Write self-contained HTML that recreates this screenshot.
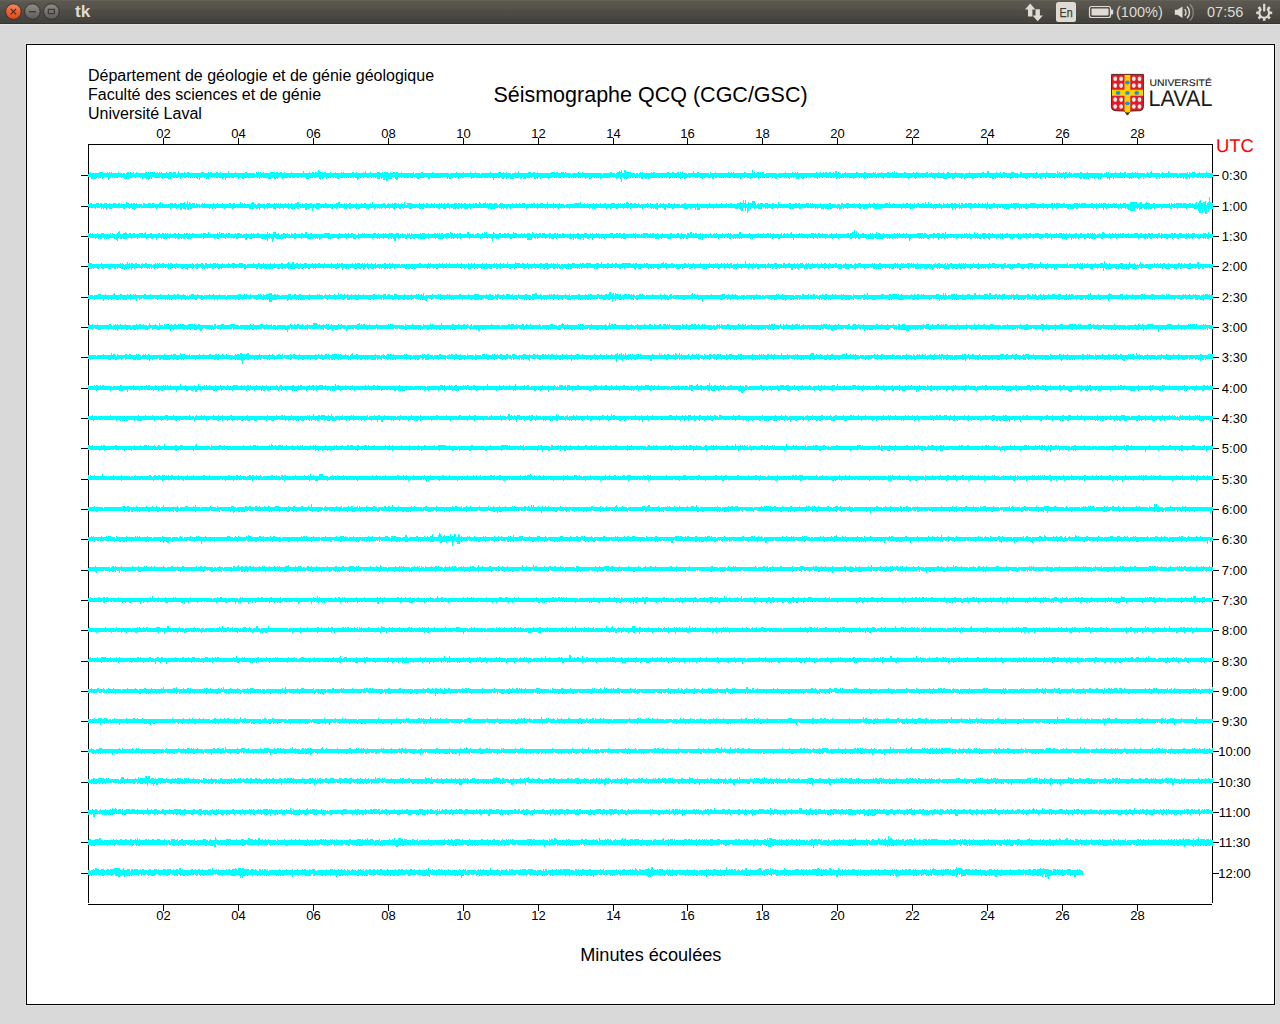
<!DOCTYPE html>
<html lang="fr">
<head>
<meta charset="utf-8">
<title>tk</title>
<style>
html,body{margin:0;padding:0;}
body{width:1280px;height:1024px;overflow:hidden;background:#d9d9d9;font-family:"Liberation Sans",sans-serif;position:relative;}
#panel{position:absolute;left:0;top:0;width:1280px;height:24px;background:linear-gradient(#67645b 0px,#5b5850 1.5px,#56534c 8px,#4e4d46 10px,#4b4a44 14px,#484742 16px,#464540 18px,#43423d 20px,#42413c 23px);box-sizing:border-box;border-bottom:1px solid #34332f;color:#dfdbd2;}
#hl{position:absolute;left:0;top:24px;width:1280px;height:1px;background:#e3e3e3;}
#panel .t{position:absolute;white-space:nowrap;}
#canvas{position:absolute;left:26px;top:44px;width:1247px;height:959px;border:1px solid #000;background:#fff;outline:1px solid #e2e2e2;}
svg.plot{position:absolute;left:0;top:0;font-family:"Liberation Sans",sans-serif;}
</style>
</head>
<body>
<div id="panel">
<svg width="1280" height="24" viewBox="0 0 1280 24" style="position:absolute;left:0;top:0;font-family:'Liberation Sans',sans-serif">
<defs>
<linearGradient id="gc" x1="0" y1="0" x2="0" y2="1"><stop offset="0" stop-color="#f58a63"/><stop offset="0.5" stop-color="#ee6231"/><stop offset="1" stop-color="#dc4a18"/></linearGradient>
<linearGradient id="gg" x1="0" y1="0" x2="0" y2="1"><stop offset="0" stop-color="#8f8e86"/><stop offset="1" stop-color="#5b5a55"/></linearGradient>
</defs>
<g stroke="#33312c" stroke-width="1">
<circle cx="13.4" cy="11.6" r="7.8" fill="url(#gc)"/>
<circle cx="32.4" cy="11.6" r="7.8" fill="url(#gg)"/>
<circle cx="51.4" cy="11.6" r="7.8" fill="url(#gg)"/>
</g>
<path d="M10.7 8.9l5.4 5.4M16.1 8.9l-5.4 5.4" stroke="#4a2a1c" stroke-width="1.2" fill="none"/>
<path d="M29 11.7h7" stroke="#3d3c38" stroke-width="1.4" fill="none"/>
<rect x="48.4" y="9.4" width="6" height="4.2" stroke="#3d3c38" stroke-width="1.3" fill="none"/>
<text x="75" y="17" font-size="16px" font-weight="bold" fill="#dfdbd2" textLength="15.3" lengthAdjust="spacingAndGlyphs">tk</text>
<!-- network -->
<path d="M1030.2 3.6l5.2 6h-3v6.8h-4.4v-6.8h-3z" fill="#dfdbd2"/>
<path d="M1037.7 21.2l-5.2 -5.6h3v-6.4h4.4v6.4h3z" fill="#dfdbd2"/>
<!-- keyboard indicator -->
<rect x="1056" y="2" width="20" height="20" rx="2.5" fill="#dfdbd2"/>
<text x="1059.6" y="17" font-size="13px" fill="#3c3b37" stroke="#3c3b37" stroke-width="0.25" textLength="13" lengthAdjust="spacingAndGlyphs">En</text>
<!-- battery -->
<rect x="1089.5" y="6.5" width="21" height="11" rx="2" fill="none" stroke="#dfdbd2" stroke-width="1.2"/>
<rect x="1091.5" y="8.5" width="17" height="7" rx="0.8" fill="#dfdbd2"/>
<path d="M1111 9.5h1.2q1 0 1 1v3q0 1 -1 1h-1.2z" fill="#dfdbd2"/>
<text x="1116" y="17.4" font-size="14.5px" fill="#dfdbd2">(100%)</text>
<!-- volume -->
<path d="M1174.8 9.8h2.6l5.1 -3.2v11.4l-5.1 -3.2h-2.6z" fill="#dfdbd2"/>
<path d="M1184.6 9.2a4.4 4.4 0 0 1 0 6.4" stroke="#dfdbd2" stroke-width="1.4" fill="none"/>
<path d="M1187 6.6a8 8 0 0 1 0 11.6" stroke="#dfdbd2" stroke-width="1.4" fill="none"/>
<path d="M1189.8 4.2a11.4 11.4 0 0 1 0 16.4" stroke="#8a8880" stroke-width="1.3" fill="none"/>
<text x="1207" y="17.4" font-size="14.5px" fill="#dfdbd2">07:56</text>
<!-- gear / power -->
<g transform="translate(1264.2 12.8)" fill="#dfdbd2">
<path d="M-2.9 -3.9A4.9 4.9 0 1 0 2.9 -3.9" stroke="#dfdbd2" stroke-width="2.1" fill="none"/>
<rect x="-1.1" y="-9" width="2.2" height="7.6"/>
<rect x="-1.3" y="5.4" width="2.6" height="2.6"/>
<rect x="-1.3" y="5.4" width="2.6" height="2.6" transform="rotate(45)"/>
<rect x="-1.3" y="5.4" width="2.6" height="2.6" transform="rotate(90)"/>
<rect x="-1.3" y="5.4" width="2.6" height="2.6" transform="rotate(135)"/>
<rect x="-1.3" y="5.4" width="2.6" height="2.6" transform="rotate(-45)"/>
<rect x="-1.3" y="5.4" width="2.6" height="2.6" transform="rotate(-90)"/>
<rect x="-1.3" y="5.4" width="2.6" height="2.6" transform="rotate(-135)"/>
</g>
</svg>

</div>
<div id="hl"></div>
<div id="canvas">
<svg class="plot" width="1247" height="959" viewBox="27 45 1247 959">
<g fill="#000" shape-rendering="crispEdges">
<rect x="88" y="144" width="1" height="759"/>
<rect x="88" y="144" width="1125" height="1"/>
<rect x="1212" y="144" width="1" height="759"/>
<rect x="88" y="904" width="1124" height="1"/>
<rect x="163" y="138" width="1" height="6"/>
<rect x="163" y="905" width="1" height="6"/>
<rect x="238" y="138" width="1" height="6"/>
<rect x="238" y="905" width="1" height="6"/>
<rect x="313" y="138" width="1" height="6"/>
<rect x="313" y="905" width="1" height="6"/>
<rect x="388" y="138" width="1" height="6"/>
<rect x="388" y="905" width="1" height="6"/>
<rect x="463" y="138" width="1" height="6"/>
<rect x="463" y="905" width="1" height="6"/>
<rect x="538" y="138" width="1" height="6"/>
<rect x="538" y="905" width="1" height="6"/>
<rect x="613" y="138" width="1" height="6"/>
<rect x="613" y="905" width="1" height="6"/>
<rect x="687" y="138" width="1" height="6"/>
<rect x="687" y="905" width="1" height="6"/>
<rect x="762" y="138" width="1" height="6"/>
<rect x="762" y="905" width="1" height="6"/>
<rect x="837" y="138" width="1" height="6"/>
<rect x="837" y="905" width="1" height="6"/>
<rect x="912" y="138" width="1" height="6"/>
<rect x="912" y="905" width="1" height="6"/>
<rect x="987" y="138" width="1" height="6"/>
<rect x="987" y="905" width="1" height="6"/>
<rect x="1062" y="138" width="1" height="6"/>
<rect x="1062" y="905" width="1" height="6"/>
<rect x="1137" y="138" width="1" height="6"/>
<rect x="1137" y="905" width="1" height="6"/>
<rect x="81" y="175" width="7" height="1"/>
<rect x="1213" y="175" width="6" height="1"/>
<rect x="81" y="206" width="7" height="1"/>
<rect x="1213" y="206" width="6" height="1"/>
<rect x="81" y="236" width="7" height="1"/>
<rect x="1213" y="236" width="6" height="1"/>
<rect x="81" y="266" width="7" height="1"/>
<rect x="1213" y="266" width="6" height="1"/>
<rect x="81" y="297" width="7" height="1"/>
<rect x="1213" y="297" width="6" height="1"/>
<rect x="81" y="327" width="7" height="1"/>
<rect x="1213" y="327" width="6" height="1"/>
<rect x="81" y="357" width="7" height="1"/>
<rect x="1213" y="357" width="6" height="1"/>
<rect x="81" y="388" width="7" height="1"/>
<rect x="1213" y="388" width="6" height="1"/>
<rect x="81" y="418" width="7" height="1"/>
<rect x="1213" y="418" width="6" height="1"/>
<rect x="81" y="448" width="7" height="1"/>
<rect x="1213" y="448" width="6" height="1"/>
<rect x="81" y="479" width="7" height="1"/>
<rect x="1213" y="479" width="6" height="1"/>
<rect x="81" y="509" width="7" height="1"/>
<rect x="1213" y="509" width="6" height="1"/>
<rect x="81" y="539" width="7" height="1"/>
<rect x="1213" y="539" width="6" height="1"/>
<rect x="81" y="570" width="7" height="1"/>
<rect x="1213" y="570" width="6" height="1"/>
<rect x="81" y="600" width="7" height="1"/>
<rect x="1213" y="600" width="6" height="1"/>
<rect x="81" y="630" width="7" height="1"/>
<rect x="1213" y="630" width="6" height="1"/>
<rect x="81" y="661" width="7" height="1"/>
<rect x="1213" y="661" width="6" height="1"/>
<rect x="81" y="691" width="7" height="1"/>
<rect x="1213" y="691" width="6" height="1"/>
<rect x="81" y="721" width="7" height="1"/>
<rect x="1213" y="721" width="6" height="1"/>
<rect x="81" y="751" width="7" height="1"/>
<rect x="1213" y="751" width="6" height="1"/>
<rect x="81" y="782" width="7" height="1"/>
<rect x="1213" y="782" width="6" height="1"/>
<rect x="81" y="812" width="7" height="1"/>
<rect x="1213" y="812" width="6" height="1"/>
<rect x="81" y="842" width="7" height="1"/>
<rect x="1213" y="842" width="6" height="1"/>
<rect x="81" y="873" width="7" height="1"/>
<rect x="1213" y="873" width="6" height="1"/>
</g>
<g fill="#00ffff" shape-rendering="crispEdges">
<path d="M88 174h1v-1h1v-1h1v1h8v-1h4v1h4v-1h1v1h1v-1h1v1h1v-1h1v1h6v-1h1v1h3v1h1v-1h2v1h1v-1h1v-1h2v1h1v-1h1v1h2v-1h1v2h1v-1h1v-1h1v1h8v-1h2v1h1v-1h1v1h1v-1h5v1h2v-1h1v1h1v-1h1v1h1v-1h1v1h4v-1h1v1h2v-1h3v1h1v-1h3v2h1v-1h1v-2h1v2h5v-1h1v1h2v-1h2v1h12v-1h3v1h4v-1h1v1h1v-1h2v1h4v-1h2v1h2v-1h1v1h7v-2h1v2h6v-1h1v1h9v-1h2v1h8v1h1v-2h1v1h1v-1h1v1h1v-1h1v1h2v-1h1v1h6v-1h5v1h1v-1h2v1h2v-1h2v1h2v-1h1v1h6v-1h1v1h11v-2h1v2h5v-1h1v1h2v-1h2v1h1v-1h2v1h1v-3h1v1h1v1h3v1h1v-1h2v1h4v-1h1v1h4v-1h1v1h5v-1h1v1h1v-1h1v1h8v-1h2v1h2v-1h1v1h6v-1h1v1h1v-2h1v2h4v-1h1v1h6v-1h3v1h2v-1h1v1h1v-1h4v1h2v-1h1v1h2v-1h2v1h1v-1h2v1h3v-1h1v1h11v-1h1v2h1v-1h6v-1h2v1h9v-1h1v1h16v1h1v-1h6v-1h1v1h6v-1h1v1h6v-1h1v1h4v-1h1v1h4v1h1v-1h9v-1h1v1h7v-1h3v1h2v-1h1v1h2v-1h1v1h4v1h1v-1h3v-1h1v1h2v-2h1v2h9v-1h3v1h2v-1h2v1h2v-1h1v1h13v-1h4v1h1v-1h2v1h3v-1h3v1h1v-1h1v1h5v1h1v-1h6v-1h1v1h3v-1h1v1h19v1h1v-1h7v-1h2v1h3v1h1v-1h1v-1h2v-1h1v1h1v-2h1v3h2v-3h2v2h5v1h4v1h1v-1h2v1h1v-1h1v-1h1v1h1v-1h1v1h8v-1h1v1h1v-1h2v1h12v-1h2v1h3v-1h2v1h3v-1h2v2h1v-2h1v1h1v-1h1v1h4v1h1v-1h5v-2h1v2h3v-1h2v1h10v1h1v-2h1v1h4v-1h1v1h12v-1h1v1h2v-1h1v1h1v-1h1v1h10v-1h2v1h6v-3h1v3h1v-1h1v1h2v-1h2v1h1v-1h1v1h1v-1h2v2h2v-1h11v1h1v-1h7v-1h1v1h6v-1h1v1h2v-1h1v1h1v-1h1v1h18v-1h1v1h3v-1h1v1h2v-1h1v1h1v-1h2v1h2v-1h2v1h2v-1h1v1h1v-2h2v2h1v-1h1v1h2v1h1v-1h3v-1h1v1h10v-1h2v1h6v-1h2v1h7v-1h1v1h1v-1h1v2h1v-1h4v-1h1v1h5v-1h2v1h3v-1h1v1h1v-2h1v2h1v-1h1v1h7v-1h2v1h7v-1h1v1h2v-1h1v1h9v-1h2v2h1v-1h2v-1h1v1h6v-1h1v1h4v-1h1v1h1v1h1v-1h1v-1h2v1h6v-1h1v1h8v1h1v-1h4v-1h1v1h12v-1h2v1h3v-2h2v2h7v-1h1v1h3v-1h1v2h1v-1h1v-1h2v1h6v-1h3v1h4v1h2v-2h2v1h14v-1h1v1h1v1h1v-1h7v-1h1v1h9v1h1v-3h1v2h1v-1h1v1h3v-1h1v1h1v-1h2v2h1v-1h1v-1h1v1h2v1h1v-1h7v-1h2v1h5v-1h1v1h15v1h1v-1h2v-1h1v1h1v-1h1v2h1v-1h5v-1h1v1h4v-1h1v1h3v-1h2v2h1v-1h5v-1h1v1h2v-1h1v1h1v-1h1v1h7v1h1v-1h1v-1h1v1h2v-1h1v-1h1v2h8v1h1v-1h1v-1h1v1h5v-2h1v1h1v1h8v1h1v-1h8v-1h1v2h1v-2h1v1h2v-1h3v1h1v1h1v-1h2v-1h1v1h6v-1h1v1h6V177h-1v1h-5v-1h-1v1h-1v-1h-1v1h-2v-1h-1v1h-1v-1h-1v1h-2v-1h-3v1h-2v-1h-2v2h-1v-2h-1v1h-1v1h-2v-2h-1v2h-1v-2h-1v1h-2v-1h-1v1h-2v-1h-3v1h-1v-1h-1v1h-1v-1h-2v1h-1v-1h-1v1h-1v-1h-1v1h-3v-1h-2v2h-1v-2h-2v2h-1v-2h-5v1h-3v-1h-2v1h-1v-1h-1v2h-1v-2h-2v1h-2v1h-1v-1h-1v-1h-1v1h-1v-1h-1v1h-2v1h-1v-1h-1v1h-1v-1h-2v-1h-2v1h-1v-1h-1v1h-8v-1h-1v2h-1v-2h-1v1h-2v2h-1v-2h-1v1h-1v-2h-5v1h-1v1h-1v-1h-1v1h-1v-1h-3v1h-1v-1h-4v-1h-1v2h-3v-1h-1v1h-2v-2h-1v2h-2v-1h-2v-1h-1v1h-2v-1h-3v1h-1v-1h-1v1h-1v-1h-1v1h-1v-1h-1v1h-1v1h-1v-2h-1v1h-2v-1h-1v1h-1v-1h-1v1h-1v-1h-2v1h-3v-1h-1v1h-3v-1h-2v2h-1v-2h-3v1h-1v1h-1v-2h-1v1h-3v1h-1v-1h-2v-1h-3v1h-1v-1h-1v1h-1v1h-2v-1h-3v-1h-1v1h-1v-1h-2v1h-3v-1h-1v1h-3v1h-1v-1h-3v-1h-2v1h-1v-1h-1v1h-2v-1h-1v1h-1v-1h-1v1h-2v1h-1v-1h-1v1h-2v-1h-3v-1h-2v1h-2v-1h-1v1h-1v-1h-1v1h-2v-1h-2v1h-4v1h-2v-1h-7v1h-1v-2h-1v1h-1v1h-1v-1h-2v-1h-1v1h-1v-1h-1v1h-2v1h-2v-2h-1v1h-4v1h-4v-1h-6v-1h-1v1h-1v1h-1v-1h-2v-1h-4v1h-1v-1h-3v1h-2v-1h-1v1h-3v-1h-1v1h-1v1h-1v-1h-1v-1h-2v1h-3v1h-1v-1h-5v-1h-1v1h-10v-1h-1v1h-4v-1h-3v2h-1v-1h-2v-1h-2v1h-1v-1h-1v1h-1v-1h-3v1h-4v-1h-1v1h-1v-1h-1v1h-1v1h-1v-1h-1v-1h-1v1h-1v-1h-1v1h-1v-1h-2v1h-3v1h-1v-1h-4v-1h-1v1h-1v-1h-1v1h-1v-1h-1v1h-4v1h-1v-1h-2v1h-1v-2h-2v1h-1v-1h-1v1h-2v-1h-1v1h-3v-1h-3v1h-1v-1h-2v1h-1v-1h-1v2h-1v-1h-3v-1h-3v1h-1v-1h-1v1h-1v-1h-1v1h-1v-1h-1v1h-1v1h-2v-1h-1v-1h-2v2h-3v-2h-2v1h-1v-1h-1v1h-1v-1h-1v2h-1v-1h-1v-1h-1v1h-1v-1h-1v1h-1v-1h-2v1h-3v-1h-2v2h-2v-1h-1v-1h-1v1h-1v-1h-3v1h-3v-1h-1v1h-3v-1h-1v1h-1v-1h-1v2h-1v-2h-2v1h-2v-1h-1v1h-2v1h-1v-1h-3v-1h-2v1h-1v-1h-2v1h-1v1h-1v-2h-1v1h-6v-1h-2v1h-4v-1h-1v1h-1v-1h-1v1h-5v-1h-2v1h-2v-1h-1v2h-2v-2h-1v1h-3v-1h-2v1h-3v1h-1v-1h-2v-1h-2v1h-3v-1h-4v1h-2v-1h-2v1h-1v1h-2v-2h-1v1h-2v1h-1v-1h-2v-1h-1v1h-3v-1h-1v1h-1v-1h-1v1h-1v1h-1v-2h-2v1h-1v-1h-1v1h-1v-1h-1v1h-2v-1h-1v1h-2v-1h-1v1h-7v1h-2v-2h-1v2h-2v-1h-1v-1h-1v2h-2v-2h-1v1h-1v-1h-1v1h-3v-1h-1v1h-2v-1h-1v1h-1v-1h-1v1h-1v1h-2v-1h-1v1h-1v-1h-1v-1h-1v5h-1v-3h-1v-2h-1v1h-2v1h-1v-1h-1v-1h-1v1h-1v-1h-3v1h-9v1h-1v-2h-1v1h-3v-1h-1v1h-1v-1h-2v1h-1v1h-2v-2h-1v1h-2v1h-1v-1h-1v-1h-1v1h-1v-1h-1v1h-3v-1h-2v1h-3v-1h-1v1h-1v-1h-1v1h-2v-1h-1v1h-1v-1h-1v1h-2v-1h-2v1h-3v-1h-1v1h-3v-1h-2v1h-3v1h-1v-1h-7v1h-1v-2h-2v2h-1v-1h-1v1h-2v-2h-2v1h-1v-1h-1v1h-3v-1h-1v2h-3v-2h-1v1h-1v1h-1v-2h-1v1h-4v-1h-1v2h-4v-1h-3v1h-1v-2h-1v1h-1v1h-2v-1h-1v-1h-1v1h-2v-1h-1v1h-3v2h-1v-2h-1v-1h-1v1h-1v-1h-2v1h-4v-1h-1v1h-7v-1h-1v1h-3v1h-1v-2h-7v1h-2v-1h-1v1h-1v-1h-1v2h-1v-2h-2v1h-1v-1h-1v1h-3v1h-2v-2h-1v2h-1v-2h-4v1h-1v-1h-1v1h-10v-1h-1v2h-2v-2h-4v1h-5v1h-2v-1h-1v-1h-3v1h-3v-1h-1v1h-5v-1h-2v1h-1v-1h-1v1h-1v-1h-1v3h-2v-1h-1v-2h-1v1h-1v-1h-1v2h-4v2h-2v-4h-1v3h-2v-2h-1v1h-1v-2h-1v2h-3v-2h-1v1h-1v-1h-1v1h-1v-1h-1v1h-1v-1h-2v1h-2v-1h-3v1h-1v-1h-1v1h-2v-1h-1v2h-1v1h-1v-2h-2v-1h-1v1h-1v-1h-1v1h-2v-1h-1v1h-1v-1h-1v1h-1v-1h-1v1h-5v-1h-1v2h-2v-1h-2v-1h-1v1h-1v-1h-2v1h-4v1h-1v-2h-2v1h-1v1h-1v-1h-1v2h-1v-1h-1v-2h-3v1h-2v-1h-1v1h-4v1h-3v-1h-1v-1h-3v1h-1v-1h-2v1h-2v-1h-2v1h-3v-1h-1v1h-2v-1h-1v1h-5v1h-1v-1h-1v-1h-2v1h-1v1h-1v-1h-1v1h-2v-2h-1v1h-1v-1h-1v2h-3v-1h-5v-1h-1v1h-1v-1h-1v2h-1v-2h-1v1h-1v-1h-2v1h-7v-1h-1v1h-3v1h-2v-1h-1v-1h-1v1h-1v1h-1v-2h-4v1h-3v-1h-1v1h-4v2h-1v-3h-1v1h-1v1h-1v-1h-3v-1h-1v1h-2v-1h-1v1h-1v-1h-1v1h-1v-1h-3v2h-1v-1h-1v1h-1v-2h-1v1h-1v-1h-2v1h-2v2h-1v-3h-1v2h-1v-1h-1v-1h-1v1h-1v-1h-1v1h-1v-1h-1v1h-1v-1h-1v1h-1v-1h-2v1h-2v-1h-1v1h-1v-1h-1v2h-1v-2h-2v1h-2v-1h-1v1h-2v-1h-1v1h-1v1h-1v-1h-1v1h-1v-1h-4v-1h-1v2h-1v-1h-1v-1h-1v1h-6v-1h-2v2h-1v-2h-1v2h-1v1h-1v-1h-2v-1h-3v1h-1v-2h-1v1h-1v-1h-4v1h-1v-1h-2v1h-4v1h-1v-2h-1v2h-3v-1h-1v-1h-1v1h-1v-1h-3v1h-4v-1h-1v1h-1v-1h-1v1h-1v1h-1v1h-1v-3h-4v1h-1v1h-1v-2h-1v1h-3v-1h-1v1h-1v1h-5v-2h-3z"/>
<path d="M88 204h2v-1h2v1h4v-1h3v1h1v-1h2v1h2v-1h3v1h2v-1h1v1h3v-1h3v1h2v-1h2v1h1v-1h1v1h4v-2h1v1h2v1h2v-1h1v1h1v-1h2v1h1v-1h1v1h5v1h1v-2h2v1h3v-1h3v1h1v-1h3v1h4v-1h1v-1h1v2h1v-1h1v1h7v-1h3v1h1v-1h2v1h1v1h1v-1h2v-1h4v-1h1v2h2v-3h1v3h1v-2h1v1h1v1h1v-1h3v2h1v-2h1v1h3v1h1v-1h1v-1h1v1h1v-1h1v1h8v-1h1v1h3v-1h1v1h4v-1h1v1h6v-1h2v1h2v-1h2v1h5v-2h1v2h1v-1h1v1h1v-1h1v1h6v-1h1v-1h2v2h2v1h1v-1h1v-1h2v1h5v1h1v-1h1v-1h3v1h4v-1h1v1h1v-1h1v1h1v-1h1v1h1v-1h1v1h4v-1h1v1h2v-1h1v1h2v-1h1v1h3v-1h2v-1h2v2h3v-1h1v1h2v-1h2v1h3v-1h2v1h4v-1h4v1h5v-1h2v1h6v1h1v-1h2v-1h2v-1h2v2h4v-1h1v1h1v-1h1v1h2v-1h2v1h5v-1h1v1h4v-1h1v1h2v-1h2v1h4v-1h1v1h1v-2h1v2h10v-1h2v1h1v1h1v-1h1v-1h1v1h3v-1h1v1h1v-1h3v1h1v-1h1v1h2v-1h1v1h2v-2h1v2h1v1h1v-2h5v1h7v-1h1v1h3v-1h1v1h1v1h1v-2h2v1h3v-1h1v1h2v-1h1v1h4v-1h1v1h1v-1h1v1h2v-1h1v1h2v-1h2v1h5v-1h3v1h1v-1h2v1h1v-1h1v1h2v-1h2v1h3v-1h1v1h3v-1h1v1h1v-1h2v1h2v-2h1v1h1v1h2v-1h2v-1h1v2h1v-1h1v1h1v-1h3v1h2v-1h3v1h1v1h1v-1h1v-1h3v1h9v-1h1v1h3v-1h1v1h2v-1h1v1h2v-1h3v1h6v-1h1v1h1v-1h2v1h2v-1h1v1h2v-1h3v1h4v-2h1v2h5v-1h1v1h5v-1h1v1h4v1h2v-1h8v-1h6v-1h1v2h3v-1h1v1h2v-1h1v1h5v-1h1v1h2v-1h1v1h3v-1h1v1h3v-1h2v1h5v-1h4v1h3v-1h1v1h1v-1h1v1h3v-1h1v1h1v-2h2v1h1v1h1v-1h2v1h2v-1h2v1h2v-1h1v1h1v1h1v-1h6v-1h1v1h1v1h1v-2h1v1h5v-1h2v2h1v-1h1v-1h1v1h2v-1h1v1h3v1h1v-2h2v1h4v-1h1v1h5v1h1v-1h3v-1h2v1h11v-1h1v1h11v-1h1v1h6v-1h1v1h4v-1h1v1h4v-1h1v1h3v-1h2v1h5v-1h3v-1h1v1h2v-3h1v3h1v-3h1v4h2v-2h1v1h3v-2h3v2h1v2h1v-1h1v-1h1v1h1v-1h3v1h2v-1h3v1h4v-1h2v1h3v1h1v-3h1v2h10v-1h2v1h4v-1h2v1h1v-1h2v1h6v-1h3v1h1v-1h1v1h1v-1h1v1h7v-1h1v1h8v-1h2v1h5v1h1v-1h3v1h1v-2h2v1h3v-1h3v1h5v-1h1v1h4v-1h1v1h1v1h1v-1h7v-1h1v1h3v-1h2v1h2v-1h1v1h7v-1h3v1h1v-2h1v2h1v1h1v-1h1v-1h1v1h9v-1h1v1h2v-1h2v1h2v-1h1v1h3v-1h1v1h2v-1h2v1h3v-1h2v1h1v-2h1v2h2v-2h1v2h2v-1h1v1h1v1h1v-1h5v-1h1v1h2v1h1v-2h1v1h3v-1h1v1h3v-1h2v1h1v-1h2v1h3v-1h1v2h1v-2h2v1h2v-1h2v1h1v-1h4v1h2v-1h2v1h2v-1h1v1h3v-1h1v1h2v-1h1v1h1v-2h1v2h5v-1h2v1h16v-1h1v1h1v-1h6v1h7v-1h1v1h3v-1h6v1h6v-1h2v1h7v-1h2v2h1v-2h1v1h1v-1h4v1h3v-1h2v1h6v1h1v-1h2v-1h4v1h1v-1h1v1h1v-1h5v1h5v-1h2v1h3v-1h1v1h2v-1h1v1h1v-1h1v1h1v-1h3v1h2v-1h1v1h4v-1h2v1h1v-1h1v1h3v-1h1v1h2v-1h3v1h4v-2h7v2h2v-1h1v-1h2v2h3v-1h1v-1h1v1h3v1h3v-1h2v1h14v-1h1v2h1v-2h1v1h2v-1h1v1h1v-1h6v1h1v-1h3v1h3v-1h2v1h1v-1h1v1h2v-1h1v-1h1v3h1v-2h1v-2h1v-1h1v3h2v-1h2v-1h1v4h1v-2h1v-1h1v-5h1v5h1v1h2V209h-1v-1h-1v1h-1v-1h-1v4h-1v-4h-1v6h-2v-3h-1v-2h-1v4h-1v-4h-1v4h-2v-2h-1v-2h-4v-1h-7v1h-1v-1h-8v1h-1v-1h-4v-1h-1v2h-2v-1h-8v1h-1v-2h-1v1h-5v1h-1v-1h-2v1h-2v-1h-1v1h-1v-1h-1v1h-3v-1h-2v1h-2v1h-1v-2h-1v1h-1v-1h-2v3h-5v-1h-2v-1h-1v-2h-1v2h-1v-1h-3v1h-1v-1h-2v1h-1v-1h-4v-1h-1v1h-6v1h-1v-1h-1v-1h-1v3h-1v-2h-6v1h-1v-1h-2v1h-1v-1h-13v-1h-1v1h-1v1h-2v-1h-2v1h-4v-2h-1v2h-2v-1h-3v-1h-1v1h-6v1h-1v-1h-3v1h-1v-1h-4v1h-1v-1h-3v1h-1v-1h-5v1h-1v-1h-9v1h-3v-1h-2v-1h-1v2h-1v-1h-1v2h-1v-2h-3v1h-2v-1h-5v1h-3v-1h-1v1h-1v-1h-2v-1h-1v1h-2v-1h-1v2h-1v-1h-6v1h-2v-2h-1v1h-1v1h-1v-1h-15v1h-1v-1h-2v-1h-1v1h-5v1h-1v-1h-1v1h-1v-2h-1v1h-2v2h-1v-2h-2v2h-1v-2h-1v-1h-1v1h-8v1h-1v-1h-5v1h-1v-1h-1v1h-1v-1h-14v-1h-2v1h-1v-1h-1v1h-2v1h-3v-1h-4v1h-1v-1h-3v1h-1v-1h-20v1h-7v-1h-1v-1h-2v1h-1v-1h-1v1h-2v1h-1v-1h-1v1h-2v-2h-1v1h-1v1h-2v-1h-2v-1h-1v1h-8v1h-1v-1h-3v1h-1v-2h-1v2h-2v1h-1v-2h-1v1h-1v-1h-5v1h-2v-1h-1v1h-4v-1h-1v1h-3v-1h-3v1h-1v-1h-1v1h-1v-2h-1v1h-7v-1h-1v1h-5v1h-2v-1h-5v1h-2v-1h-1v1h-2v-1h-11v1h-1v-1h-4v1h-2v-1h-3v1h-1v-1h-1v1h-1v-2h-1v1h-1v-1h-1v2h-4v-1h-3v1h-1v-1h-3v1h-1v-1h-1v3h-1v2h-1v-5h-1v3h-1v-3h-2v3h-2v-1h-1v-1h-1v-1h-1v1h-3v-1h-7v-1h-1v1h-13v1h-1v-1h-5v1h-1v-1h-6v-1h-1v3h-3v-3h-1v3h-1v-2h-4v1h-1v-1h-2v1h-4v-1h-10v1h-2v-1h-5v-1h-1v3h-2v-2h-2v-1h-1v1h-3v2h-1v-1h-2v-1h-1v1h-1v-1h-1v1h-1v-1h-1v-1h-2v1h-1v-1h-1v1h-2v-1h-1v2h-1v-1h-3v-1h-1v1h-7v1h-1v-1h-2v1h-1v-1h-3v1h-1v-1h-5v1h-2v-1h-5v1h-1v-1h-3v1h-1v-1h-11v1h-1v-1h-1v1h-1v-1h-2v1h-1v-1h-19v1h-1v-1h-3v-1h-1v1h-6v1h-1v-1h-1v-1h-1v1h-2v1h-1v-1h-5v1h-1v-1h-1v1h-1v-1h-7v1h-1v-1h-7v-1h-1v1h-2v1h-1v-2h-1v1h-14v1h-1v-1h-1v-1h-1v1h-1v1h-1v-1h-2v1h-1v-1h-1v1h-1v-1h-2v-1h-1v1h-3v1h-5v-1h-1v1h-1v-1h-17v1h-1v-1h-2v1h-4v-1h-2v1h-1v-1h-2v1h-2v-1h-1v1h-3v-1h-2v-1h-1v2h-1v-1h-3v1h-3v-1h-3v1h-2v-1h-2v-1h-1v1h-10v-1h-1v2h-2v-1h-1v1h-2v-1h-2v-1h-1v1h-4v1h-3v-1h-5v1h-1v-1h-1v-1h-1v2h-2v-1h-3v-1h-1v3h-1v-1h-1v-1h-3v1h-1v-1h-3v1h-1v-1h-1v-1h-1v1h-1v1h-1v-1h-1v1h-1v-1h-2v-1h-1v1h-1v1h-1v-1h-5v1h-1v-1h-1v1h-1v-1h-6v1h-2v-1h-1v1h-1v-1h-1v-1h-1v1h-3v1h-2v-1h-2v1h-1v-1h-1v1h-1v-1h-5v-1h-1v1h-1v1h-1v-1h-2v-1h-1v2h-2v-1h-8v-1h-1v1h-3v1h-3v-1h-1v-1h-1v1h-1v3h-1v-3h-3v1h-1v-1h-1v2h-2v-2h-5v-1h-1v2h-2v-1h-2v1h-1v-1h-1v2h-1v-1h-1v-1h-2v1h-1v-1h-4v1h-1v-1h-3v1h-1v-1h-3v2h-1v-1h-2v-2h-1v1h-4v1h-1v-1h-2v1h-1v-1h-4v2h-1v-2h-1v1h-2v-1h-2v1h-5v-1h-12v-1h-1v1h-2v1h-2v-1h-7v1h-1v-1h-8v1h-1v-1h-2v1h-1v-1h-2v1h-1v-1h-7v-1h-2v1h-1v-1h-1v1h-6v1h-2v-1h-1v2h-2v-3h-1v3h-1v-1h-2v-1h-1v2h-2v-2h-3v1h-1v-1h-5v1h-1v-1h-11v-1h-1v1h-1v1h-1v-1h-1v-1h-1v1h-13v-1h-1v1h-4v1h-1v1h-1v-1h-2v-1h-2v1h-1v-1h-1v-1h-1v1h-2v1h-2v-1h-11v1h-3v-1h-2v2h-1v-2h-2v1h-1v-1h-1v1h-1v-2h-1v1h-3v-1h-1v2h-1v-1h-6v-1h-1z"/>
<path d="M88 233h1v1h1v-1h1v1h1v-1h1v1h4v-1h1v1h3v-1h3v1h6v-1h1v1h1v-1h1v1h2v1h1v-1h1v-1h1v-1h1v-1h1v3h3v-1h2v-1h1v1h1v1h2v-1h2v1h2v-1h2v1h4v-1h4v1h1v-1h1v-1h1v2h4v-1h2v1h6v-1h2v1h2v-1h2v1h1v-1h1v1h1v-1h1v1h2v-1h1v1h3v-1h2v1h2v-1h1v1h5v-1h1v1h1v-1h2v1h1v-1h1v1h2v-1h2v1h7v-1h1v1h1v-1h3v1h2v-2h1v2h8v-1h1v1h1v-2h1v2h1v-1h3v1h2v-1h1v1h1v-1h2v1h5v-1h1v1h1v-1h3v1h2v1h1v-1h3v-1h1v1h4v-1h1v1h1v-1h1v1h3v-1h2v1h8v-2h1v2h1v-1h1v1h3v-2h3v2h2v-1h1v2h2v-1h2v-1h2v1h2v-1h1v1h2v1h1v-2h1v1h2v-1h2v1h5v-1h2v1h2v-2h2v2h3v-1h2v1h12v-1h6v1h9v-1h1v1h5v-1h1v1h2v-1h1v1h2v-1h2v1h3v1h2v-2h1v1h3v-1h1v1h1v-1h1v1h8v-1h3v1h2v-1h1v1h4v-1h1v1h1v-1h1v1h3v-1h4v1h3v-1h3v2h1v-1h2v-1h1v1h3v1h1v-2h1v1h1v-1h1v2h1v-2h1v1h8v-1h1v1h1v-1h3v1h3v-1h1v1h5v-1h2v1h1v-1h1v1h1v-1h1v1h1v-1h2v1h3v-1h3v1h1v-2h1v1h2v2h1v-2h1v1h2v-1h1v1h1v-1h2v1h6v-2h2v2h5v1h1v-1h2v-1h2v1h3v-1h1v1h1v-2h1v1h1v-1h1v3h1v-1h5v-2h1v1h1v1h4v-1h2v1h3v-1h2v1h1v-1h2v1h4v-2h1v1h3v1h4v-1h1v1h2v-1h1v1h2v-1h3v1h2v-2h1v1h1v1h2v-1h1v1h2v-1h2v1h1v-1h3v1h4v-1h2v1h3v-1h2v1h1v-1h1v1h3v1h1v-2h2v1h6v-1h1v1h6v-1h2v1h5v-1h3v1h3v-1h1v1h1v-1h1v1h3v-1h1v1h1v-1h1v1h11v-1h3v2h1v-1h2v-1h2v1h1v-1h2v1h2v-1h2v1h8v-1h1v1h1v-1h1v1h4v1h1v-1h2v-1h5v1h2v-1h1v1h1v-1h2v1h3v-1h1v1h1v1h1v-1h2v-1h1v1h7v-1h2v1h3v1h1v-1h1v-1h2v1h2v-1h1v1h4v1h1v-2h2v1h1v-2h2v2h1v-1h1v1h1v-1h2v1h3v-1h1v1h1v-1h1v1h7v-1h1v1h1v1h1v-1h1v-1h1v1h1v-1h1v1h5v-1h1v1h5v-1h1v1h1v-1h1v1h1v1h1v-1h6v-2h2v2h8v-1h1v1h8v-1h1v1h4v-1h1v1h3v-1h2v1h1v-1h1v1h2v-1h1v1h7v-1h1v2h1v-1h1v-1h1v1h2v-1h1v1h2v-1h1v-1h1v2h3v1h1v-1h3v-1h1v1h1v-1h1v1h9v-1h3v1h1v-1h1v1h2v-1h2v1h2v-1h1v1h5v1h1v-1h2v-1h1v1h4v-1h1v1h10v-1h2v2h1v-2h2v-1h2v-2h1v4h1v-3h1v4h1v-2h1v1h3v-1h2v1h3v1h1v-1h2v-1h1v1h1v-1h1v1h3v-2h1v2h1v-1h2v1h3v-1h1v1h10v-1h1v1h2v-1h1v1h1v-1h1v1h3v-1h1v1h2v-1h1v1h10v-1h6v1h1v-1h2v1h1v1h2v-1h4v-1h2v1h2v-1h3v1h2v-1h2v1h1v-2h1v2h17v1h1v-2h1v1h1v-1h1v1h2v-1h1v1h4v-2h1v2h2v-1h1v1h3v1h1v-2h4v1h2v-1h2v1h2v-1h1v1h7v-1h1v1h1v-1h1v2h1v-1h2v-1h2v1h10v-1h1v1h4v-1h1v1h1v-1h2v1h2v-1h2v1h4v-1h4v1h6v-1h3v1h2v-1h1v1h5v-1h1v1h2v-1h3v1h1v-1h1v1h2v-1h1v1h2v-1h1v1h5v-1h2v1h3v-1h2v1h5v-1h2v1h1v-1h1v1h1v-1h1v1h1v-1h1v1h1v1h1v-1h2v-1h1v1h2v-2h2v1h1v1h4v-1h1v1h2v-1h1v1h2v-1h1v1h2v-1h1v1h1v-1h1v1h1v-1h2v1h4v-1h1v1h5v-1h4v1h2v-1h2v1h3v-1h1v1h2v-1h2v1h1v-1h2v1h5v-1h2v2h1v-2h1v1h9v-1h2v1h1v-1h2v1h3v-1h3v1h4v-1h1v1h1v-1h1v1h3v-1h3v1h4v1h1v-1h3v-1h3v1h2v-2h1v2h4V238h-4v1h-2v-2h-1v2h-1v-1h-1v1h-1v-1h-3v1h-2v-1h-1v-1h-1v1h-1v-1h-1v1h-1v1h-1v-1h-2v1h-1v-1h-2v1h-2v-1h-6v1h-2v-1h-4v1h-1v-1h-4v1h-2v-1h-4v1h-1v-1h-3v1h-1v-1h-1v-1h-1v1h-3v1h-2v-1h-1v-1h-1v2h-1v-1h-1v1h-2v-1h-5v1h-1v-1h-13v-1h-1v1h-7v1h-1v-1h-5v1h-1v-1h-7v1h-2v-1h-5v1h-2v-1h-1v1h-2v-1h-1v1h-1v-1h-3v1h-2v-1h-5v1h-1v-1h-2v1h-1v-1h-1v1h-1v-1h-1v2h-1v-2h-4v2h-1v-2h-1v1h-1v-1h-1v1h-1v-1h-10v2h-1v-3h-1v1h-2v1h-1v-1h-2v-1h-1v1h-3v1h-2v-1h-5v1h-1v-1h-1v-1h-1v1h-4v1h-1v-1h-5v1h-1v-1h-1v1h-1v-1h-2v-1h-1v1h-2v1h-1v-1h-1v1h-1v-1h-1v-1h-1v1h-4v-1h-1v2h-1v-1h-1v1h-1v-1h-3v1h-1v-1h-6v2h-1v-1h-1v-1h-3v1h-2v-1h-2v1h-2v-1h-1v1h-1v-1h-1v1h-1v-1h-3v1h-2v-1h-2v1h-1v-1h-5v1h-1v-1h-1v-1h-1v1h-2v1h-1v-1h-3v-1h-1v1h-4v1h-1v-1h-1v-1h-1v2h-1v-1h-2v1h-1v-1h-2v2h-1v-2h-4v1h-1v-1h-4v1h-2v-1h-3v1h-1v-1h-1v1h-1v-1h-1v1h-1v-1h-8v1h-1v2h-1v-3h-3v1h-1v-1h-7v1h-1v-1h-1v1h-1v-1h-2v1h-1v-1h-2v1h-1v-1h-1v1h-1v-1h-4v1h-7v-1h-2v1h-6v-2h-1v2h-1v-1h-6v1h-2v-1h-2v1h-1v-1h-3v1h-2v-1h-11v1h-1v-1h-5v1h-1v-1h-6v1h-1v-1h-6v-1h-1v2h-1v-1h-2v-1h-1v2h-1v-1h-3v-1h-1v1h-1v1h-1v-1h-13v2h-1v-2h-13v1h-2v-1h-5v1h-1v-2h-1v1h-3v-1h-1v1h-14v1h-1v-1h-1v1h-1v-1h-8v1h-1v-1h-1v1h-1v-1h-1v1h-1v-1h-1v1h-1v-1h-1v1h-1v-1h-2v1h-2v-1h-2v-1h-2v1h-1v-1h-1v1h-4v1h-1v-2h-1v1h-9v-1h-1v1h-4v2h-1v-2h-1v1h-3v-1h-10v1h-2v-2h-1v1h-1v1h-1v-1h-1v1h-2v-1h-9v1h-4v-1h-5v1h-1v-1h-2v1h-4v-1h-8v-1h-1v1h-9v-1h-1v2h-1v-1h-9v1h-3v-1h-1v1h-1v-1h-7v1h-1v-1h-7v-1h-1v2h-1v-1h-2v1h-1v-1h-1v1h-1v-1h-6v2h-1v-2h-3v1h-2v-1h-2v-1h-1v3h-1v-2h-2v1h-4v-1h-1v1h-1v-1h-1v2h-1v-2h-1v1h-3v-1h-2v-1h-2v1h-7v-1h-1v2h-1v-1h-2v1h-3v-1h-1v1h-1v-2h-1v1h-2v1h-1v-1h-4v-1h-1v1h-2v1h-1v-2h-1v2h-1v-1h-1v-1h-1v1h-1v2h-5v-2h-2v-1h-1v1h-2v-1h-1v1h-3v-1h-1v1h-5v1h-2v-1h-11v1h-1v-1h-1v1h-1v-1h-3v3h-1v-2h-1v-1h-2v-1h-1v2h-1v-1h-6v1h-1v-1h-10v1h-1v-1h-8v1h-1v-1h-2v1h-1v-1h-3v1h-1v-1h-1v1h-1v-2h-1v1h-3v1h-1v-1h-1v-1h-1v1h-1v1h-5v-1h-2v1h-1v-1h-6v1h-1v-1h-3v1h-5v-1h-1v1h-1v-1h-3v1h-2v-1h-1v1h-2v-1h-3v1h-2v-1h-6v1h-1v-1h-2v3h-2v-2h-1v-2h-1v2h-1v-1h-2v1h-1v-1h-4v1h-1v-1h-3v1h-1v-1h-1v1h-1v-1h-4v1h-1v-1h-13v1h-1v-1h-2v1h-3v-2h-1v1h-5v1h-1v-1h-7v1h-2v-1h-6v1h-3v-1h-7v1h-1v1h-1v-2h-1v1h-1v-1h-1v1h-1v-1h-2v1h-1v-1h-1v1h-4v-1h-5v1h-1v-1h-5v1h-2v-1h-8v1h-1v-1h-2v1h-1v-2h-1v2h-5v-1h-1v-1h-1v3h-1v2h-1v-3h-1v-1h-1v1h-1v-1h-1v3h-1v-2h-1v1h-1v-1h-4v-1h-9v1h-3v-1h-2v2h-2v-2h-7v1h-2v-2h-1v1h-1v1h-1v-1h-6v-1h-1v2h-1v-1h-5v-1h-1v2h-2v-1h-2v1h-1v-1h-10v1h-1v-2h-1v1h-11v1h-4v-1h-1v-1h-1v2h-2v-1h-1v1h-1v-1h-1v1h-3v-1h-1v1h-1v-1h-5v1h-1v-1h-2v1h-1v-1h-1v1h-2v-1h-1v1h-1v-1h-4v2h-1v-2h-3v1h-2v-1h-4v1h-1v-1h-5v-1h-1v1h-2v1h-1v-2h-1v1h-4v1h-1v-1h-4v1h-4v-1h-1v1h-2v-2h-1v1h-1v3h-1v-1h-1v-1h-2v-1h-5v1h-1v-1h-1v1h-1v-1h-1v1h-1v-1h-2v1h-2v-1h-1v1h-1v-1h-2v1h-1v-1h-5v-1h-1v1h-1z"/>
<path d="M88 263h4v1h9v-1h1v1h18v-1h1v1h1v-1h1v1h1v1h1v-1h2v-2h1v2h1v-1h1v1h1v-1h2v1h2v-1h2v1h3v1h1v-1h1v-1h1v1h2v-1h2v1h5v1h1v-1h2v-1h1v1h1v-1h1v1h1v-1h1v1h2v-1h2v1h4v-1h1v1h1v-1h2v1h1v1h1v-1h2v-1h1v1h15v-1h1v1h1v1h1v-1h2v-1h1v1h3v-1h2v1h1v1h1v-2h2v1h3v-1h1v1h2v-1h3v1h1v-1h1v1h4v-1h1v1h2v1h1v-1h2v-1h1v1h3v-1h3v1h4v-1h4v1h3v1h1v-1h6v-1h1v1h4v-1h2v1h3v-1h1v1h6v-1h1v1h3v-1h1v1h6v-1h2v1h4v-1h1v-1h1v1h1v1h2v-2h2v2h2v-1h2v1h2v-1h1v1h3v-1h3v1h5v-1h1v1h2v-1h1v1h2v-1h2v1h4v-1h1v1h6v-1h1v1h5v-1h1v1h1v-1h1v1h1v-1h2v1h9v-1h1v1h2v-1h1v1h1v-1h3v1h2v-1h1v1h1v-1h1v1h2v-1h1v1h3v-1h1v1h3v-1h1v2h1v-1h4v1h1v-1h2v-1h2v1h3v-1h1v1h2v-1h1v1h7v1h1v-1h4v1h1v-1h13v-1h2v1h2v1h1v-1h4v-1h1v1h1v-1h1v1h8v-1h1v1h2v-1h1v1h3v-1h1v1h2v-1h1v1h7v-1h1v1h3v-1h1v1h3v1h1v-1h1v1h1v-2h1v1h2v-1h1v1h2v-1h1v1h7v-1h1v1h3v-1h1v1h7v-1h1v1h1v-1h1v1h3v-1h1v1h2v-1h1v1h3v-2h1v2h7v-2h1v1h4v1h2v-1h2v1h3v-1h1v1h6v-1h1v1h5v-1h2v1h3v-1h3v1h3v-1h1v1h1v-1h1v1h3v-1h1v1h2v1h1v-1h7v-1h1v1h3v-1h3v1h5v-1h1v1h1v-1h2v1h2v-1h5v1h5v-1h3v1h2v-2h1v2h5v-1h2v1h3v-1h1v1h2v-1h2v1h5v-1h9v1h2v-1h1v1h1v-1h2v1h7v-1h1v1h1v-1h2v1h13v-1h2v-1h1v2h1v-1h2v1h4v-1h2v1h2v1h1v-1h8v-1h2v1h2v-1h1v1h4v-1h1v1h6v-1h1v1h8v-1h1v1h5v-1h1v1h1v-1h1v1h3v-1h1v1h2v-1h1v1h2v-1h1v1h2v-1h2v2h1v-1h4v-1h1v1h7v-3h1v3h3v-1h1v1h3v-1h1v1h2v-1h1v1h9v1h1v-1h1v-1h1v1h5v-1h3v1h5v1h1v-2h2v1h3v-1h2v1h4v-1h1v1h2v-1h1v1h2v-1h3v1h1v1h1v-1h1v-1h1v1h1v-1h1v1h3v-1h1v1h4v-1h1v1h3v-1h1v1h2v-1h2v1h1v1h1v-1h1v-1h1v1h5v-1h2v2h1v-1h4v1h1v-1h2v-1h1v1h6v1h2v-1h1v-1h1v1h2v-1h3v1h11v-1h1v1h1v-1h1v1h4v-1h2v1h13v-1h2v1h1v-1h1v1h3v-1h1v1h1v-1h1v1h3v-1h3v1h1v-1h1v1h1v-1h1v1h3v-1h1v1h14v1h1v-1h2v-1h1v1h2v-1h2v1h3v1h1v-1h1v-1h1v2h1v-2h1v1h2v-1h2v1h7v-1h1v1h1v-1h1v1h1v-1h1v1h1v-1h1v1h7v-1h1v1h4v-1h1v1h10v-1h1v1h2v-1h3v1h9v-1h2v2h1v-1h4v1h1v-1h5v-1h3v1h8v-1h5v1h7v-2h1v2h6v-1h1v1h19v-1h1v2h1v-1h8v-1h1v1h2v-1h1v1h1v-1h1v2h1v-2h1v1h2v-1h1v1h7v-1h1v1h4v-1h3v1h1v-3h1v3h1v-1h1v1h2v-1h1v1h10v-1h3v1h4v1h1v-1h1v-2h1v2h4v-1h1v1h1v1h1v-1h1v1h1v-1h1v-2h1v2h3v1h1v-1h8v1h1v-2h1v1h2v-1h1v1h2v-1h1v1h2v-1h2v1h3v-1h1v1h4v1h1v-1h4v-1h2v1h1v-1h1v1h1v1h1v-2h1v1h4v-1h2v1h6v-2h2v2h12v1h1v-1h1V268h-1v1h-1v-1h-2v-1h-1v1h-3v-1h-1v2h-2v-1h-2v1h-2v-1h-2v1h-1v-1h-4v1h-4v-1h-5v1h-2v-2h-1v1h-2v1h-1v-1h-1v1h-1v-1h-4v1h-5v-1h-1v-1h-1v2h-1v-1h-4v-1h-1v1h-6v1h-3v-1h-6v1h-1v-1h-3v-1h-1v2h-1v-1h-1v1h-3v-1h-2v1h-1v1h-1v-2h-1v1h-1v-1h-1v1h-4v-1h-2v1h-1v-2h-1v2h-2v-1h-4v1h-3v-1h-1v2h-1v-1h-1v-1h-1v3h-1v-3h-3v-1h-1v1h-1v1h-1v-1h-4v1h-3v-1h-7v1h-4v-1h-3v1h-2v-1h-15v-1h-1v1h-1v1h-1v-1h-1v2h-1v-2h-2v1h-1v-1h-4v1h-2v-1h-1v1h-1v-1h-2v-1h-1v1h-2v1h-1v-1h-2v1h-1v-2h-1v1h-1v1h-1v-1h-1v-1h-1v2h-1v-1h-4v1h-3v-1h-8v1h-1v-1h-1v1h-2v-1h-5v1h-3v-2h-2v1h-3v1h-1v-1h-3v-1h-1v1h-2v1h-1v-1h-1v-1h-1v2h-1v-1h-1v1h-1v-1h-1v1h-1v-1h-2v1h-2v-1h-3v-1h-1v1h-2v1h-1v-1h-3v-1h-1v1h-1v1h-2v-1h-1v1h-2v-1h-2v1h-3v-1h-2v1h-1v-1h-1v-1h-1v1h-1v1h-5v-1h-4v1h-1v-1h-1v1h-1v-1h-3v1h-1v1h-1v-2h-1v1h-2v-1h-2v1h-3v-1h-3v1h-1v-1h-1v1h-4v-2h-1v1h-2v-1h-1v1h-1v-1h-1v2h-1v-1h-7v2h-2v-2h-1v1h-1v-2h-1v1h-1v-1h-1v2h-3v-1h-1v1h-1v-1h-3v1h-1v-1h-3v-1h-1v2h-3v-1h-1v1h-1v-1h-1v1h-2v-2h-1v1h-1v-1h-1v1h-5v1h-1v-1h-4v-1h-1v1h-3v1h-2v-1h-5v1h-4v-1h-3v1h-4v-1h-3v-1h-1v1h-5v1h-1v-1h-3v1h-1v-1h-5v1h-1v-1h-1v-1h-1v1h-4v1h-3v-1h-1v1h-2v-1h-1v1h-1v-1h-5v2h-1v-1h-1v-1h-1v1h-1v-1h-2v2h-2v-2h-5v1h-1v-1h-5v1h-1v-1h-2v1h-2v-2h-1v1h-1v1h-1v-2h-1v1h-5v1h-1v-1h-6v1h-2v-2h-1v1h-3v1h-1v-1h-3v1h-1v-1h-4v-1h-1v1h-1v1h-1v-1h-4v1h-1v-1h-1v1h-2v-1h-3v1h-1v-1h-4v1h-1v-1h-5v1h-1v-1h-4v1h-1v-1h-5v-1h-1v2h-1v-1h-1v1h-3v-1h-7v1h-1v-1h-3v1h-2v-2h-1v1h-5v1h-1v-2h-1v1h-1v1h-4v-1h-1v-1h-1v1h-7v1h-1v-1h-7v1h-2v-1h-3v1h-1v-1h-1v1h-1v-1h-2v1h-1v-1h-2v-1h-1v1h-4v1h-3v-1h-2v2h-1v-1h-1v-1h-9v1h-1v-1h-3v1h-2v-1h-2v-1h-1v1h-1v-1h-2v1h-5v1h-1v-1h-3v1h-1v-1h-5v1h-2v-1h-1v1h-1v-1h-6v1h-1v-1h-5v1h-1v-2h-1v2h-1v-1h-1v1h-1v-1h-5v1h-2v-1h-1v1h-1v-1h-1v1h-1v-1h-3v1h-1v-1h-1v1h-2v-2h-1v2h-1v-1h-2v1h-2v-1h-4v1h-1v1h-1v-2h-2v1h-2v-1h-2v1h-1v-1h-4v1h-1v-1h-3v1h-1v-1h-2v1h-1v-1h-3v1h-2v-1h-5v-1h-1v1h-2v1h-1v-1h-3v1h-2v-1h-8v1h-1v-1h-2v1h-2v-1h-3v-1h-1v2h-3v-1h-1v1h-2v-2h-1v2h-1v-1h-1v1h-2v-1h-3v1h-1v-1h-2v1h-1v-1h-3v1h-3v-1h-3v1h-1v-1h-2v1h-1v-1h-3v-1h-1v1h-9v-1h-1v1h-3v1h-1v-1h-5v1h-2v-1h-2v1h-1v-1h-1v-1h-1v1h-1v1h-1v-1h-1v1h-1v-1h-11v1h-2v-1h-1v1h-2v-1h-1v1h-2v-1h-1v1h-2v-1h-10v1h-1v-1h-3v1h-2v-1h-1v1h-1v-1h-1v1h-2v-1h-2v1h-1v-1h-1v1h-1v-1h-3v1h-1v-1h-1v1h-3v-1h-2v1h-1v-1h-1v-1h-1v1h-1v1h-1v1h-1v-2h-2v1h-2v-1h-2v1h-3v-1h-5v1h-1v-1h-1v1h-2v-1h-2v2h-1v-2h-1v-1h-1v1h-3v1h-2v-1h-3v1h-1v-1h-7v1h-1v-1h-7v1h-1v-1h-1v1h-1v-1h-3v1h-2v-1h-2v1h-1v-1h-2v1h-2v-1h-1v1h-2v-1h-3v1h-5v-1h-1v1h-1v-1h-2v1h-1v-1h-2v1h-2v-1h-1v1h-3v-1h-4v1h-1v-1h-1v1h-3v-2h-1v2h-1v-1h-1v1h-1v-1h-2v1h-2v-1h-1v-1h-1v2h-2v-1h-10v1h-2v-1h-5v-1h-2v1h-3v1h-1v-1h-1v-1h-1v1h-9v1h-1v-1h-1v1h-2v-1h-1v-1h-1v1h-2v1h-2v-1h-4v1h-1v-1h-2v1h-1v-1h-1v1h-1v-1h-1v-1h-1v1h-2v1h-2v-1h-1v-1h-1v1h-1v1h-1v-1h-4v2h-1v-1h-2v-1h-2v1h-2v-1h-1v-1h-1v1h-2v-1h-1v2h-1v-1h-4v1h-1v-1h-1v1h-1v-1h-1v-1h-1v1h-1v-1h-1v1h-6v1h-1v-1h-2v1h-1v-1h-2v1h-1v-2h-1v2h-1v-1h-1v1h-1v-1h-3v-1h-1v1h-1v1h-1v-1h-6v1h-1v-1h-2v2h-1v-2h-2v1h-1v-1h-1v1h-1v-1h-1v2h-1v-1h-3v-1h-3v1h-1v-2h-1v2h-2v-1h-3v1h-3v-1h-4v1h-2v-1h-1v-1h-1v1h-1v1h-2v-1h-3v1h-1v-1h-1v1h-3v-1h-1z"/>
<path d="M88 295h5v1h1v-1h4v-1h3v1h4v-1h1v1h7v-1h1v-1h1v2h5v-1h2v1h5v-1h1v1h2v-1h1v1h2v-1h1v1h1v-1h1v1h8v-1h2v1h4v-1h1v1h9v-1h1v1h7v-1h1v1h5v-1h1v1h2v-1h2v1h4v-1h1v1h2v1h1v-1h1v1h1v-1h2v-1h3v1h3v-1h1v1h5v1h1v-1h5v-1h1v1h3v-1h1v1h5v-1h1v1h6v1h1v-1h11v-1h3v1h3v-1h1v1h1v-1h1v1h3v-1h1v1h7v-1h1v1h1v-1h1v1h1v1h1v-2h1v1h2v-1h3v-1h3v2h2v-1h2v1h1v-1h1v1h2v1h1v-1h7v-1h3v2h1v-1h2v-1h2v1h3v-1h2v1h8v-1h1v1h7v-1h1v1h1v-1h1v1h3v1h1v-1h1v-1h1v1h3v-1h1v1h4v-1h1v1h3v-2h1v2h1v-1h2v1h2v-1h1v1h2v-1h1v1h3v-1h1v1h3v-1h1v1h2v-1h1v1h4v-1h1v1h9v-1h2v1h3v-1h1v1h4v-1h3v2h1v-1h1v-1h2v1h3v1h1v-2h3v1h7v-1h1v1h6v-1h1v1h4v-1h1v1h1v-1h1v1h2v-1h1v1h1v-2h1v3h1v-1h7v-1h1v1h5v-1h1v1h1v-1h1v1h6v-1h1v1h1v-1h1v1h9v-1h2v1h7v-1h1v1h5v-1h5v1h7v-1h1v1h2v-1h2v1h3v1h1v-2h1v1h1v-1h2v1h4v-1h1v1h1v1h1v-2h4v1h2v-1h1v2h1v-1h4v-1h1v1h6v-1h2v1h4v1h1v-2h3v-1h2v2h3v-1h1v1h1v1h1v-1h6v-1h1v1h1v-1h1v1h1v-1h2v1h2v-1h1v1h7v-1h1v1h3v-1h1v2h1v-1h7v-1h2v1h5v-1h1v1h2v-1h1v1h1v-1h2v1h5v-1h2v1h2v-1h1v1h3v-1h2v1h1v-1h1v-2h2v3h1v-1h1v-1h1v2h1v-2h1v1h3v1h1v-1h1v2h1v-1h2v-1h3v1h1v-1h2v1h1v-1h1v1h1v-1h1v1h1v1h1v-1h3v-1h2v1h1v-1h1v1h2v1h1v-1h6v-1h1v1h7v-1h1v1h3v-1h1v1h3v1h1v-1h1v-1h2v2h1v-1h18v-1h1v-1h1v2h1v-1h1v1h2v-1h1v1h13v-1h1v1h9v-1h4v2h1v-1h2v-1h1v1h3v-1h1v1h2v-1h1v1h2v1h1v-1h1v1h1v-1h4v1h1v-1h10v-1h1v1h4v1h1v-1h2v1h1v-1h11v-1h1v1h1v-1h1v1h3v-1h1v1h11v1h1v-1h6v1h1v-2h2v1h4v-1h1v2h1v-1h3v-1h2v2h1v-1h2v1h1v-1h3v-1h1v1h2v-1h2v1h5v-1h1v1h2v-1h1v1h5v-1h1v1h1v-1h1v1h8v1h1v-2h1v1h10v-1h1v1h2v-2h1v2h13v-1h3v1h5v-1h2v1h1v-1h5v1h1v-1h1v1h2v-1h1v1h9v-1h1v1h2v-1h1v1h2v-1h2v1h2v-1h1v1h1v-1h1v1h12v-1h3v1h4v-2h1v2h1v-2h1v2h1v1h1v-1h3v-1h4v1h1v-1h1v1h5v-1h1v1h4v-1h3v1h4v-2h2v2h3v-1h1v1h4v-1h4v1h1v-2h2v2h4v-1h2v1h2v-1h1v1h2v-1h3v2h1v-1h5v-1h1v1h1v-1h1v1h2v-1h2v1h9v-1h2v1h2v1h1v-2h1v1h2v-1h1v1h1v1h1v-1h2v-1h1v1h2v-1h1v1h4v-1h1v1h3v-1h3v1h3v-1h3v1h5v-1h1v2h1v-1h1v-1h1v1h1v-1h2v1h1v1h1v-1h13v-1h1v1h1v-2h1v2h7v-1h1v1h9v-1h1v-1h1v1h2v1h8v-1h3v2h1v-1h2v-1h1v1h5v-1h1v1h8v-1h2v1h1v-1h1v1h6v-1h3v1h8v-1h1v1h2v1h1v-2h1v1h1v-1h2v1h13v-1h1v1h1v-1h1v1h3v-1h1v1h3v-1h1v1h1v-1h1v1h4v1h1v-1h2v-1h1v1h1v-1h3v1h1v-1h1v1h1v-1h1v1h1V299h-2v1h-1v-1h-6v2h-1v-1h-3v-1h-2v1h-3v-2h-1v1h-7v1h-1v-1h-1v-1h-1v1h-2v1h-2v-1h-3v-1h-1v1h-1v1h-1v-1h-19v1h-1v-1h-1v1h-1v-1h-7v1h-1v-1h-2v1h-1v-1h-5v1h-1v-1h-5v-1h-1v1h-1v1h-1v-1h-1v1h-1v-1h-2v1h-1v-1h-13v2h-1v-2h-2v-1h-1v1h-4v1h-2v-1h-2v1h-1v-1h-3v1h-2v-1h-1v1h-2v-1h-2v1h-1v-2h-1v1h-1v1h-3v-1h-3v1h-1v-1h-5v1h-1v-1h-1v1h-1v-1h-1v1h-3v-1h-4v1h-2v-1h-10v-1h-1v1h-2v1h-1v-1h-1v1h-2v-1h-2v1h-3v-1h-8v1h-1v-2h-1v1h-2v1h-1v-1h-1v1h-1v-1h-1v1h-2v-1h-3v1h-2v-2h-1v1h-3v1h-1v-1h-5v1h-1v-1h-2v-1h-1v1h-1v1h-1v-2h-1v1h-2v-1h-1v1h-3v1h-1v-1h-4v1h-1v-1h-11v1h-1v-1h-1v1h-1v-1h-4v1h-4v-1h-3v1h-3v-1h-1v1h-1v-1h-1v1h-1v-1h-6v1h-2v-2h-1v1h-1v1h-1v-1h-1v2h-1v-2h-6v-1h-1v1h-2v1h-1v-1h-10v1h-2v-1h-2v1h-3v-2h-1v1h-7v1h-6v-1h-6v1h-1v-1h-1v1h-2v-2h-1v1h-11v1h-4v-1h-4v1h-1v-1h-2v1h-2v-2h-1v1h-7v-1h-1v2h-1v-1h-3v1h-5v-1h-2v1h-2v-1h-10v1h-1v-1h-1v1h-1v-1h-2v1h-2v-1h-2v1h-1v-2h-1v2h-1v-1h-2v-1h-1v1h-6v-1h-1v1h-9v1h-1v-2h-1v2h-1v-1h-3v1h-1v-1h-1v1h-2v-1h-3v1h-1v1h-1v-2h-1v1h-2v-1h-5v1h-3v-1h-2v1h-1v-1h-4v-1h-1v1h-10v-1h-1v2h-2v-2h-1v2h-1v-1h-7v1h-1v-1h-5v1h-1v-1h-6v1h-1v-1h-2v1h-1v-2h-2v1h-2v1h-3v-1h-17v3h-1v-3h-2v1h-2v-2h-1v1h-3v-1h-1v1h-8v1h-2v-1h-5v-1h-1v1h-4v-1h-1v1h-3v1h-2v-1h-1v1h-1v-1h-3v1h-1v-1h-23v1h-2v-1h-1v-1h-1v2h-1v-1h-1v1h-1v-1h-7v1h-1v-1h-1v1h-3v-1h-3v2h-1v-2h-2v3h-1v-3h-2v1h-2v-1h-2v1h-3v-1h-4v-1h-1v1h-2v-1h-1v1h-4v1h-1v-1h-1v1h-2v-1h-1v1h-1v-1h-2v1h-1v-1h-1v1h-1v-1h-1v1h-1v-1h-3v1h-1v-1h-3v1h-4v-1h-2v-1h-1v1h-1v1h-1v-1h-3v1h-1v-1h-4v1h-1v-1h-6v1h-1v-1h-1v1h-1v-1h-2v1h-1v-1h-7v1h-2v-1h-1v1h-2v-1h-1v1h-2v-1h-1v1h-1v-1h-5v-1h-1v2h-2v-1h-2v1h-1v-1h-10v1h-1v-2h-1v1h-2v-1h-1v2h-2v-2h-1v1h-2v1h-5v-1h-3v-1h-1v1h-2v1h-2v-1h-1v1h-5v-1h-2v1h-2v-1h-7v1h-1v-1h-8v1h-1v-1h-1v1h-1v-1h-6v1h-1v-1h-3v1h-1v-1h-5v-1h-1v1h-2v1h-1v-1h-2v-1h-1v1h-1v2h-2v-1h-3v-1h-1v1h-1v-1h-5v-1h-1v1h-2v1h-1v-1h-2v1h-2v-1h-2v1h-2v-1h-3v1h-2v-1h-2v1h-1v-1h-1v1h-2v-1h-8v1h-1v-2h-1v2h-1v-1h-7v1h-1v-1h-2v1h-3v-1h-9v1h-4v-1h-3v1h-1v-1h-1v1h-3v-2h-1v1h-2v1h-2v-1h-6v1h-1v-1h-7v1h-1v-1h-2v-1h-1v1h-14v1h-2v-1h-2v-1h-1v2h-5v-1h-1v1h-1v-1h-1v1h-1v-1h-4v1h-2v-1h-1v1h-1v1h-1v-2h-10v1h-5v2h-3v-3h-1v1h-1v-1h-1v1h-1v-1h-1v1h-2v-1h-4v1h-2v-1h-3v-1h-1v1h-4v-1h-1v1h-4v1h-1v-1h-2v1h-2v-1h-2v1h-1v-1h-3v-1h-1v1h-4v1h-1v-1h-8v1h-1v-1h-2v1h-1v-1h-6v-1h-1v1h-1v-1h-1v1h-2v1h-2v-1h-2v-1h-1v1h-1v1h-2v-1h-6v1h-1v-1h-2v1h-1v-1h-3v1h-1v-1h-5v1h-1v-1h-3v1h-1v-1h-1v1h-1v-1h-1v1h-1v-1h-1v1h-1v-1h-7v1h-1v-1h-2v-1h-1v1h-11v-1h-1v1h-2v1h-1v-2h-2v3h-1v-2h-5v1h-1v-1h-2v-1h-1v2h-4v-1h-1v-1h-1v2h-1v-1h-1v1h-3v-1h-4v1h-1v-1h-2v1h-1v-1h-4v2h-1v-2h-8v1h-1v-1h-4v1h-1v-1h-1z"/>
<path d="M88 325h1v-1h1v1h2v-1h1v1h4v-1h1v1h11v-1h2v1h1v1h1v-1h2v-1h1v1h1v-1h1v1h2v-1h1v1h4v-1h1v1h5v1h1v-1h4v-1h1v1h2v-1h2v1h2v-1h1v1h3v1h1v-1h1v-2h1v2h5v-1h1v1h2v1h1v-3h1v2h3v1h1v-2h1v1h1v-1h3v1h2v-1h1v1h2v-1h2v1h2v-1h1v1h1v-1h1v1h1v-1h2v1h4v-1h5v1h1v-1h1v1h3v-1h2v1h13v1h1v-2h2v2h1v-1h4v-1h3v1h6v-1h5v1h4v1h1v-1h10v-1h1v1h2v-1h1v1h6v-1h3v1h3v-1h1v1h4v-1h1v2h1v-1h3v1h1v-1h9v1h1v-1h3v-1h1v1h3v-1h1v1h2v-1h2v1h3v-1h1v1h1v1h1v-1h2v-1h1v1h5v-2h4v1h1v1h1v-1h1v1h3v-1h1v1h2v-1h1v1h1v-1h1v2h1v-1h1v-1h1v1h6v-1h1v1h2v-1h1v1h4v1h1v-1h10v-1h2v-1h1v2h1v-1h1v1h1v-1h2v1h4v-1h1v1h6v-1h1v1h11v-1h1v1h1v-1h3v1h11v1h1v-2h1v1h6v-1h1v1h9v1h1v-2h1v1h6v-1h1v1h1v-1h1v1h8v-2h1v2h10v-1h2v1h4v-1h1v1h4v-1h2v1h2v-1h1v1h1v1h1v-1h1v-1h1v2h1v-1h18v-1h1v1h8v1h1v-1h7v-1h2v1h1v-1h3v1h2v-1h1v1h5v-1h2v2h1v-1h1v-1h1v1h3v-1h1v1h8v-1h1v1h1v1h1v-1h8v-1h3v1h4v1h1v-1h3v-1h1v-1h1v1h1v1h3v-1h1v1h10v-1h1v1h1v-1h3v1h1v1h1v-1h6v-1h1v1h13v-1h1v1h1v1h1v-1h1v-2h1v2h1v-1h2v1h1v-1h2v1h10v-1h1v1h4v-1h1v1h2v1h1v-1h2v-1h1v1h6v-1h1v1h4v-1h2v1h2v1h1v-2h1v1h4v-1h2v1h1v1h1v-2h3v1h1v-1h1v1h1v-1h1v1h11v1h1v-2h1v1h3v-1h1v1h4v-1h2v1h1v-1h2v1h2v-1h1v1h1v1h1v-1h1v-1h1v1h1v-1h1v1h7v1h1v-1h2v1h1v-1h1v-1h1v1h1v-1h1v2h1v-2h1v1h5v-1h2v1h9v-1h1v1h3v-1h1v1h2v-1h1v2h1v-1h4v-1h1v1h17v-1h1v1h1v-1h2v1h1v-1h1v1h5v-1h1v2h2v-2h1v1h2v-1h1v1h5v-1h1v1h2v-1h3v1h1v-1h1v2h1v-1h2v-1h1v1h17v-1h1v1h1v-1h2v1h1v-1h1v1h2v-1h1v1h5v-1h1v1h2v-1h1v1h9v-1h2v2h2v-1h1v-1h3v1h2v-1h1v1h4v-1h1v1h12v-1h2v1h3v-1h1v1h5v-1h1v1h5v-1h1v1h3v1h1v-2h2v1h2v-1h3v1h18v-1h1v1h2v-1h3v2h1v-1h2v-1h1v1h4v-1h2v1h2v-1h1v1h1v-1h1v1h1v-1h2v1h1v1h1v-1h8v-1h1v1h8v-1h1v1h7v-1h1v1h3v-1h1v1h4v-1h2v1h5v-1h3v1h8v1h1v-1h5v-1h1v1h12v-1h1v1h5v-1h2v1h13v-1h3v1h2v-1h1v1h8v-1h1v1h4v-1h3v1h6v-1h4v1h1v-1h2v1h2v-1h1v1h1v-1h1v1h7v-1h3v1h2v-1h1v1h3v-1h1v1h5v-1h1v1h10v-1h1v1h11v1h1v-1h8v-1h1v1h2v-1h1v1h3v-1h1v1h4v-1h6v1h14v-1h5v1h6v-1h1v1h9v-1h1v1h1v-1h1v1h1v-1h3v2h1v-2h1v2h1v-1h5v-1h1v1h1v-1h1v1h7V329h-4v-1h-1v2h-1v-2h-1v1h-2v1h-1v-1h-5v-1h-1v1h-5v-1h-1v1h-3v-1h-1v1h-2v1h-1v-1h-2v1h-1v-1h-6v1h-1v-1h-1v1h-1v-1h-6v1h-1v-1h-2v1h-1v-1h-1v1h-1v-1h-1v3h-1v-3h-2v-1h-1v1h-3v-1h-1v1h-1v-1h-1v1h-2v1h-1v-1h-2v2h-1v-2h-4v1h-3v-1h-3v1h-1v-1h-2v1h-2v-1h-2v1h-1v-1h-1v1h-1v-1h-3v1h-1v-1h-1v-1h-1v1h-1v1h-3v-1h-1v1h-1v-1h-2v1h-1v-1h-5v-1h-1v1h-1v1h-3v-1h-5v-1h-1v1h-2v1h-1v-1h-9v-1h-1v1h-2v1h-1v-1h-2v-1h-1v2h-2v-1h-8v1h-1v-1h-6v2h-1v-2h-5v1h-2v-1h-1v1h-1v-1h-3v2h-1v-2h-4v-1h-1v2h-1v-1h-3v-1h-1v1h-3v1h-5v-1h-5v-1h-1v2h-1v-2h-1v1h-2v1h-2v-1h-13v1h-1v-1h-8v1h-2v-1h-1v1h-1v-1h-9v1h-2v-1h-3v1h-1v-1h-2v-1h-1v1h-1v1h-1v-1h-6v1h-1v-1h-2v1h-2v-1h-24v1h-2v-1h-4v-1h-1v1h-3v1h-1v-2h-1v1h-1v1h-1v-1h-1v1h-1v-1h-4v1h-1v-1h-1v2h-3v-1h-8v-1h-1v1h-1v-1h-1v1h-1v-1h-1v-1h-3v1h-1v1h-4v-1h-9v1h-1v-1h-2v1h-4v-1h-1v1h-1v-1h-2v2h-1v-2h-2v-1h-1v2h-1v-1h-1v-1h-1v1h-2v1h-1v-1h-1v1h-2v-1h-4v1h-1v-1h-2v-1h-1v1h-7v1h-3v-1h-1v2h-2v-2h-2v1h-1v-1h-3v-1h-1v1h-3v1h-3v-1h-1v1h-1v-1h-6v1h-1v-2h-1v2h-1v-1h-13v1h-3v-1h-7v1h-1v-1h-2v-1h-2v1h-5v1h-2v-2h-1v2h-1v-1h-1v1h-1v-1h-1v-1h-1v2h-1v-1h-3v1h-1v-1h-2v1h-1v-1h-2v1h-1v-1h-1v-1h-1v1h-9v1h-1v-1h-5v1h-1v-1h-1v1h-1v-1h-1v1h-1v-1h-2v1h-1v-1h-9v-1h-1v1h-1v-1h-1v1h-2v1h-2v-2h-1v1h-1v1h-4v-1h-7v1h-1v-2h-1v1h-3v1h-1v-1h-4v1h-3v-2h-1v1h-6v1h-2v-1h-1v1h-2v-1h-2v1h-1v-1h-2v-1h-1v1h-29v1h-2v-1h-1v1h-1v-2h-1v1h-2v-1h-1v1h-3v1h-4v-1h-3v1h-1v-1h-11v1h-1v-1h-2v1h-3v-1h-2v1h-1v-1h-3v1h-3v-1h-5v1h-2v-2h-1v1h-4v1h-2v-1h-1v1h-1v-1h-5v1h-1v-1h-1v1h-2v-1h-6v1h-1v-1h-1v-1h-2v2h-4v-1h-8v1h-1v-1h-1v1h-1v-1h-2v-1h-1v1h-2v1h-1v-1h-4v-1h-1v1h-2v1h-1v-1h-6v-1h-1v2h-2v-1h-1v1h-1v-1h-2v-1h-1v1h-6v1h-1v-1h-4v1h-1v-1h-20v1h-1v-1h-1v1h-2v-2h-1v1h-1v2h-2v-2h-1v1h-1v-1h-5v1h-1v-1h-1v-1h-2v1h-5v1h-1v-1h-5v1h-4v-1h-1v1h-1v-1h-5v1h-1v-1h-3v1h-2v-1h-2v1h-1v-1h-4v1h-1v-1h-2v1h-2v-1h-1v-1h-1v1h-4v1h-1v-1h-1v1h-1v-1h-2v1h-1v-1h-1v1h-1v-1h-6v1h-2v-1h-6v-1h-1v1h-3v-1h-1v1h-16v1h-1v-2h-1v1h-8v1h-2v-1h-7v1h-2v-1h-2v-1h-1v1h-6v1h-1v1h-1v-2h-3v-1h-1v1h-4v1h-3v-1h-2v2h-1v-2h-3v1h-2v-1h-2v-1h-1v2h-1v-1h-3v-1h-1v1h-7v-1h-1v1h-2v-1h-1v2h-1v-1h-1v1h-1v-1h-6v-1h-1v1h-6v1h-1v-2h-1v1h-2v3h-1v-2h-2v-1h-2v1h-1v-1h-4v1h-1v-1h-1v1h-1v-1h-10v1h-1v-1h-1v-1h-1v1h-5v1h-1v-1h-2v1h-2v-1h-2v1h-1v-1h-1v1h-1v-1h-1v1h-2v-2h-1v1h-9v1h-1v-2h-1v1h-11v1h-1v-1h-3v-1h-1v1h-2v1h-1v-1h-1v1h-1v-1h-6v-1h-2v1h-1v2h-2v-1h-1v-1h-2v1h-3v-2h-1v1h-2v1h-1v-1h-2v1h-1v-1h-1v-1h-1v2h-2v-1h-9v1h-1v-1h-2v2h-1v-2h-10v1h-3v-1h-4v1h-1v-2h-2v1h-2v1h-3v-1h-7v1h-1v-1h-1v1h-3v-1h-1v1h-2v-1h-2v1h-2v-1h-4v1h-1v-1h-3v2h-1v-2h-1v1h-1v-1h-1v1h-1v-1h-4v1h-1v-1h-7v1h-3v-1h-3v-1h-1v1h-1v1h-1v-1h-3v1h-1z"/>
<path d="M88 355h8v1h1v-1h6v-1h1v1h7v-2h1v2h1v-1h2v1h1v1h1v-2h1v1h7v-1h2v1h2v-1h2v1h5v-1h1v1h1v-1h1v1h2v1h1v-1h1v-1h1v1h1v-1h1v1h2v-1h1v1h15v-1h1v1h6v-1h1v1h1v-1h3v1h4v-2h1v1h4v1h4v-1h1v2h1v-1h8v-1h1v1h3v-1h1v1h5v-1h2v1h4v-1h2v1h1v-1h1v1h3v-1h1v1h3v-1h1v1h6v1h1v-1h1v-1h1v1h1v-1h2v1h1v-2h2v1h3v1h1v-1h1v-1h2v2h10v-1h1v1h9v-1h1v1h2v-1h1v1h2v1h1v-1h2v-1h2v1h2v-1h1v2h1v-1h6v-1h1v1h2v-1h2v1h4v-1h1v1h15v-1h1v1h2v-1h1v1h2v-1h1v1h3v-1h2v1h1v-1h1v1h3v-1h5v1h1v-1h1v1h1v-1h1v1h4v-1h1v1h3v1h1v-1h1v-1h1v-1h1v2h3v-1h2v1h17v-1h1v1h4v1h1v-1h2v-1h1v1h1v1h1v-1h1v-1h2v1h1v-1h2v1h1v-1h1v1h10v-1h1v1h1v-1h1v1h5v1h1v-1h9v-1h1v1h1v-1h1v1h2v-1h2v1h4v1h1v-1h5v-1h2v1h5v1h1v-1h2v-1h1v1h1v-1h2v1h2v-1h2v1h3v-1h1v1h5v1h1v-2h1v1h6v1h1v-2h1v1h5v1h1v-2h3v1h1v-1h1v1h5v-1h1v1h1v-1h1v1h2v-1h1v1h2v-1h2v1h4v-1h2v1h3v1h1v-2h3v1h2v1h1v-1h5v-1h3v1h3v-1h1v1h3v-1h2v1h2v-1h1v1h4v-1h2v1h1v-1h1v1h2v-1h1v1h2v-1h2v1h3v-1h1v1h5v-1h1v1h3v-1h1v1h4v-1h1v1h4v-1h3v1h3v-1h1v1h11v-1h1v1h5v-1h1v1h5v-1h1v1h4v-1h1v1h3v-1h2v-1h1v2h1v-1h2v-1h1v2h1v-1h1v1h1v-2h1v2h2v-1h1v1h1v-1h1v1h1v-1h1v1h3v-1h3v2h1v-2h1v1h11v-1h1v1h6v-2h1v2h1v-1h1v1h2v-1h1v1h2v-1h2v1h4v-1h1v1h1v-2h1v1h1v1h2v-2h1v2h1v-1h1v1h6v-1h1v1h1v1h1v-1h1v-1h1v1h3v-1h1v1h1v-1h1v1h4v1h1v-2h1v1h4v-1h2v1h2v-1h2v1h2v-1h2v1h1v-1h1v2h1v-1h4v-1h1v1h2v-1h3v1h6v-1h1v1h1v-1h2v1h10v-1h1v1h6v-1h1v1h1v-1h1v1h1v-1h1v1h3v-1h2v1h2v-1h1v1h2v-1h1v1h6v-2h1v2h5v-1h1v1h7v-1h1v1h1v-1h1v1h12v-1h1v-1h3v2h2v-1h1v1h3v-1h1v1h2v1h1v-1h3v-1h1v1h3v-1h2v1h9v-1h3v1h1v-2h1v2h3v-1h1v1h2v-1h1v1h1v-1h1v1h3v1h1v-1h4v1h1v-1h9v-1h1v1h2v-1h1v1h3v-1h2v1h9v-1h1v1h2v1h1v-1h5v1h1v-1h4v-1h1v1h5v1h1v-2h1v1h1v1h1v-1h1v-1h1v1h1v-1h1v1h2v-1h1v1h2v-1h1v2h1v-1h3v-1h1v1h3v-1h1v1h4v-1h1v1h1v-1h2v1h4v-1h1v1h5v1h1v-1h8v-1h1v1h1v-1h2v1h2v-1h1v1h3v-1h2v1h5v-1h1v1h1v1h1v-1h18v-1h4v1h2v-1h2v1h4v-1h1v1h2v-1h2v1h4v1h1v-1h1v-1h1v1h1v-1h4v1h4v-1h1v1h15v1h1v-2h1v1h8v-1h2v1h2v-1h1v1h3v-1h1v1h14v-1h2v1h3v-1h1v1h1v-1h1v1h4v1h1v-2h1v1h6v-1h1v1h5v-1h2v1h3v-1h1v1h1v-1h2v1h3v-1h2v1h6v-1h1v1h1v-1h1v1h1v-1h2v1h1v1h1v-3h1v2h2v-1h1v1h3v1h1v-1h3v-1h1v1h8v1h1v-1h4v-1h1v1h4v-1h1v1h6v-1h1v1h4v-1h1v1h21v-1h2v1h6v-1h5V360h-1v-1h-6v1h-1v-2h-1v2h-2v-1h-1v2h-1v-2h-1v1h-1v-1h-2v1h-1v-2h-2v1h-3v1h-1v-2h-1v1h-3v1h-3v-1h-3v1h-1v-1h-7v1h-4v-1h-1v1h-1v-1h-2v-1h-1v1h-1v1h-1v-2h-1v1h-2v1h-1v-1h-5v1h-1v-1h-2v1h-1v-1h-3v1h-1v-1h-3v1h-1v-1h-1v-1h-1v1h-3v1h-1v-1h-5v1h-1v-1h-1v-1h-1v3h-2v-1h-1v-1h-4v1h-1v-1h-1v-1h-1v2h-1v-1h-4v1h-1v-1h-1v1h-1v-1h-1v1h-2v-1h-4v-1h-1v1h-2v1h-1v-1h-8v1h-1v-1h-3v1h-2v-1h-7v1h-1v-1h-1v1h-1v-1h-1v1h-2v-1h-1v1h-2v-1h-3v1h-1v1h-1v-1h-1v-1h-4v1h-1v-1h-3v-1h-1v2h-1v-1h-1v1h-4v-1h-2v1h-1v-1h-6v1h-1v-1h-6v1h-1v-1h-1v-1h-1v2h-3v-1h-3v1h-1v-1h-3v1h-2v-1h-1v-1h-1v1h-5v1h-1v-1h-4v1h-1v-1h-1v1h-3v-1h-4v1h-1v-2h-1v1h-1v1h-2v-1h-2v1h-1v-1h-2v1h-1v-1h-2v-1h-1v2h-2v-1h-1v1h-1v-1h-5v1h-1v-2h-2v1h-1v2h-1v-2h-1v1h-2v-1h-5v1h-1v-1h-1v1h-1v-1h-1v1h-1v-1h-1v1h-1v-1h-2v1h-2v-1h-2v1h-1v-2h-1v2h-1v-1h-1v-1h-1v1h-4v1h-2v-1h-1v1h-1v-1h-3v1h-1v-1h-11v1h-2v-1h-2v1h-1v-1h-1v-1h-1v1h-2v1h-1v-1h-6v-1h-1v1h-12v1h-1v-1h-4v1h-1v-1h-3v1h-1v-1h-3v-1h-2v1h-3v1h-1v-1h-2v1h-1v-1h-4v-1h-1v1h-4v1h-1v-1h-15v1h-2v-1h-2v1h-2v-1h-3v1h-2v-1h-2v1h-3v-1h-4v-1h-1v1h-4v1h-2v-1h-2v1h-2v-1h-5v1h-1v-1h-1v1h-2v-1h-2v1h-1v-1h-2v1h-1v-1h-3v-1h-2v1h-1v-1h-1v1h-3v1h-1v-1h-9v1h-1v-1h-5v1h-2v-1h-6v1h-1v-1h-1v1h-1v-1h-1v1h-1v-1h-1v1h-2v-1h-4v-1h-1v1h-3v1h-1v-1h-1v1h-2v-1h-3v1h-1v-1h-1v1h-1v-1h-3v1h-1v-1h-2v1h-2v-2h-1v1h-3v1h-1v-1h-4v1h-1v-1h-1v1h-1v-1h-1v-1h-1v1h-2v1h-1v-1h-3v-1h-1v1h-1v1h-1v-1h-2v-1h-1v2h-2v-1h-7v1h-1v-1h-5v1h-1v-2h-1v1h-1v1h-1v-1h-1v1h-1v-2h-1v1h-2v1h-1v-1h-7v1h-2v-1h-14v2h-2v-2h-14v1h-2v-1h-2v1h-1v-1h-2v1h-1v-1h-1v1h-1v-1h-3v2h-1v-1h-2v-1h-3v3h-1v-4h-1v1h-12v1h-1v-1h-4v1h-1v-1h-1v1h-1v-1h-1v-1h-1v1h-1v1h-2v-2h-1v1h-2v1h-1v-1h-8v1h-1v-1h-2v1h-1v-1h-2v2h-1v-2h-3v1h-1v-1h-4v1h-1v-1h-1v1h-2v-1h-2v1h-2v-1h-4v1h-1v-1h-9v1h-2v-1h-2v-1h-1v1h-5v-1h-1v3h-1v-1h-1v-2h-1v1h-3v1h-1v-1h-1v1h-1v-2h-1v2h-1v-1h-5v1h-1v-2h-1v2h-1v-1h-2v-1h-1v1h-2v1h-1v-1h-2v1h-1v-1h-3v-1h-1v1h-3v1h-1v-1h-5v1h-2v-1h-10v1h-2v-1h-2v1h-1v-1h-7v1h-1v-1h-2v1h-3v-1h-4v1h-1v-1h-7v-1h-1v2h-1v-1h-6v1h-1v-1h-4v1h-1v-1h-4v1h-4v-2h-1v1h-1v1h-1v-2h-2v1h-1v1h-2v-1h-1v1h-1v-1h-4v1h-1v-1h-3v1h-1v-1h-2v-1h-1v1h-7v1h-1v-1h-1v1h-2v-2h-1v2h-1v-1h-2v1h-1v-1h-1v-1h-1v1h-2v-1h-1v2h-1v-1h-3v1h-1v-2h-1v2h-5v-1h-3v1h-1v-1h-1v1h-1v-1h-3v1h-2v-2h-1v1h-1v1h-1v-1h-6v1h-1v-1h-1v1h-1v-1h-7v1h-1v-2h-1v2h-1v-1h-3v1h-1v-1h-1v1h-2v-2h-1v2h-1v-1h-1v-1h-1v1h-3v1h-2v-1h-3v-1h-1v1h-1v1h-2v-1h-4v1h-1v-1h-6v1h-2v-1h-3v1h-1v-1h-5v-1h-1v1h-1v1h-1v-1h-5v-1h-2v1h-8v1h-1v-1h-4v1h-1v-1h-1v1h-1v-1h-4v-1h-2v2h-1v-1h-2v1h-1v-1h-2v1h-1v-1h-5v1h-2v-1h-2v1h-2v4h-1v-3h-1v-1h-4v-1h-1v1h-1v-1h-3v1h-2v-2h-1v1h-10v1h-2v-1h-1v1h-2v-1h-14v-1h-1v1h-3v1h-1v-1h-9v-1h-1v1h-1v1h-1v-1h-1v1h-1v-1h-2v1h-3v-1h-2v1h-1v-1h-3v1h-7v-1h-2v1h-2v-2h-1v1h-5v1h-1v-1h-2v2h-1v-2h-1v1h-1v-1h-6v1h-4v-1h-1v1h-3v-1h-1v-1h-1v1h-5v1h-1v-2h-2v1h-1v1h-1v-1h-4v1h-2v-1h-4v1h-3v-1h-17v1h-1v-1h-2z"/>
<path d="M88 385h1v1h5v-1h1v1h1v-1h2v1h2v-1h1v1h1v-1h2v1h8v1h1v-1h7v-1h2v1h11v-1h1v1h12v-1h1v1h1v-1h2v1h5v-1h1v1h1v1h1v-1h5v-1h1v1h1v-1h1v1h1v-1h1v1h2v-1h1v1h9v-2h1v2h4v-1h1v1h8v-1h1v1h3v-2h1v2h5v-1h1v1h1v-1h1v1h2v-1h1v1h5v-1h1v1h4v-1h1v1h4v1h1v-1h1v-1h1v1h3v1h1v-1h1v-1h5v1h3v-1h1v1h2v-1h1v1h2v-1h2v1h1v-1h1v1h5v-1h1v1h4v1h1v-2h1v1h3v-1h1v1h2v1h1v-1h6v-1h1v1h1v1h1v-1h1v-1h2v1h1v1h1v-1h8v-1h2v1h4v-1h1v1h1v-1h2v1h3v1h1v-1h3v-1h1v1h2v-1h2v1h2v-1h1v1h2v-1h4v1h2v-1h1v1h9v-2h1v2h1v-1h2v1h6v-1h1v1h6v-1h1v1h12v-1h1v1h2v-1h1v1h4v-1h2v1h2v-1h1v1h21v-1h1v1h13v1h1v-1h12v1h1v-1h13v-1h3v1h1v-1h1v1h4v-1h1v1h1v-1h1v1h1v1h1v-1h1v-1h2v1h6v-1h1v1h1v-1h1v1h1v-1h2v1h4v-1h2v1h12v-2h1v2h11v-1h1v1h3v-1h1v1h5v-1h1v1h5v-2h1v2h8v-1h1v1h2v-1h2v1h1v1h1v-1h11v-1h1v1h5v-1h1v1h5v-1h1v1h1v1h1v-1h1v1h1v-2h4v1h2v-1h1v2h1v-2h3v1h7v-1h2v1h15v-1h3v1h4v-1h1v1h3v-1h2v1h4v-1h1v1h1v1h1v-1h2v-1h1v1h6v-1h2v1h4v1h1v-1h7v-1h1v1h3v-1h1v1h3v-1h4v1h2v-1h1v1h2v-1h1v1h3v-1h1v1h11v1h1v-1h7v-1h1v1h9v1h1v-2h4v1h3v-1h1v-1h1v2h2v-1h2v1h5v-1h2v-2h1v3h1v-1h1v1h2v-1h2v1h4v-1h1v1h2v-1h1v1h2v1h1v-1h3v-1h2v1h8v-1h1v1h3v1h1v-2h2v1h1v1h1v-1h11v-1h2v1h5v1h1v-1h3v1h1v-1h5v-1h1v1h2v-1h4v1h2v-1h3v1h2v1h1v-1h1v1h1v-2h1v2h1v-1h6v-1h1v1h6v-1h1v1h2v1h1v-1h5v-1h1v1h2v-1h1v1h2v-1h1v1h7v-1h3v2h1v-1h1v-2h1v2h3v1h1v-1h2v-1h1v1h7v-1h4v1h2v-1h1v1h4v-1h1v1h12v-1h1v1h1v-1h1v1h4v-1h1v1h8v-1h1v1h6v-1h1v1h5v-1h1v1h2v-1h1v1h2v-1h1v1h7v-1h1v1h6v1h1v-2h1v1h3v-1h1v1h21v-1h1v1h1v-1h1v1h9v-1h2v1h1v-1h1v1h7v1h1v-1h5v-1h1v1h2v-1h2v1h15v-1h1v1h12v-1h2v1h10v-1h3v1h2v-1h1v1h3v-1h3v1h3v-1h2v1h1v-1h1v1h4v-1h1v1h8v-1h2v1h2v-1h2v1h12v-1h1v1h1v-1h1v1h1v-1h1v1h5v-1h1v1h1v-1h2v1h10v-1h1v1h16v-1h1v1h1v-1h2v1h2v-1h1v1h13v-1h1v1h11v-1h1v1h1v-1h2v1h8v-1h3v1h4v-1h1v1h14v-1h1v1h4v1h1v-1h6v-1h1v1h6v-1h2v1h2v-1h1v1h2v-1h1v1h2V390h-9v1h-2v-1h-7v1h-1v-1h-2v-1h-2v1h-1v-1h-1v1h-1v1h-1v-1h-1v1h-1v-2h-1v1h-4v1h-1v-1h-15v1h-1v-1h-1v1h-2v-1h-4v-1h-2v1h-2v1h-1v-1h-1v-1h-1v1h-9v1h-1v-1h-1v-1h-1v1h-1v1h-5v-1h-4v-1h-2v1h-13v1h-1v-1h-9v1h-1v-1h-1v1h-1v-2h-1v1h-1v1h-1v-1h-4v1h-1v-2h-1v1h-1v1h-3v-2h-1v1h-2v1h-2v-1h-8v2h-3v-1h-1v-1h-4v-1h-1v1h-2v1h-1v-1h-12v1h-3v-1h-5v-1h-1v1h-2v-1h-1v1h-5v1h-1v-1h-8v1h-1v-1h-4v1h-1v-1h-5v1h-1v-1h-1v1h-1v-1h-1v1h-1v-1h-4v-1h-1v1h-3v1h-1v-1h-4v-1h-1v1h-2v-1h-1v1h-3v1h-1v-1h-2v-1h-1v1h-5v1h-2v-1h-6v-1h-1v1h-3v1h-1v-1h-10v1h-2v-1h-1v-1h-1v1h-3v1h-1v-1h-3v-1h-2v1h-3v1h-1v-1h-1v-1h-1v1h-3v1h-2v-1h-4v1h-1v-1h-3v-1h-1v1h-2v1h-1v-1h-1v2h-1v-2h-2v-1h-1v1h-8v1h-3v-1h-2v1h-1v-1h-4v-1h-1v2h-2v-1h-7v1h-2v-1h-3v-1h-1v1h-7v-1h-1v1h-5v-1h-1v1h-2v1h-1v-1h-5v-1h-1v1h-1v-1h-1v1h-21v1h-1v-1h-11v1h-2v-1h-4v1h-1v-1h-9v-1h-1v1h-4v-1h-1v2h-1v-1h-4v-1h-1v1h-3v1h-3v-1h-7v1h-2v-1h-1v-1h-1v1h-4v1h-1v-1h-2v-1h-1v2h-1v-1h-1v-1h-1v1h-2v1h-1v-1h-1v-1h-1v1h-12v-1h-1v1h-2v1h-1v1h-1v1h-2v-2h-3v-1h-17v-1h-1v1h-1v1h-1v-1h-2v-1h-1v2h-4v-2h-1v2h-2v-1h-1v-1h-1v1h-3v-1h-1v2h-1v-1h-7v-1h-1v2h-2v-1h-7v-1h-1v1h-2v-1h-1v1h-2v-1h-1v1h-2v-1h-2v1h-3v-1h-1v1h-2v-1h-2v1h-9v-1h-1v1h-3v1h-2v-1h-11v1h-1v-1h-2v-1h-1v1h-1v1h-1v-1h-1v1h-1v-1h-11v1h-1v-1h-4v-1h-1v1h-1v-1h-1v1h-2v1h-1v-1h-9v-1h-1v1h-5v1h-1v-1h-2v1h-2v-1h-6v-1h-1v1h-9v1h-1v-1h-4v1h-1v-1h-13v1h-1v-1h-4v2h-1v-2h-7v1h-1v-1h-2v-1h-1v1h-1v1h-2v-1h-8v-1h-1v1h-6v-1h-1v1h-2v1h-1v-1h-1v1h-1v-1h-9v-1h-1v1h-6v1h-1v-1h-12v1h-1v-1h-6v1h-1v-1h-8v-1h-1v1h-1v-1h-2v1h-4v-1h-1v2h-1v-1h-1v1h-2v-1h-2v1h-1v-1h-6v-1h-1v2h-1v-1h-2v-1h-1v1h-2v1h-1v-1h-9v1h-1v-1h-3v1h-1v-1h-2v-1h-1v1h-1v-1h-1v1h-1v-1h-1v1h-12v1h-3v-1h-1v1h-1v-1h-1v1h-1v-1h-2v1h-2v-1h-5v-1h-1v1h-2v-1h-1v1h-3v1h-1v-2h-1v1h-8v1h-1v-1h-2v-1h-1v1h-13v1h-1v-1h-2v-1h-1v1h-2v-1h-2v1h-6v1h-1v-1h-4v-1h-1v2h-3v-2h-1v2h-1v-1h-2v1h-1v-1h-2v-1h-2v1h-6v1h-1v-1h-2v1h-1v-1h-6v1h-1v-1h-9v1h-3v-1h-1v1h-1v-1h-5v1h-1v-1h-4v1h-1v-2h-1v1h-1v1h-1v-1h-9v1h-2v-2h-1v1h-1v1h-2v-1h-1v1h-1v-1h-6v1h-1v-2h-1v1h-3v1h-1v-1h-2v1h-1v-1h-13v1h-1v-1h-7v-1h-1v1h-2v1h-1v-2h-1v1h-3v1h-1v-1h-1v1h-2v-1h-9v-1h-1v1h-1v-1h-1v2h-1v-1h-3v2h-2v-2h-2v1h-2v-1h-3v1h-2v-1h-9v2h-1v-2h-13v1h-2v-1h-2v1h-1v-1h-4v1h-1v-1h-2v-1h-1v1h-6v-1h-1v1h-3v1h-1v-1h-6v-1h-1v1h-2v-1h-2v3h-1v-2h-4v1h-4v-1h-8v1h-1v-1h-13v1h-1v-1h-8z"/>
<path d="M88 416h4v-1h1v1h4v1h1v-1h12v-1h1v1h27v-1h1v1h6v-1h1v1h6v-1h1v1h6v1h1v-1h5v-1h3v1h5v-1h1v1h15v-1h1v1h1v1h1v-1h2v1h1v-1h1v-1h1v1h4v-1h1v1h2v-1h1v1h8v-1h1v1h4v-1h1v1h3v-1h1v1h7v-1h2v1h15v-1h1v1h19v-1h1v1h8v-1h1v1h4v-1h2v1h1v-1h1v1h6v-1h1v1h7v1h1v-1h7v-1h1v1h1v-1h1v1h3v-2h1v2h4v-1h2v1h1v-1h4v1h3v-1h1v1h2v-2h1v2h2v1h1v-1h7v-1h1v2h1v-1h7v-1h1v1h1v-1h1v1h13v-1h1v2h1v-1h5v-1h1v1h3v-1h2v1h4v-1h1v1h11v1h1v-1h3v-1h1v1h6v1h1v-1h3v-1h1v1h7v1h1v-2h1v1h8v1h1v-1h6v-1h2v1h8v-1h1v1h10v1h1v-1h1v-1h2v1h8v-1h1v1h4v-1h2v1h12v1h1v-1h2v-1h1v1h1v1h1v-1h6v-1h1v1h5v1h1v-1h1v-2h2v2h1v-1h1v1h2v-1h1v1h2v-1h3v1h5v1h1v-1h3v-1h1v1h1v-1h2v1h2v1h1v-2h1v1h4v1h1v-1h9v1h1v-1h4v-2h1v2h1v-1h1v1h5v1h1v-1h2v-1h1v2h1v-1h4v-1h1v1h1v1h1v-2h1v1h10v-1h1v1h9v1h1v-1h4v-1h2v1h3v-1h1v1h3v-2h1v2h1v-1h2v1h20v-1h1v1h5v-1h1v1h5v-1h1v1h4v-1h1v1h16v-1h3v1h4v-1h1v1h5v-1h1v1h2v-1h1v1h2v-1h3v1h3v-1h1v1h4v-1h2v1h6v-1h1v1h2v-1h1v1h3v-1h2v1h2v1h1v-2h3v1h11v-1h1v1h4v-1h2v1h22v-1h1v1h12v-1h1v1h5v-1h1v1h3v-1h1v1h2v1h1v-1h15v1h1v-1h2v-1h1v1h4v-1h1v1h8v-1h2v1h2v1h1v-1h4v-1h1v1h1v1h1v-1h2v-1h2v1h6v-1h1v1h6v-1h2v1h1v-1h1v1h4v-1h1v1h6v-1h1v1h17v-1h1v1h4v-1h1v1h1v-1h1v1h4v-1h1v1h9v-1h1v1h2v-1h1v1h3v-1h1v1h4v-1h1v1h12v-1h1v1h1v-1h1v1h3v-1h2v1h1v-1h2v1h3v-1h3v1h3v-1h1v1h3v-1h1v1h9v-1h1v1h3v-1h1v1h16v-1h1v1h6v-1h3v1h8v-1h1v1h1v-1h2v1h14v1h1v-1h1v-1h1v1h2v-1h2v1h15v1h1v-1h2v-1h2v1h4v-1h1v1h9v-1h2v1h4v-1h3v1h6v-1h1v1h3v-1h1v1h11v1h1v-1h3v-1h1v1h12v-1h1v1h5v-1h1v1h4v-1h4v1h5v1h1v-1h7v-1h2v1h5v-1h1v1h5v-1h1v1h10v-1h1v1h6v-1h1v1h2v-1h1v1h1v-1h1v1h1v1h1v-1h1v1h1v-1h1v-1h1v1h1v-1h1v1h6v-1h1v1h5v-1h1v1h1v-1h1v1h1v-1h1v1h13V420h-2v1h-1v-1h-4v-1h-1v1h-1v1h-5v-1h-2v-1h-1v1h-2v1h-1v-1h-3v1h-1v-1h-4v-1h-1v1h-3v-1h-1v2h-1v-1h-7v-1h-1v1h-5v-1h-1v2h-1v-1h-3v1h-1v-1h-1v-1h-2v1h-2v1h-3v-1h-6v1h-1v-2h-1v1h-2v1h-1v-1h-1v1h-1v-1h-1v1h-2v-1h-9v1h-3v-1h-3v1h-2v-1h-1v1h-1v-1h-2v1h-1v-1h-1v-1h-1v1h-3v-1h-1v1h-3v-1h-1v2h-2v-1h-1v1h-1v-1h-2v1h-1v-1h-1v1h-1v-1h-5v-1h-1v1h-4v1h-1v-1h-15v1h-2v-1h-2v-1h-1v2h-2v-1h-1v1h-1v-1h-7v1h-1v-1h-4v-1h-1v1h-2v-1h-1v1h-2v1h-2v-1h-6v-1h-1v1h-12v2h-1v-2h-1v-1h-1v1h-3v1h-1v-2h-1v1h-3v2h-1v-2h-1v1h-5v-1h-2v1h-2v-1h-1v1h-2v-1h-3v1h-1v-1h-2v-1h-1v1h-8v1h-1v-1h-3v-1h-1v1h-4v1h-1v-1h-2v1h-2v-1h-9v1h-1v-1h-1v-1h-1v2h-2v-1h-3v1h-1v-1h-14v-1h-1v2h-1v-1h-12v-1h-1v1h-1v1h-1v-1h-3v1h-1v-1h-10v1h-1v-1h-1v1h-1v-1h-11v1h-1v-1h-1v-1h-1v1h-5v1h-1v-1h-4v1h-1v-2h-1v1h-2v1h-1v-1h-4v-1h-1v1h-5v1h-1v-1h-14v1h-3v-1h-9v1h-4v-1h-6v-1h-1v1h-3v1h-2v-1h-1v1h-2v-1h-2v-1h-1v1h-1v-1h-1v1h-2v1h-1v-1h-4v1h-1v-1h-1v-1h-1v1h-4v1h-2v-1h-4v2h-1v-2h-2v1h-1v-1h-2v1h-1v-1h-4v1h-1v-1h-2v1h-4v-1h-4v1h-1v-1h-1v1h-3v-1h-2v-1h-1v2h-2v-1h-6v1h-1v-1h-3v1h-1v-1h-1v1h-1v-1h-2v1h-1v-1h-7v1h-1v-1h-4v-1h-1v1h-7v-1h-1v1h-7v-1h-1v1h-1v1h-2v-1h-6v1h-1v-1h-2v-1h-1v1h-1v1h-1v-1h-1v-1h-1v1h-1v1h-2v-1h-5v1h-1v-2h-1v1h-2v1h-1v-1h-3v1h-1v-1h-4v1h-1v-1h-11v-1h-1v1h-3v-1h-1v1h-10v1h-1v-1h-5v2h-1v-2h-2v1h-1v-1h-8v-1h-2v1h-1v-1h-1v1h-2v1h-1v-1h-3v1h-2v-1h-3v-1h-1v1h-6v1h-1v-1h-3v-1h-1v1h-4v1h-1v-1h-7v1h-2v-2h-1v1h-2v-1h-2v1h-2v1h-1v-1h-1v-1h-1v1h-4v1h-1v-1h-3v1h-1v-1h-1v1h-1v-1h-2v-1h-1v2h-1v-1h-7v1h-2v-1h-3v1h-1v-1h-1v1h-1v-1h-4v1h-1v-1h-1v1h-1v-1h-7v1h-1v-1h-1v-1h-1v1h-1v1h-2v-1h-5v1h-1v-1h-1v-1h-1v1h-3v-1h-2v3h-1v-2h-1v-1h-1v1h-1v-1h-1v1h-2v1h-1v-1h-1v-1h-2v1h-4v1h-1v-1h-17v1h-1v-1h-8v1h-1v-1h-6v1h-1v-1h-16v1h-1v-1h-11v-1h-1v1h-6v1h-1v-1h-10v1h-1v-1h-2v1h-2v-1h-1v1h-1v-1h-5v1h-1v-1h-6v-1h-1v1h-1v1h-1v-1h-5v1h-1v-1h-1v1h-1v-1h-8v2h-2v-2h-3v2h-1v-2h-5v1h-1v-1h-6v1h-1v-1h-2v1h-1v-1h-1v-1h-1v1h-5v1h-1v-1h-3v1h-1v-1h-1v-1h-1v2h-1v-1h-6v1h-1v-1h-3v1h-4v-1h-2v1h-3v-1h-2v1h-1v-1h-3v-1h-1v1h-1v1h-2v-1h-1v1h-1v-1h-3v1h-1v-2h-1v2h-1v-1h-1v-1h-1v1h-3v1h-3v-1h-2v1h-1v-1h-1v1h-1v-1h-2v1h-1v-1h-4v1h-1v-1h-2v1h-1v-1h-6v-1h-1v1h-4v1h-3v-1h-4v1h-1v-1h-9v1h-3v-1h-4v1h-3v-1h-1v1h-1v-1h-2v1h-2v-1h-3v1h-1v-1h-4v1h-1v-1h-1v-1h-1v1h-2v1h-1v-1h-3v-1h-1v2h-1v-1h-3v1h-2v-1h-5v-1h-2v1h-3v1h-1v-1h-11v1h-1v-2h-1v1h-8v-1h-1v1h-4v1h-1v-1h-2v1h-2v-1h-7v1h-1v-2h-1v1h-1v-1h-1v1h-2v1h-1v-1h-6v1h-1v-1h-12v1h-5v-1h-2v1h-1v-1h-6v1h-2v-1h-1v1h-3v-1h-1v1h-1v-1h-3v1h-1v-1h-12v-1h-1v1h-9v1h-1v-1h-5z"/>
<path d="M88 445h2v1h2v-1h1v1h8v-1h1v1h1v-1h2v1h10v-1h2v1h17v-1h1v1h5v-1h1v1h3v-1h3v1h1v-1h1v1h5v-1h1v1h1v1h1v-1h1v-1h2v1h4v-2h1v2h10v-1h2v1h3v-1h3v1h12v-1h1v-1h1v2h13v1h1v-2h1v1h7v-1h2v1h3v-1h1v1h6v1h1v-1h11v-1h1v1h6v-1h1v1h2v-1h3v1h1v-1h1v1h11v-1h1v1h1v-2h1v1h1v1h2v-1h1v1h2v-1h3v1h1v-1h1v1h3v-1h1v1h5v-1h1v1h4v-1h1v1h2v-1h1v1h1v-1h1v2h1v-1h6v-1h1v1h2v-1h1v1h1v-1h1v1h9v-1h1v1h8v-1h1v1h1v-1h1v1h5v-1h1v1h4v-1h2v1h1v-1h3v1h4v-1h2v1h5v-1h3v1h1v-1h1v1h5v-1h1v1h10v-1h1v1h3v-1h1v1h2v-1h1v1h8v-1h1v1h7v-1h1v1h8v-1h1v1h5v-1h2v1h8v-1h1v1h3v-1h8v1h3v-1h1v1h7v1h1v-1h13v-1h2v1h12v1h1v-1h4v-1h1v1h10v-1h7v1h1v-1h1v1h10v-1h1v1h2v-1h1v2h1v-1h13v-1h1v1h1v-1h2v1h8v1h1v-2h2v1h5v-1h1v1h1v-1h1v1h5v-1h1v1h3v-1h1v1h7v-1h1v1h6v-1h2v1h4v-1h1v1h2v-1h1v1h1v-1h1v2h1v-1h5v-1h1v1h6v-1h1v1h4v-1h2v1h10v-1h1v1h3v-1h1v1h14v1h1v-1h1v-1h2v1h3v-1h1v1h2v-1h1v1h8v-1h1v1h3v-1h2v1h1v-1h1v1h10v-1h1v1h2v-1h1v1h2v-1h3v1h4v-1h1v1h5v1h2v-1h1v-1h2v1h4v-1h1v1h1v-1h1v1h2v-1h1v1h9v-1h2v1h4v-1h1v1h2v-2h1v2h4v-1h1v1h1v-1h1v1h1v-1h1v1h2v-1h1v2h1v-1h1v-1h1v1h6v1h1v-1h3v-1h2v1h1v-1h1v1h2v-1h1v1h4v-1h1v2h1v-2h1v1h11v-2h1v2h6v-1h1v1h2v-1h1v1h8v-1h1v2h1v-1h6v-1h1v1h1v-1h3v1h5v-1h2v1h2v1h1v-1h1v1h2v-1h5v-1h2v1h19v-1h4v1h1v-1h1v1h15v-1h2v2h1v-2h1v1h7v-1h1v1h5v-1h1v1h10v-1h2v1h5v1h1v-2h1v1h3v-1h1v1h7v1h1v-1h1v-1h1v1h2v-1h3v1h6v-1h2v1h1v-1h1v1h1v1h1v-1h13v-1h1v1h1v-1h2v1h4v-1h2v1h13v-1h1v1h2v-1h2v1h1v-1h1v1h5v-1h1v1h3v1h1v-1h1v1h1v-1h9v-1h1v1h3v-1h1v1h9v-1h3v1h1v-1h1v1h6v-1h1v1h3v-1h1v1h1v-1h2v1h1v-1h1v1h3v-1h1v2h1v-2h2v1h3v-1h2v1h1v-1h1v1h11v1h1v-1h3v-1h2v1h8v-1h1v1h6v1h1v-1h5v1h1v-1h7v1h1v-1h8v-1h2v1h8v-1h1v2h1v-2h3v1h2v-1h1v1h17v-1h1v1h12v-1h2v1h5v-1h2v1h10v-1h2v1h9v-1h3v1h6v1h1v-1h2v-1h1v1h6v-1h1v1h1V450h-6v1h-1v-2h-1v1h-17v1h-1v-1h-4v1h-2v-1h-1v1h-1v-1h-3v1h-1v-1h-16v1h-1v-1h-12v2h-1v-2h-18v1h-1v-1h-2v-1h-2v1h-9v1h-1v-1h-17v-1h-1v1h-18v1h-1v-1h-1v1h-1v-1h-4v1h-1v-1h-3v-1h-1v1h-4v1h-1v-2h-1v1h-1v-1h-1v1h-5v2h-1v-2h-3v1h-1v-1h-2v-1h-1v1h-4v-1h-1v1h-7v-1h-1v1h-9v1h-1v-1h-15v1h-1v-1h-3v1h-1v-1h-16v-1h-1v1h-2v-1h-1v1h-28v-1h-2v1h-7v1h-3v-2h-1v1h-2v1h-1v-1h-12v-1h-1v2h-2v-1h-2v-1h-1v1h-23v1h-1v-1h-3v-1h-1v2h-3v-1h-3v-1h-1v2h-2v-1h-4v-1h-1v1h-4v-1h-1v1h-11v-1h-1v1h-8v1h-1v-1h-23v-1h-1v1h-5v1h-2v-1h-17v-1h-1v1h-7v-1h-1v1h-8v1h-1v-1h-11v-1h-1v1h-1v-1h-1v1h-7v-1h-1v1h-6v-1h-1v1h-3v1h-1v-1h-12v1h-1v-2h-2v1h-17v-1h-1v1h-11v1h-1v-1h-12v1h-1v-2h-1v1h-10v-1h-1v1h-1v-1h-1v1h-5v-1h-1v1h-1v1h-1v-1h-11v-1h-1v1h-16v-1h-1v1h-1v-1h-1v1h-4v-1h-1v1h-7v1h-1v-1h-2v-1h-1v1h-15v-1h-1v1h-22v-1h-1v1h-11v-1h-1v1h-7v1h-2v-1h-2v-1h-1v2h-1v-2h-1v1h-9v1h-2v-1h-5v2h-1v-2h-4v1h-1v-1h-13v1h-1v-1h-6v-1h-1v1h-10v-1h-1v1h-3v1h-1v-1h-14v1h-2v-1h-14v1h-2v-1h-9v1h-1v-2h-1v1h-4v1h-2v-1h-12v1h-1v-1h-17v1h-1v-2h-1v1h-3v-1h-1v1h-6v1h-1v-1h-16v1h-1v-1h-5v-1h-1v1h-22v-1h-1v1h-1v-1h-1v1h-3v1h-1v-1h-2v-1h-1v1h-11v-1h-1v1h-6v-1h-1v1h-4v1h-1v-1h-2v1h-1v-1h-4v1h-1v-1h-3v1h-1v-1h-2v1h-1v-2h-1v1h-2v-1h-1v1h-14v-1h-1v1h-5v-1h-1v1h-15v-1h-1v1h-47v-1h-2v1h-4v-1h-1v1h-11v-1h-1v1h-13v-1h-1v2h-1v-1h-9v-1h-1v1h-3v-1h-1v1h-2v1h-2v-1h-11v-1h-2v1h-3v-1h-1v1h-4v-1h-1v1h-20v-1h-1v2h-1v-1h-6v1h-1v-1h-2v-1h-1v1h-6v-1h-1v1h-2v-1h-1v1h-6v1h-1v-1h-4v1h-1v-1h-9v-1h-1v1h-1z"/>
<path d="M88 475h1v1h1v-1h1v1h3v-1h1v1h7v-2h1v2h4v1h1v-1h5v-1h1v1h7v-1h1v1h8v1h1v-1h2v1h1v-1h1v-1h1v1h13v-1h2v1h1v1h1v-1h1v-1h2v1h2v-1h2v1h2v-1h3v1h1v-1h1v1h1v-1h1v1h2v-1h2v1h5v-1h1v1h8v-1h1v1h5v-1h1v1h9v-1h2v1h4v-1h1v1h18v-1h2v1h6v-1h2v1h2v-1h1v1h5v1h1v-1h2v-1h2v1h1v-1h2v1h2v-1h1v1h3v-1h1v1h1v1h1v-1h8v-1h2v1h3v-1h1v1h3v1h1v-2h2v1h1v-1h2v1h9v-1h1v1h8v-1h1v1h3v-1h1v1h1v-2h1v2h2v-1h1v1h5v-2h4v2h5v1h2v-1h2v-1h1v1h4v-1h1v1h5v-1h1v1h28v-1h1v1h3v-1h1v1h4v1h1v-1h3v-1h1v1h11v-1h2v1h4v-1h1v1h2v-1h1v1h6v-1h1v1h10v-1h1v1h5v-1h1v1h11v-1h2v1h3v1h1v-1h1v-1h1v1h13v1h1v-1h3v-1h1v1h5v-1h1v1h1v1h1v-2h1v2h1v-1h2v-1h1v2h1v-1h8v-1h2v1h2v-1h1v1h4v-1h2v1h19v-1h1v1h4v-1h1v1h1v-1h3v-1h1v1h1v1h1v1h1v-2h1v1h4v-1h1v1h1v1h1v-1h1v-1h1v1h19v-1h1v1h3v-1h1v1h5v1h1v-2h3v1h2v-1h1v1h2v1h1v-1h7v-1h1v1h14v-1h1v1h3v-1h1v1h4v-1h2v1h1v1h1v-1h3v1h1v-1h1v-1h2v1h2v-1h4v1h12v-1h1v1h3v-1h2v1h1v-1h1v1h15v-1h1v1h16v-1h3v1h12v-1h2v1h15v-1h2v1h4v-1h1v1h3v-1h2v1h10v-1h2v1h9v-1h1v1h6v-1h2v1h3v-1h1v1h5v1h1v-1h1v-1h1v1h8v-1h1v1h14v-1h2v1h1v-1h2v1h2v-1h4v1h13v-1h1v1h1v1h1v-1h3v-1h1v1h6v1h1v-1h9v-1h1v1h5v-1h1v1h3v-1h1v1h37v1h1v-2h1v1h1v-1h1v1h1v-1h1v1h6v-1h1v1h8v-1h1v1h15v1h1v-2h1v1h6v-1h1v1h7v-1h1v1h6v-1h2v1h4v-1h1v1h1v-1h1v1h6v-1h2v1h6v-1h1v1h1v-1h1v1h5v-1h1v1h5v-1h1v1h7v-1h1v1h1v-1h1v1h4v1h2v-1h2v-1h1v1h6v-1h1v1h4v-1h1v2h1v-2h1v1h1v1h1v-1h3v1h1v-1h8v-1h1v1h1v-1h1v1h3v-1h1v1h1v-1h1v1h1v-1h1v2h1v-2h1v1h4v-1h2v1h12v-1h1v1h7v-1h1v1h12v-1h2v1h6v-1h1v1h3v-1h1v1h2v1h1v-1h1v-1h1v1h7v-1h2v1h5v-1h1v1h2v1h1v-1h5v-1h1v1h13v-1h1v1h1v-1h1v1h1v-1h1v1h1v-1h2v1h4v-1h1v1h1v-1h1v1h5v-1h2v1h15v-1h1v1h5v-1h1v1h8v-1h1v1h1v-1h1v1h3v-1h1v1h5v-1h1v1h1v1h1v-1h1v-1h1v1h5V480h-14v-1h-1v1h-1v1h-1v-1h-6v-1h-1v1h-7v-1h-1v1h-8v1h-1v-1h-28v1h-1v-1h-13v-1h-1v1h-6v2h-1v-2h-4v1h-1v-1h-2v-1h-1v1h-1v1h-1v-1h-12v-1h-1v1h-14v1h-1v-2h-1v1h-4v-1h-2v1h-6v-1h-1v1h-5v1h-1v-2h-1v1h-5v-1h-1v2h-1v-2h-1v1h-2v-1h-1v2h-2v-1h-7v-1h-1v1h-15v1h-1v-2h-1v1h-6v-1h-1v1h-3v1h-2v-1h-28v1h-1v-1h-15v1h-1v-1h-6v-1h-1v1h-4v1h-1v-1h-9v1h-1v-1h-5v-1h-1v1h-2v-1h-2v1h-10v1h-1v-1h-4v-1h-1v1h-3v1h-2v-1h-4v1h-2v-1h-3v-1h-1v1h-3v-1h-1v1h-4v-1h-1v1h-3v-1h-1v1h-1v1h-1v-1h-1v1h-1v-1h-13v-1h-1v1h-4v1h-1v-1h-2v-1h-1v1h-9v-1h-1v1h-2v-1h-1v1h-11v1h-1v-1h-2v-1h-1v1h-2v1h-1v-1h-1v1h-2v-1h-24v-1h-2v1h-4v1h-2v-1h-6v-1h-1v1h-1v-1h-1v1h-3v-1h-1v1h-8v-1h-1v1h-1v1h-2v-1h-15v1h-1v-1h-31v-1h-1v1h-3v1h-2v-1h-16v1h-1v-1h-5v-1h-1v1h-3v-1h-1v1h-6v-1h-1v1h-8v1h-1v-1h-4v-1h-2v1h-23v-1h-1v2h-1v-1h-4v-1h-1v1h-1v-1h-1v1h-2v-1h-1v1h-9v1h-1v-1h-17v-1h-1v1h-3v-1h-1v1h-5v1h-1v-1h-7v-1h-1v1h-6v1h-1v-1h-9v-1h-1v1h-11v1h-1v-1h-9v1h-1v-1h-3v-1h-1v1h-1v-1h-1v1h-15v-1h-1v1h-9v-1h-1v1h-10v-1h-1v1h-1v-1h-1v1h-3v1h-2v-1h-7v-1h-1v1h-31v-1h-1v1h-2v-1h-1v1h-2v1h-1v-1h-17v1h-1v-1h-2v-1h-2v1h-6v1h-1v-1h-1v2h-1v-2h-1v-1h-1v1h-1v-1h-1v1h-10v-1h-1v1h-2v1h-1v-1h-3v-1h-1v1h-6v-1h-1v1h-18v-1h-1v1h-20v1h-1v-1h-1v-1h-1v1h-9v-1h-1v1h-10v-1h-1v1h-6v1h-1v-1h-9v1h-3v-1h-5v1h-1v-1h-13v-1h-1v1h-10v1h-1v-1h-2v-1h-1v1h-23v-1h-1v1h-1v-1h-1v1h-2v1h-1v-2h-1v1h-8v-1h-1v1h-3v-1h-1v1h-4v1h-1v-1h-7v1h-1v-1h-1v-1h-1v1h-1v-1h-2v1h-35v-1h-1v2h-1v-1h-2v-1h-1v1h-3v-1h-1v1h-3v-1h-1v1h-9v1h-1v-1h-2v-1h-1v1h-5v1h-1v-1h-11v-1h-1v1h-19v1h-1v-1h-5v-1h-1v1h-27z"/>
<path d="M88 507h6v-1h1v1h8v1h1v-1h18v-1h3v1h2v-1h2v1h7v-1h1v1h9v-1h1v1h5v-1h1v1h3v-1h1v1h3v1h1v-1h2v-2h1v2h13v-1h1v1h1v1h1v-1h5v-1h3v1h5v-1h1v1h1v-2h1v2h4v1h1v-1h9v-1h1v1h5v1h1v-2h1v1h13v-1h3v1h2v1h1v-1h8v-1h2v1h2v-1h2v1h4v-1h2v1h2v-1h1v1h4v-1h1v1h3v-1h2v1h5v-1h4v1h9v-1h1v1h4v-1h2v1h6v-1h2v1h5v-1h1v1h2v-3h1v3h11v1h1v-1h1v-1h1v1h10v-1h1v1h4v-1h1v2h1v-1h5v-1h1v1h2v-1h2v2h1v-1h3v-1h1v2h1v-2h1v1h6v-1h1v1h6v-1h2v1h2v1h1v-1h6v-1h2v1h2v-1h2v1h2v-2h1v2h5v-1h1v1h12v-1h1v1h2v-1h1v1h7v1h1v-1h2v-1h2v1h9v-1h1v1h15v-1h1v1h2v-1h2v1h4v-1h1v2h1v-1h3v-1h1v1h3v-1h1v1h8v-1h1v1h8v-1h1v2h1v-1h3v-1h1v1h5v-1h1v1h5v-1h1v1h6v-1h1v1h1v-1h1v1h9v-1h2v1h2v-1h1v1h2v-2h1v2h1v-2h1v2h4v-1h1v1h3v-1h1v1h2v-1h1v1h2v-1h1v1h11v-1h1v1h30v-1h2v1h7v-1h1v2h1v-1h2v1h1v-1h1v-1h1v1h8v-1h1v-1h1v2h1v1h1v-1h3v-1h1v1h4v1h1v-1h14v-1h3v1h2v-1h1v-1h2v2h8v-1h1v1h1v1h1v-1h6v-1h1v1h1v-1h1v1h4v-1h1v1h4v-1h1v1h7v-1h1v1h3v-1h3v1h2v-2h1v2h2v1h1v-1h17v-1h1v1h3v1h1v-1h6v-1h1v1h2v-1h2v1h2v-1h3v1h15v1h1v-1h7v-1h1v1h2v-1h1v1h1v-1h3v1h1v-1h1v1h3v-1h2v1h6v-1h1v1h7v-1h2v1h7v-1h1v1h6v-1h1v1h1v-1h2v1h2v-1h1v1h1v-1h1v1h3v-1h1v1h8v-1h2v1h3v1h1v-1h2v-1h3v1h2v-1h1v1h8v-1h1v1h3v1h1v-1h22v-1h2v1h4v1h1v-1h2v-1h1v1h4v-1h1v1h8v1h1v-2h1v1h1v1h1v-1h3v-1h2v1h3v1h1v-1h5v-1h1v1h23v-1h1v1h10v-1h1v1h3v-1h1v2h1v-1h7v-1h2v1h6v-1h1v1h5v1h1v-2h1v1h2v-1h3v1h7v-1h1v1h5v1h1v-1h9v-1h1v2h1v-1h1v-1h1v1h7v1h1v-1h3v-1h2v1h10v-1h1v1h7v-1h5v1h5v-1h2v1h8v1h1v-1h1v-1h1v1h1v1h1v-1h11v1h1v-1h2v-1h1v1h1v-1h1v1h2v-1h1v1h1v-1h1v1h1v-1h2v1h1v1h1v-1h8v-1h1v1h2v-1h1v1h4v-1h2v1h4v-1h1v1h2v1h1v-1h1v-1h1v1h12v-1h1v1h2v-1h1v1h8v1h1v-2h1v1h4v-3h3v3h1v-1h1v1h4v1h2v-1h5v-1h1v1h11v-1h1v1h2v-1h1v1h27V511h-2v2h-1v-2h-15v1h-1v-1h-4v1h-1v-1h-3v1h-1v-1h-3v1h-1v-1h-1v-1h-1v1h-1v1h-1v-2h-2v1h-9v1h-1v-2h-1v2h-2v-1h-2v1h-3v-1h-2v1h-1v-1h-22v-1h-1v1h-11v1h-1v-1h-7v-1h-2v1h-3v1h-4v-1h-15v-1h-1v1h-3v-1h-1v1h-9v-1h-1v1h-1v1h-1v-1h-23v2h-1v-2h-2v-1h-1v2h-1v-1h-4v1h-1v-1h-9v-1h-1v1h-3v-1h-1v1h-1v1h-2v-1h-7v1h-1v-1h-9v1h-1v-2h-1v1h-1v-1h-1v1h-7v1h-2v-1h-4v1h-1v-1h-8v1h-1v-1h-1v1h-1v-1h-11v-1h-1v2h-1v-1h-5v1h-1v-1h-1v1h-1v-1h-4v1h-1v-1h-16v1h-1v-1h-3v-1h-1v1h-4v-1h-1v1h-4v1h-2v-2h-1v1h-3v-1h-1v1h-3v1h-1v-1h-6v1h-1v-1h-3v1h-1v-1h-2v1h-1v-1h-3v1h-1v-1h-8v-1h-1v1h-5v-1h-1v1h-4v2h-1v-2h-3v1h-1v-1h-14v1h-2v-1h-3v-1h-1v1h-4v1h-1v-1h-2v-1h-1v1h-1v1h-1v-1h-6v1h-1v-1h-11v1h-2v-1h-3v1h-1v-1h-1v-1h-1v1h-4v1h-1v-1h-10v1h-1v-1h-3v1h-1v-1h-1v1h-1v-1h-6v1h-2v-1h-8v-1h-1v2h-1v-1h-13v-1h-3v2h-1v-1h-8v-1h-2v2h-1v-1h-1v-1h-1v1h-6v-1h-1v1h-4v1h-1v-1h-1v1h-3v-2h-1v1h-3v1h-1v-1h-1v1h-1v-1h-1v-1h-1v1h-11v1h-2v-1h-3v1h-2v-1h-20v1h-1v-1h-11v-1h-1v2h-1v-1h-3v1h-1v-1h-5v-1h-1v1h-6v1h-2v-2h-1v1h-15v-1h-1v2h-1v-1h-9v-1h-1v1h-1v1h-1v-1h-1v-1h-1v1h-2v-1h-1v1h-9v1h-1v-1h-7v-1h-2v1h-4v1h-1v-1h-2v1h-1v-1h-5v-1h-1v1h-1v-1h-1v2h-1v-1h-3v-1h-1v2h-1v-1h-2v1h-1v-1h-1v-1h-1v1h-5v-1h-1v1h-1v1h-2v-1h-13v2h-1v-2h-5v-1h-1v1h-1v-1h-1v1h-6v-1h-1v1h-5v-1h-1v1h-2v-1h-1v1h-1v-1h-1v1h-13v1h-3v-1h-1v2h-1v-2h-2v1h-2v-1h-4v-1h-1v1h-9v-1h-1v1h-11v1h-1v-1h-16v1h-1v-1h-3v-1h-1v2h-1v-1h-7v1h-1v-1h-1v-1h-1v1h-3v1h-3v-1h-3v-1h-1v1h-13v1h-1v-1h-1v1h-3v-1h-2v1h-2v-1h-5v1h-1v-1h-6v1h-1v-1h-3v-1h-1v1h-4v-1h-1v1h-1v1h-2v-1h-5v-1h-1v1h-4v1h-1v-1h-5v1h-1v-1h-5v1h-3v-1h-4v1h-1v-1h-7v1h-1v-1h-4v1h-1v-1h-5v-1h-1v1h-5v-1h-1v1h-3v1h-2v-1h-4v1h-1v-1h-3v-1h-2v1h-10v1h-1v-1h-2v1h-1v-1h-2v-1h-1v1h-1v1h-2v-1h-1v-1h-1v1h-1v-1h-1v1h-3v1h-1v-1h-7v1h-1v-1h-1v1h-1v-1h-7v-1h-1v1h-6v-1h-1v1h-5v-1h-1v1h-2v-1h-1v2h-4v-1h-1v1h-2v-1h-3v1h-1v1h-1v-2h-2v1h-1v-1h-9v-1h-1v2h-1v-1h-8v-1h-1v1h-14v1h-1v-1h-17v1h-2v-1h-1v-1h-1v2h-1v-1h-3v1h-1v-1h-7v-1h-1v1h-2v1h-2v-1h-7v1h-2v-1h-8v1h-1v-1h-1v1h-1v-1h-3v-1h-1v2h-2v-2h-1v2h-2v-1h-3v1h-1v-1h-26v1h-2v-1h-8z"/>
<path d="M88 537h3v-1h1v1h1v-1h1v1h7v-1h1v1h4v-1h1v1h1v-1h3v1h4v1h1v-2h1v1h9v-1h1v1h8v-1h1v1h1v-1h1v1h1v-1h1v1h7v-1h1v1h4v1h1v-1h9v-1h1v1h8v1h1v-1h6v1h1v-1h1v-1h1v1h2v1h1v-1h6v-1h1v1h5v-1h1v1h1v-1h1v1h6v-1h1v1h21v-1h3v1h3v1h1v-1h1v-1h1v1h2v-1h1v1h7v-1h1v1h1v-2h1v1h3v1h7v-1h2v1h2v-1h1v1h6v-1h1v1h2v-1h2v1h6v1h1v-1h19v-1h1v1h1v-1h2v1h1v-1h1v1h6v-1h1v1h6v1h1v-1h4v-1h1v1h10v-1h1v1h3v-1h4v1h1v-1h1v1h2v1h1v-1h4v-1h1v1h14v-1h1v1h3v-1h1v1h6v-1h1v1h5v-1h3v1h2v1h1v-2h5v1h5v1h1v-1h3v-2h2v2h1v1h1v-1h7v-1h2v1h6v-1h1v1h2v-1h1v1h2v-1h2v-2h1v3h5v-2h1v-2h1v1h1v2h1v1h1v-1h1v-1h1v1h4v1h1v-3h1v3h1v-1h2v-2h2v3h2v-3h1v1h1v2h1v-1h1v1h5v-1h1v1h1v-1h1v1h4v-1h1v1h8v-1h1v1h1v-1h1v1h8v-1h1v1h3v-1h1v1h2v-1h1v1h6v-1h1v1h1v-1h1v1h2v-2h1v2h5v-1h4v2h1v-1h5v-1h1v1h7v-1h3v1h5v-1h1v1h1v1h1v-1h12v-1h3v1h7v-1h1v1h5v-1h2v1h3v-1h2v1h1v-1h1v1h6v-1h1v1h1v1h1v-1h9v-1h2v1h10v-1h1v1h1v-1h1v1h6v-1h1v1h2v-1h2v1h3v-1h3v1h10v1h1v-2h1v1h8v-1h2v1h18v-1h4v1h1v-1h2v1h3v-1h1v1h1v-1h2v1h6v-1h2v1h8v-1h1v1h1v-1h3v1h1v-1h1v1h4v1h1v-1h7v-1h1v1h17v-1h2v1h7v-1h2v1h1v-1h1v1h3v-1h1v1h2v-1h1v1h1v1h1v-1h18v-1h1v1h3v-1h1v1h4v-1h1v1h1v-1h1v1h8v-1h1v1h1v-1h3v1h3v1h1v-1h2v1h1v-1h6v-1h1v1h2v-1h1v1h7v-1h1v1h2v-1h2v-1h1v2h5v-1h1v1h2v-1h1v1h11v-1h1v1h5v1h1v-2h1v1h5v-1h1v1h18v-1h1v1h1v-1h2v1h12v-1h2v1h10v-1h1v1h10v-1h1v1h3v-1h1v1h4v-1h1v1h3v-2h1v2h6v-1h1v1h5v1h1v-1h1v-1h1v1h21v-1h1v1h4v1h1v-1h1v-1h1v1h3v1h1v-2h1v1h7v-1h2v1h2v-1h1v1h9v1h1v-1h10v-1h1v2h1v-1h1v-1h2v1h3v1h1v-1h7v-1h2v1h3v-2h1v1h1v1h7v-1h1v1h2v-1h1v1h3v-1h2v1h1v1h1v-1h1v-1h1v2h2v-1h1v-1h1v1h5v-2h1v1h1v1h1v-1h1v1h7v-1h2v1h10v-1h1v1h4v1h1v-1h6v-1h3v1h4v-1h3v1h4v-1h1v1h2v-1h1v1h1v1h1v-1h3v-1h1v1h1v-1h1v1h11v-1h1v1h1v1h1v-1h5v-1h2v1h4v-1h1v1h2v-1h1v1h3v1h1v-1h10v-1h1v1h1v-1h2v1h3v1h1v-1h1v-1h1v1h7v-1h1v1h3v-1h1v1h12V541h-2v1h-1v-1h-1v-1h-1v4h-1v-3h-20v1h-1v-1h-4v1h-1v-1h-7v1h-2v-1h-2v1h-2v-1h-7v1h-1v-1h-2v-1h-1v2h-1v-1h-12v1h-1v-1h-4v1h-3v-2h-1v1h-5v1h-1v-1h-3v-1h-1v1h-3v-1h-1v1h-3v1h-1v-1h-10v1h-1v-1h-2v-1h-1v1h-5v1h-1v-1h-5v-1h-1v1h-2v-1h-1v1h-2v-1h-1v2h-2v-1h-14v-1h-1v1h-3v1h-2v-1h-1v-1h-1v1h-3v1h-1v-1h-10v-1h-1v1h-6v1h-1v-1h-3v-1h-1v1h-2v2h-1v-1h-2v-1h-2v1h-1v-1h-1v-1h-1v1h-7v1h-2v-1h-1v2h-1v-3h-1v1h-1v-1h-1v1h-3v1h-2v-1h-4v2h-1v-1h-2v-2h-2v1h-3v-1h-1v1h-2v1h-1v-1h-14v1h-1v-1h-5v-1h-1v1h-2v-1h-1v1h-11v1h-1v-1h-3v-1h-1v1h-1v1h-1v-2h-1v1h-2v-1h-1v1h-1v1h-1v-1h-1v1h-1v-1h-6v-1h-1v1h-5v1h-1v-1h-8v1h-1v-1h-7v2h-1v-2h-8v1h-3v-1h-1v1h-2v-1h-6v-1h-1v1h-2v-1h-1v1h-1v2h-1v-2h-3v1h-1v-1h-4v1h-1v-1h-1v1h-1v-1h-7v1h-1v-1h-1v1h-1v-1h-1v1h-1v-1h-1v1h-1v-1h-2v1h-1v-1h-2v1h-1v-1h-6v1h-1v-1h-2v-1h-1v1h-8v1h-2v-1h-7v-1h-1v2h-1v-1h-17v-1h-1v1h-1v1h-1v-1h-7v-1h-2v1h-7v1h-1v-1h-12v-1h-1v1h-7v2h-2v-2h-7v1h-1v-1h-8v1h-1v-1h-3v-1h-1v1h-11v-1h-1v1h-2v1h-1v-2h-1v1h-2v-1h-1v1h-1v-1h-1v2h-1v-1h-1v-1h-1v1h-1v-1h-1v1h-2v1h-2v-1h-7v1h-1v-1h-2v1h-3v-1h-1v1h-1v-1h-2v1h-2v-1h-11v1h-1v-1h-8v-1h-1v1h-1v2h-2v-2h-3v-1h-1v1h-4v-1h-1v1h-4v1h-1v-1h-1v1h-1v-1h-5v-1h-1v1h-8v1h-1v-2h-1v1h-7v-1h-1v1h-9v-1h-1v1h-2v1h-1v-1h-7v-1h-1v1h-8v-1h-1v1h-4v-1h-1v1h-1v1h-2v-1h-4v1h-1v-1h-2v1h-1v-1h-2v-1h-2v1h-1v1h-2v-1h-8v1h-1v-1h-1v-1h-1v1h-5v-1h-1v1h-1v1h-1v-1h-1v1h-1v-1h-2v1h-1v-1h-4v-1h-2v1h-3v1h-1v-1h-5v1h-1v-1h-2v-1h-1v1h-1v1h-2v-1h-9v-1h-1v1h-8v1h-1v-1h-2v1h-1v-1h-1v1h-2v-2h-1v1h-5v-1h-1v1h-2v-1h-1v1h-2v1h-1v-1h-3v-1h-1v1h-4v1h-1v-1h-5v1h-2v-1h-9v-1h-1v1h-6v1h-1v-1h-1v3h-3v-2h-1v-1h-2v1h-1v4h-1v-5h-5v2h-1v-1h-4v1h-2v-2h-6v1h-4v-2h-1v1h-1v-1h-1v1h-6v1h-1v-2h-1v2h-1v-1h-10v1h-3v-1h-5v1h-1v-1h-1v1h-2v-1h-4v1h-1v-1h-7v-1h-1v1h-2v-1h-1v2h-1v-2h-1v1h-1v-1h-1v1h-6v1h-1v-1h-2v1h-1v-2h-1v1h-4v-1h-1v1h-1v1h-1v-1h-1v1h-1v-1h-14v1h-2v-1h-6v-1h-2v2h-2v-1h-9v-1h-1v1h-8v1h-1v-1h-3v-1h-1v1h-9v1h-1v-1h-1v-1h-1v1h-5v1h-2v-1h-7v1h-2v-1h-6v1h-1v-2h-1v1h-7v1h-1v-1h-3v-1h-1v1h-2v1h-2v-1h-6v1h-1v-1h-1v-1h-1v1h-8v1h-1v-1h-3v-1h-1v1h-7v-1h-1v1h-9v-1h-1v2h-1v-1h-2v-1h-1v1h-6v1h-1v-1h-2v3h-1v-3h-6v1h-1v-1h-5v-1h-2v1h-14v1h-2v-1h-2v2h-2v-1h-1v-1h-2v2h-1v-2h-2v1h-1v-1h-11v1h-1v-1h-1v1h-2v-1h-13v1h-1v-1h-4v1h-1v-1h-1v1h-2v-1h-2v1h-2v-1h-4v1h-1v-1h-9v-1h-1v1h-4v-1h-1v1h-2v-1h-1v1h-1v1h-1v-1h-6z"/>
<path d="M88 568h1v-1h6v-1h1v1h14v1h1v-1h1v-1h2v1h1v-1h1v1h5v-1h1v1h10v-1h1v1h5v-1h1v1h5v-1h1v1h1v-1h1v1h4v-1h1v1h2v-1h1v1h8v-1h1v1h2v1h1v-1h4v-1h2v1h4v-1h1v1h4v-1h2v1h12v-1h1v2h1v-1h2v-1h2v1h2v-1h2v1h7v1h1v-1h2v1h1v-1h2v-1h1v1h3v1h1v-1h8v1h1v-2h2v1h2v-1h1v-1h1v2h2v-1h2v1h2v-1h2v1h2v-1h2v1h2v-1h1v1h5v-1h1v1h2v-1h1v1h1v-1h1v1h4v-1h1v1h4v-1h1v1h2v-1h1v1h1v-1h1v1h5v-1h3v-1h1v2h6v-1h1v1h2v-1h3v1h1v1h1v-1h2v1h1v-1h1v-1h2v1h2v-1h1v1h4v-1h1v1h10v-1h1v1h7v-1h2v1h5v-1h2v1h5v-1h5v1h2v-1h1v1h1v-1h1v1h11v-1h1v1h5v-1h1v1h3v-2h1v1h1v1h5v1h1v-1h7v-1h1v1h3v-1h1v1h1v-1h1v1h1v-1h1v1h6v1h1v-1h3v-1h1v1h2v-1h1v1h1v-1h1v2h1v-2h1v1h2v1h1v-2h1v1h5v-1h1v1h3v-1h2v1h1v-1h1v1h4v1h1v-1h1v-1h1v1h3v-1h1v1h2v-1h1v2h1v-2h2v1h1v1h1v-1h3v-1h1v1h1v-1h1v1h6v-1h1v1h1v-1h2v1h2v1h1v-1h1v-2h1v2h3v-1h1v1h6v-1h2v1h7v-1h1v1h3v-1h1v1h4v-1h1v1h14v-2h1v2h3v-1h1v1h6v-2h1v2h1v-1h2v1h7v-1h1v1h4v-1h2v1h3v-1h2v1h4v-1h1v1h3v1h1v-1h10v1h1v-2h3v1h16v-1h1v1h3v-1h1v1h4v-1h5v1h2v-1h2v1h6v-1h1v1h8v-1h1v1h9v-1h1v1h2v1h2v-1h2v-1h1v1h4v-1h2v1h3v-1h1v1h14v-1h2v1h4v-1h1v1h12v-1h1v1h21v-1h2v1h5v1h1v-1h7v1h1v-1h1v-1h1v1h4v-1h1v1h1v-1h1v1h19v-1h1v1h1v1h1v-1h5v-1h2v1h2v-1h1v2h1v-1h3v-1h1v1h7v-1h2v1h10v-1h1v2h1v-1h6v-1h4v1h9v-1h1v1h1v-1h2v1h4v-1h1v1h3v-1h1v1h6v-1h1v1h11v-1h2v1h4v-1h1v1h3v1h1v-2h1v1h3v-1h1v1h8v-1h1v1h2v-2h1v2h8v-1h1v1h5v-1h1v1h3v-1h1v1h1v-1h1v1h3v-1h2v1h2v-1h1v1h1v-1h1v2h1v-1h2v-1h1v1h6v-1h1v1h4v-1h1v1h5v1h1v-1h12v-1h2v1h2v-1h1v1h3v1h1v-1h1v-1h1v1h5v-2h1v2h1v-1h2v1h4v-1h1v1h6v1h1v-1h4v-1h1v1h2v1h1v-1h1v-1h2v1h3v-1h1v1h2v-1h1v1h9v-1h3v1h7v-1h1v1h10v1h1v-1h11v-1h1v1h1v-1h1v1h1v-1h1v1h13v-1h1v1h5v1h1v-1h5v-1h1v1h15v-1h1v1h1v-1h1v1h5v-1h1v1h1v-1h1v1h6v1h1v-1h2v-1h1v1h5v-1h1v2h1v-1h11v-1h1v1h5v-1h1v1h1v-1h2v1h6v-1h1v1h3v-1h2v1h13v-1h2v1h1v-1h1v1h1v-1h2v1h1v-1h1v1h3v-1h1v1h5v1h1v-1h2v-1h1v1h6v-1h1v1h1v-1h1v1h1v-1h1v1h2v-1h2v1h4v-1h1v1h5v-1h1v1h4v-1h1v1h1v-1h1v1h5v-1h1v1h3V571h-6v1h-1v-1h-1v-1h-1v1h-2v-1h-1v1h-9v-1h-1v1h-6v-1h-1v1h-7v-1h-1v1h-7v1h-1v-1h-9v-1h-1v1h-6v-1h-1v1h-1v-1h-1v1h-1v-1h-1v1h-17v1h-1v-1h-2v1h-1v-1h-1v1h-1v-1h-9v1h-1v-1h-5v1h-2v-1h-10v-1h-1v1h-4v1h-1v-1h-2v1h-1v-1h-6v-1h-1v1h-5v-1h-1v1h-7v-1h-1v1h-3v-1h-1v1h-11v1h-2v-1h-5v-1h-1v1h-6v-1h-1v1h-4v-1h-1v1h-3v-1h-1v2h-1v-2h-1v1h-5v-1h-1v1h-2v1h-2v-1h-5v-1h-2v1h-23v1h-1v-1h-1v1h-1v-1h-1v-1h-1v1h-17v-1h-1v1h-17v1h-3v-1h-8v1h-1v-1h-3v1h-2v-1h-2v2h-1v-2h-5v-1h-1v2h-1v-2h-2v1h-11v1h-1v-1h-5v-1h-1v1h-2v-1h-1v1h-1v-1h-1v1h-3v1h-1v-2h-1v1h-1v-1h-1v2h-2v-1h-1v-1h-1v1h-4v-1h-1v1h-5v-1h-1v2h-1v-1h-9v1h-4v-1h-5v1h-4v-1h-2v-1h-1v2h-1v-1h-12v2h-1v-2h-2v-1h-1v2h-1v-1h-8v1h-2v-2h-1v1h-3v-1h-2v1h-2v1h-1v-1h-2v-1h-1v1h-2v-1h-2v2h-1v-1h-2v-1h-2v1h-1v-1h-1v1h-2v1h-1v-1h-20v-1h-1v2h-1v-1h-2v1h-1v-1h-24v-1h-2v1h-9v1h-1v-1h-4v-1h-1v1h-2v1h-2v-1h-1v1h-1v-2h-1v1h-7v1h-2v-1h-11v-1h-1v1h-1v-1h-1v1h-9v-1h-1v2h-1v-1h-8v1h-1v-2h-1v1h-15v-1h-1v1h-3v-1h-1v1h-20v1h-2v-1h-10v-1h-1v1h-4v-1h-1v1h-3v-1h-1v2h-1v-1h-6v-1h-2v1h-2v-1h-1v1h-3v1h-1v-1h-6v-1h-1v1h-9v1h-1v-1h-2v1h-1v-1h-11v1h-1v-1h-14v-1h-2v1h-1v-1h-1v1h-14v-1h-1v1h-11v-1h-1v1h-6v1h-2v-1h-4v-1h-1v1h-2v1h-1v-1h-3v-1h-1v1h-2v-1h-1v1h-2v-1h-1v1h-2v1h-1v-1h-12v1h-1v-1h-8v1h-1v-1h-4v1h-1v-1h-4v-1h-1v1h-7v-1h-1v1h-6v1h-1v-1h-2v-1h-1v1h-5v1h-1v-1h-15v1h-1v-1h-7v1h-1v-1h-1v1h-1v-1h-1v-1h-1v1h-4v1h-1v-1h-2v1h-1v-1h-4v1h-1v-1h-6v1h-1v-1h-5v-1h-1v1h-1v1h-1v-1h-7v-1h-1v1h-8v-1h-1v1h-7v1h-1v-1h-4v1h-1v-1h-2v-1h-1v1h-6v1h-1v-1h-1v1h-1v-1h-1v1h-1v-1h-2v-1h-1v1h-2v1h-1v-1h-7v1h-1v-1h-7v1h-2v-2h-1v1h-4v-1h-1v1h-8v1h-1v-1h-1v1h-1v-1h-8v1h-3v-1h-3v1h-1v-2h-1v1h-5v-1h-1v1h-7v1h-1v-1h-7v-1h-1v1h-7v-1h-1v1h-1v1h-1v-1h-2v1h-1v-1h-1v1h-2v-2h-1v1h-8v1h-1v-1h-8v-1h-1v2h-1v-1h-3v-1h-1v1h-4v1h-2v-1h-2v-1h-1v1h-1v-1h-1v1h-2v1h-1v-1h-17v-1h-1v1h-3v-1h-1v2h-1v-1h-3v-1h-1v1h-35v1h-3v-1h-1v-1h-1v1h-10v1h-1v-1h-4v-1h-1v3h-1v-2h-2v-1h-1v2h-1v-1h-1v1h-2v-1h-2v1h-1v-1h-4v-1h-1v1h-7v2h-1v-1h-1v-1h-7z"/>
<path d="M88 598h2v-1h1v1h7v-1h2v1h3v-1h2v1h1v-1h2v1h10v-1h1v1h31v-1h1v1h1v-2h1v2h5v-1h1v1h6v-1h1v1h7v-1h1v1h1v-1h1v1h14v-1h1v1h21v1h1v-1h4v-1h1v1h2v-1h2v1h5v1h1v-1h10v1h1v-1h1v-1h1v1h1v-1h1v1h15v-1h1v1h2v-1h2v1h7v-1h2v1h8v-1h1v2h1v-1h31v-1h1v1h3v-2h1v2h1v-1h1v1h13v1h1v-1h1v-1h1v1h1v1h1v-2h2v1h2v-1h1v1h1v-1h1v1h11v-1h1v1h7v-1h1v1h12v-1h1v1h2v-1h1v1h3v-1h1v1h12v-1h2v1h2v-1h1v1h3v-1h1v1h4v-1h1v1h4v1h1v-1h2v-1h1v1h6v1h1v-1h4v-1h1v1h3v1h1v-1h2v-2h1v2h3v-1h2v1h4v1h1v-1h15v-1h1v1h3v-1h1v1h3v-1h1v1h1v-1h1v1h12v-1h1v1h12v-1h3v1h3v-1h3v1h6v-1h1v1h3v-1h1v1h17v-1h1v1h2v1h1v-1h12v-1h2v1h1v-1h1v1h2v-1h2v1h1v-1h1v1h1v-1h1v1h2v-1h1v1h11v1h1v-1h14v-1h1v1h15v-1h1v1h4v-1h1v1h5v1h1v-2h1v1h1v1h1v-1h9v1h1v-2h1v1h2v-1h1v1h4v-1h2v1h1v-1h3v1h15v-1h2v1h4v1h1v-1h4v1h1v-1h5v-1h1v1h4v-1h1v1h8v-1h2v1h1v1h2v-1h5v-1h1v1h4v-1h4v1h2v-1h1v1h1v-1h1v1h6v-2h1v2h1v-1h1v1h2v-1h1v1h7v-1h1v1h3v-2h1v3h1v-1h7v-1h1v1h2v1h1v-2h2v1h1v-1h1v1h10v-1h2v1h2v-1h2v1h18v-1h2v1h4v-1h1v1h5v-1h1v1h3v-1h4v1h13v-1h1v1h3v-1h1v2h1v-1h28v-1h2v1h3v-1h1v1h6v-1h3v1h7v-1h2v1h16v-1h1v1h4v-1h1v1h7v-1h1v1h2v-1h2v1h2v-1h1v1h2v-1h2v1h2v-1h1v1h4v-1h2v1h11v-1h1v1h9v-1h2v1h6v1h1v-1h4v-1h1v1h4v-1h3v1h1v-1h1v1h4v1h1v-1h8v-1h1v1h2v-1h1v1h6v-1h2v1h5v-1h1v1h1v-1h1v1h3v-1h1v1h15v-1h1v1h3v-1h1v1h1v-1h1v1h7v-1h1v1h1v-1h1v1h4v1h1v-1h3v-1h3v1h2v1h1v-1h2v-1h1v1h3v-1h1v1h1v1h1v-1h6v-1h1v1h2v-1h1v1h2v-1h2v1h8v-1h1v1h16v-1h1v1h2v-1h1v1h9v-2h1v1h3v1h20v-1h1v1h1v-1h1v1h1v-1h3v1h1v-1h2v1h4v-1h1v1h6v1h1v-1h14v-1h1v1h3v-1h1v1h5v-1h1v1h1v-2h3v2h6v-1h3v2h1v-1h7V602h-1v1h-1v-1h-5v-1h-1v1h-2v1h-1v-1h-2v1h-1v-1h-4v1h-1v-1h-8v-1h-1v1h-3v1h-1v-1h-1v-1h-1v1h-6v-1h-1v1h-8v-1h-1v1h-7v1h-2v-1h-2v-1h-1v1h-7v-1h-1v2h-1v-1h-8v-1h-1v1h-6v1h-1v-2h-1v1h-5v1h-2v-1h-1v1h-1v-1h-3v-1h-1v1h-3v-1h-1v1h-1v-1h-1v2h-1v-1h-7v1h-1v-1h-3v-1h-2v1h-2v1h-1v-1h-2v1h-1v-1h-5v1h-1v-1h-5v-1h-1v1h-12v1h-2v-1h-2v-1h-4v2h-1v-1h-1v1h-1v-1h-7v1h-1v-1h-2v1h-1v-1h-7v-1h-1v1h-4v1h-1v-1h-1v1h-1v-1h-16v-1h-1v1h-1v1h-1v-1h-3v1h-1v-1h-10v1h-1v-1h-5v1h-1v-1h-6v1h-1v-1h-9v1h-1v-1h-5v1h-2v-1h-5v1h-1v-1h-2v1h-1v-1h-1v1h-2v-1h-2v1h-1v-1h-6v-1h-1v1h-9v-1h-1v1h-2v-1h-1v1h-1v-1h-1v1h-16v-1h-1v1h-1v1h-1v-2h-1v1h-1v1h-1v-1h-19v-1h-2v1h-3v1h-1v-1h-9v1h-1v-1h-4v1h-1v-1h-1v-1h-1v1h-3v1h-1v-1h-11v-1h-1v1h-6v1h-1v-1h-20v-1h-1v1h-2v-1h-1v1h-3v-1h-1v1h-2v-1h-1v1h-2v1h-1v-1h-5v1h-2v-1h-2v1h-1v-1h-2v1h-1v-1h-1v1h-1v-1h-1v-1h-1v1h-2v1h-2v-1h-4v1h-1v-1h-1v-1h-1v1h-1v1h-1v-1h-1v1h-2v-1h-3v1h-1v-1h-4v1h-1v-1h-6v1h-1v-1h-10v-1h-1v1h-2v-1h-2v1h-10v-1h-1v1h-8v1h-2v-1h-6v1h-2v-1h-2v1h-1v-1h-9v1h-1v-1h-3v1h-1v-2h-1v1h-9v1h-1v-1h-2v1h-1v-1h-2v-1h-1v1h-13v-1h-1v2h-1v-1h-4v1h-1v-1h-7v-1h-1v1h-2v2h-2v-2h-7v1h-2v-1h-1v2h-1v-2h-2v1h-1v-1h-2v-1h-1v1h-1v-1h-1v1h-4v1h-2v-1h-2v1h-1v-1h-14v-1h-1v1h-1v1h-2v-1h-6v1h-1v-1h-1v1h-1v-2h-1v1h-12v1h-1v-1h-11v-1h-1v1h-1v-1h-1v1h-2v-1h-1v1h-8v1h-1v-1h-4v1h-1v-2h-1v2h-1v-1h-2v1h-2v-1h-2v-1h-1v1h-22v1h-1v-1h-3v1h-1v-1h-11v1h-1v-1h-3v1h-1v-1h-12v-1h-1v1h-15v-1h-1v1h-6v-1h-1v1h-7v1h-1v-1h-3v-1h-1v1h-3v-1h-1v1h-10v-1h-1v1h-1v-1h-1v1h-2v1h-1v-1h-8v-1h-1v1h-2v1h-4v-1h-8v1h-1v-1h-17v1h-1v-1h-3v2h-2v-2h-13v-1h-1v1h-2v-1h-1v1h-2v1h-1v-2h-1v1h-8v1h-1v-1h-1v1h-1v-1h-4v1h-1v-1h-12v-1h-1v1h-1v-1h-1v2h-1v-1h-1v1h-1v-1h-3v1h-1v-1h-2v-1h-1v1h-1v-1h-1v1h-1v2h-1v-2h-1v-1h-1v1h-9v1h-1v1h-1v-2h-4v-1h-1v1h-9v-1h-1v1h-2v1h-2v-1h-1v1h-1v-1h-2v1h-1v-1h-4v1h-1v-2h-1v1h-12v1h-1v-1h-1v-1h-1v2h-1v-2h-1v1h-2v2h-1v-2h-7v1h-1v-1h-1v1h-1v-1h-2v2h-1v-2h-3v-1h-1v1h-4v1h-2v-1h-8v1h-1v-1h-10v-1h-1v1h-1v-1h-2v1h-4v1h-1v-1h-8v1h-1v-1h-3v2h-1v-2h-1v1h-2v-1h-13v1h-3v-1h-5v-1h-1v1h-2v-1h-1v1h-3v-1h-1v1h-4v1h-1v-1h-3v1h-1v-2h-1v1h-1v2h-1v-2h-9v1h-2v-1h-3v1h-1v-1h-2v1h-1v-1h-9v-1h-1v1h-2v-1h-1v1h-4v1h-2v-2h-1v1h-14z"/>
<path d="M88 628h1v-1h1v1h15v-1h1v1h9v1h1v-2h1v1h14v1h1v-1h5v-1h1v1h1v-1h1v1h3v-1h1v1h2v-1h2v1h8v-1h4v1h7v-2h2v2h10v-1h1v1h4v1h1v-1h9v-1h1v1h5v1h1v-1h3v1h1v-1h10v1h1v-1h3v-1h1v1h2v-2h1v2h4v-1h2v1h3v-1h1v2h1v-1h5v1h1v-1h1v1h1v-1h1v-1h3v1h3v-1h1v1h2v1h1v-1h3v-2h2v2h2v1h1v-1h7v-2h1v2h19v1h1v-1h11v-1h1v1h6v-1h1v1h9v-1h2v1h2v-1h1v1h6v-1h1v1h2v-1h2v1h9v-1h2v1h1v-1h1v1h1v-1h2v1h5v-1h1v1h2v-1h1v2h1v-2h1v1h1v-1h1v1h6v-1h2v1h8v-1h1v1h2v-2h1v1h3v1h4v-1h1v1h2v-1h1v1h6v-1h1v1h8v-1h2v1h1v-1h1v1h7v-1h1v1h2v-1h1v1h1v-1h1v1h3v-1h1v1h5v-1h1v1h10v-1h1v1h10v-1h4v1h8v1h1v-1h2v-1h1v1h2v-1h1v1h11v1h1v-1h8v1h1v-2h1v1h2v-1h1v1h1v1h1v-1h2v-1h1v1h6v-1h1v1h2v-1h2v1h2v-1h1v1h1v-1h1v1h3v1h1v-1h8v-1h1v1h5v-1h2v1h6v-1h1v1h14v-1h1v1h3v-1h1v1h5v-1h1v1h2v-2h1v2h8v-1h1v1h3v-1h1v1h4v-1h1v2h1v-1h8v1h1v-1h2v-2h1v2h4v-1h1v-1h1v2h3v1h1v-1h1v-1h1v1h4v-1h1v1h8v-2h3v2h4v-1h2v1h2v1h1v-1h4v-1h1v1h9v-1h1v1h3v1h1v-1h1v-1h1v1h3v-1h1v1h5v-1h1v1h1v-1h1v1h2v-1h1v1h2v-1h1v1h3v-1h1v2h1v-1h1v-2h1v2h2v-1h1v1h2v-1h1v1h4v-1h1v1h6v-1h1v1h8v-1h1v1h6v-1h1v1h1v-1h1v1h1v-1h1v1h14v-1h1v1h3v-1h1v1h3v1h1v-1h1v-1h1v1h3v-1h1v2h1v-1h3v-1h3v1h18v1h1v-1h17v-1h1v1h4v-1h1v1h3v-1h3v1h2v-1h1v1h2v-1h1v2h1v-1h6v-1h2v1h13v-1h1v1h1v-1h3v1h14v-1h1v1h7v-1h1v1h4v-1h3v1h1v1h1v-1h4v-1h1v1h3v-1h1v1h9v-2h1v2h5v-1h3v1h1v-1h1v1h5v-1h2v1h1v-1h1v1h2v-1h1v1h2v1h1v-1h2v-1h1v1h1v-1h1v1h4v-1h1v1h15v1h1v-1h6v-1h1v1h1v-1h1v1h5v-1h1v1h1v-1h1v1h6v-1h1v-1h1v2h14v-1h2v1h5v1h1v-1h9v-1h1v1h8v-1h1v1h3v-1h1v1h1v-1h1v1h4v-1h4v1h16v-1h1v1h2v-1h1v1h2v-1h1v1h8v-1h1v1h2v-1h1v1h4v-1h1v1h5v-1h1v1h1v-1h2v1h9v-1h2v1h1v-1h2v1h2v-1h1v1h7v-1h2v1h4v-1h1v1h3v1h1v-1h15v-1h1v1h3v-1h2v1h13v-2h1v2h1v-1h2v1h6v-1h1v1h2v-1h1v1h5v-1h1v1h4v-2h1v2h10v-1h2v1h1v-1h2v1h2v-1h1v1h3v-1h1v1h4v-1h1v1h16V631h-1v1h-18v1h-2v-2h-1v1h-5v1h-2v-1h-6v1h-2v-2h-1v1h-7v-1h-1v1h-14v1h-1v-1h-4v-1h-1v1h-4v1h-1v-2h-1v1h-3v1h-1v-1h-2v1h-1v-1h-1v-1h-1v1h-2v-1h-1v1h-2v1h-1v-1h-1v-1h-1v1h-33v1h-1v-1h-10v1h-1v-1h-7v1h-2v-1h-1v-1h-1v1h-33v1h-1v-2h-1v1h-4v1h-1v-1h-3v1h-1v-1h-2v1h-1v-1h-17v-1h-1v1h-3v1h-1v-1h-6v-1h-1v1h-6v1h-1v-1h-1v1h-1v-1h-3v-1h-2v1h-16v-1h-1v2h-1v-1h-1v-1h-1v1h-15v-1h-1v1h-5v-1h-1v1h-15v-1h-1v1h-13v-1h-1v1h-4v-1h-1v1h-22v-1h-2v1h-6v1h-2v-1h-2v-1h-1v2h-1v-2h-1v1h-2v-1h-1v1h-9v1h-1v-1h-1v1h-1v-1h-6v-1h-1v1h-2v1h-1v-1h-4v-1h-1v1h-24v-1h-1v1h-1v1h-1v-1h-35v-1h-1v1h-2v-1h-2v1h-4v-1h-2v1h-31v1h-1v-1h-7v1h-1v-2h-1v1h-3v1h-1v-1h-1v-1h-1v1h-1v1h-1v-2h-1v1h-10v-1h-1v1h-11v1h-2v-1h-11v2h-1v-2h-6v1h-1v-1h-4v-1h-1v1h-1v-1h-1v1h-8v1h-1v-1h-8v-1h-1v1h-3v2h-1v-2h-4v1h-2v-1h-4v1h-1v-1h-3v-1h-1v1h-2v1h-1v-2h-1v1h-3v1h-2v-2h-1v1h-4v1h-1v-1h-3v-1h-1v1h-1v-1h-1v1h-20v-1h-1v1h-1v-1h-1v1h-10v-1h-1v1h-2v-1h-1v1h-6v-1h-1v1h-10v-1h-1v1h-3v-1h-1v1h-3v1h-3v-1h-6v1h-4v-2h-1v1h-43v-1h-1v1h-16v-1h-1v1h-2v2h-1v-2h-7v-1h-3v1h-5v-1h-1v1h-1v-1h-1v1h-13v-1h-1v1h-2v1h-2v-1h-2v1h-1v-1h-9v-1h-1v1h-5v-1h-1v1h-4v-1h-1v1h-15v-1h-1v2h-1v-2h-1v1h-4v1h-1v-1h-17v-1h-1v1h-27v1h-1v-1h-1v-1h-1v2h-1v-1h-13v1h-1v-1h-16v1h-1v-1h-7v1h-1v-2h-1v1h-24v1h-2v-1h-2v1h-1v-1h-1v1h-1v-1h-7v1h-1v-1h-2v-1h-1v1h-1v-1h-1v1h-8v-1h-1v2h-1v-1h-5v-1h-1v1h-2v-1h-2v1h-4v-1h-1v1h-1v-1h-1v1h-12v-1h-1v1h-5v1h-1v-1h-1v-1h-1v1h-1v-1h-1v1h-1v-1h-1v1h-4v-1h-1v1h-4v1h-2v-1h-4v-1h-1v1h-1v1h-1v-1h-4v-1h-1v1h-7v2h-1v-2h-2v-1h-1v1h-2v1h-1v-1h-11v-1h-1v1h-9v1h-2v-1h-8v1h-1v-1h-2v-1h-1v1h-1v1h-1v-1h-4v-1h-1v1h-4v1h-1v-1h-3v-1h-1v1h-10v1h-1v-1h-8z"/>
<path d="M88 659h1v-1h1v-1h1v1h6v-1h1v1h3v-1h5v1h4v-1h1v1h5v-1h1v1h2v-1h1v1h17v-1h2v1h1v-1h1v1h8v-1h2v1h3v1h1v-1h2v-1h2v1h2v-1h2v1h12v-1h1v1h6v-1h2v1h4v-1h1v1h3v-1h3v1h5v1h1v-1h4v-1h3v1h4v-1h1v1h2v-1h1v1h1v-1h2v1h14v-1h1v1h2v-2h1v2h5v-1h1v1h1v-1h1v1h10v1h1v-1h1v-1h2v2h1v-1h6v-1h1v1h8v-1h1v1h1v-1h1v1h10v-1h1v1h5v-1h1v1h2v1h2v-1h2v-1h3v1h7v1h1v-1h2v-1h1v1h18v-1h1v1h5v-1h1v-1h1v2h1v1h1v-1h1v-1h3v1h9v-1h1v1h7v-1h1v1h1v-1h2v1h20v-1h1v2h1v-1h12v-1h1v1h3v-1h1v1h13v-1h1v1h4v-1h1v1h18v-2h1v2h4v-2h1v2h13v-1h1v1h5v-1h1v1h7v-1h1v1h1v-1h2v1h4v-1h1v1h10v-1h1v1h2v-1h1v1h6v1h1v-1h11v1h1v-1h1v-1h1v1h3v-1h1v1h1v-1h1v1h5v1h1v-1h8v-1h1v1h3v-2h1v2h3v-1h1v1h8v-1h2v1h1v-1h1v1h1v1h1v-1h5v-3h2v4h1v-1h2v-1h1v1h2v-1h2v1h3v-2h1v2h2v1h1v-2h2v1h19v-1h1v1h2v-1h1v1h1v-1h3v1h6v-1h1v1h1v1h1v-1h4v-1h1v1h7v-1h1v1h15v-1h1v1h4v-1h1v1h3v-1h1v1h4v-1h1v1h5v-1h1v1h1v-1h1v1h25v-1h1v1h5v-1h1v1h10v-1h1v1h1v1h1v-1h14v-1h1v1h11v1h1v-1h12v-1h1v1h5v-1h1v1h20v-1h1v1h9v-1h1v2h1v-1h8v-1h1v1h2v-1h1v1h5v1h1v-1h2v1h1v-1h8v-1h1v1h10v-1h1v1h1v-1h1v1h10v1h1v-1h1v-1h2v1h15v1h1v-1h3v-1h1v1h4v1h1v-2h1v1h1v-1h2v1h6v-2h2v2h5v-1h1v1h15v-1h1v1h2v-2h1v2h3v-1h1v1h5v1h1v-1h2v-1h1v1h6v-1h2v1h4v-1h2v1h1v-1h1v1h4v1h1v-1h8v-1h1v1h7v-1h1v1h9v-1h2v1h7v-1h1v1h8v-1h1v1h5v-1h1v1h17v-1h1v1h3v-1h1v1h2v-1h1v2h1v-1h5v-1h1v1h10v-1h1v1h4v-1h1v1h2v-1h4v1h1v-1h2v1h5v-1h1v1h4v-1h1v1h7v-1h1v1h6v1h1v-1h10v-1h2v1h24v1h1v-1h3v-1h1v1h5v-1h2v1h1v1h1v-1h1v-1h3v1h7v-1h1v1h1v-2h1v2h7v1h2v-1h9v-1h1v1h5v-1h1v1h2v-1h1v2h1v-1h4v1h2v-1h1v-1h1v1h15v-1h1v1h1v-1h1v1h3v1h1v-1h5V662h-8v1h-1v-1h-2v1h-1v-1h-9v-1h-1v1h-1v-1h-1v2h-2v-1h-1v-1h-1v1h-6v1h-1v-1h-3v-1h-1v1h-2v-1h-1v1h-1v1h-1v-1h-2v1h-2v-1h-2v-1h-1v1h-16v1h-1v-1h-7v1h-1v-1h-10v-1h-1v1h-2v-1h-1v1h-2v1h-2v-1h-1v-1h-1v1h-1v1h-2v-1h-3v1h-1v-1h-4v1h-2v-1h-3v-1h-1v1h-5v1h-1v-2h-2v1h-4v-1h-2v1h-1v-1h-1v1h-5v1h-2v-1h-6v1h-1v-1h-3v1h-1v-1h-2v-1h-1v1h-10v1h-1v-2h-1v1h-7v1h-1v-2h-1v1h-5v-1h-1v1h-2v-1h-1v1h-10v-1h-1v1h-4v1h-1v-2h-1v1h-6v-1h-1v1h-1v-1h-1v1h-3v1h-2v-1h-12v-1h-1v1h-1v-1h-1v1h-9v-1h-1v1h-13v-1h-1v1h-5v-1h-1v1h-3v1h-1v-1h-4v1h-1v-1h-8v-1h-1v1h-17v1h-1v-2h-1v1h-23v1h-2v-1h-12v1h-1v-2h-1v1h-4v-1h-1v1h-13v-1h-1v1h-5v1h-1v-1h-1v1h-1v-1h-1v-1h-1v1h-6v1h-1v-1h-14v1h-1v-1h-6v-1h-1v1h-7v1h-2v-1h-9v1h-1v-2h-1v1h-1v1h-2v-1h-8v1h-1v-1h-11v1h-2v-1h-1v-1h-1v1h-4v1h-1v-1h-1v1h-1v-1h-4v-1h-1v1h-2v-1h-2v1h-16v-1h-1v3h-1v-2h-6v1h-1v-1h-6v1h-2v-1h-8v1h-1v-1h-14v-1h-1v1h-2v-1h-1v1h-3v1h-1v-1h-6v1h-1v-1h-4v1h-1v-1h-4v1h-1v-1h-7v1h-1v-1h-2v1h-1v-1h-1v-1h-2v1h-16v1h-3v-1h-2v-1h-1v1h-2v1h-1v-2h-1v1h-3v1h-1v-1h-9v1h-4v-1h-6v1h-1v-1h-18v1h-1v-1h-1v-1h-1v1h-2v-1h-1v1h-5v1h-1v-1h-2v1h-1v-1h-18v1h-2v-1h-18v-1h-1v1h-14v1h-1v-1h-9v-1h-1v1h-3v1h-1v-1h-7v1h-1v-1h-5v-1h-1v1h-11v-1h-1v1h-1v1h-1v-1h-4v1h-1v-1h-1v-1h-1v1h-1v-1h-1v1h-6v1h-2v-1h-2v-1h-1v1h-6v1h-1v-1h-1v1h-1v-1h-1v-1h-1v1h-5v1h-1v-1h-1v1h-1v-2h-1v1h-1v-1h-1v1h-1v-1h-1v2h-1v-1h-1v-1h-1v1h-5v1h-1v-1h-3v2h-1v-2h-3v-1h-1v1h-2v1h-1v-1h-8v1h-1v-1h-4v1h-5v-1h-1v1h-1v-1h-3v1h-1v-1h-2v-1h-1v1h-2v1h-1v-1h-4v1h-1v-1h-5v-1h-1v1h-5v1h-1v-1h-3v-1h-1v1h-5v1h-2v-1h-6v1h-3v-1h-3v-1h-1v1h-5v-1h-1v1h-4v1h-2v-1h-1v1h-1v-1h-7v-1h-1v1h-7v-1h-1v1h-8v-1h-1v1h-2v1h-1v-1h-21v1h-1v-1h-17v1h-1v-1h-1v-1h-1v1h-2v-1h-1v1h-6v-1h-1v2h-1v-2h-1v1h-2v1h-1v-2h-1v2h-1v-1h-9v-1h-1v1h-1v1h-2v-1h-3v-1h-1v1h-18v-1h-1v1h-1v1h-1v-1h-8v1h-1v-1h-7v-1h-1v1h-3v1h-1v-1h-12v-1h-1v1h-11v2h-1v-2h-5v1h-1v-1h-2v-1h-2v3h-1v-2h-4v-1h-1v1h-6v1h-1v-1h-9v-1h-1v1h-1v1h-1v-1h-2v-1h-1v1h-9v1h-1v-2h-1v1h-4v-1h-1v1h-2v-1h-1v1h-7v1h-1v-1h-5v-1h-1v1h-7z"/>
<path d="M88 689h3v-1h1v1h5v-1h2v1h4v-1h1v1h1v1h1v-1h2v-1h1v1h4v-1h1v1h7v1h1v-1h5v-1h1v1h7v-1h1v1h2v1h1v-1h5v-1h2v1h5v-1h1v1h9v-1h1v1h1v-2h1v2h9v-1h2v1h1v-2h1v2h6v-1h1v1h3v-1h2v1h1v-1h1v1h13v-1h1v1h1v-1h2v1h2v-1h1v1h7v-1h1v1h2v-1h1v1h1v-2h1v2h6v-1h1v1h6v-1h1v1h2v1h2v-1h5v-1h1v1h2v-1h4v1h7v1h1v-1h3v1h1v-1h16v-1h1v2h1v-1h1v-2h1v2h11v-1h1v1h3v-1h3v1h9v-1h1v2h1v-1h11v1h1v-1h5v-1h2v1h7v-1h1v1h1v-1h1v1h8v-1h1v1h11v-1h1v1h1v-1h2v1h1v-1h2v1h1v-1h1v1h10v1h1v-1h4v-1h2v1h9v-1h2v1h12v1h1v-1h9v-1h1v1h3v-1h2v1h3v-1h1v1h2v-1h2v1h3v-1h1v1h2v1h1v-2h1v1h3v-1h2v1h12v-1h1v1h2v-1h2v1h1v-1h1v1h13v-1h1v1h11v-1h1v1h10v1h1v-1h3v-1h1v1h2v-1h1v1h3v-1h2v1h1v-1h1v1h1v-1h1v1h3v-1h1v1h10v-1h4v1h9v1h1v-1h1v1h1v-2h1v1h8v-1h2v1h7v-1h1v1h21v-1h1v1h1v-1h1v2h1v-1h4v-1h1v1h1v1h1v-1h1v-2h1v2h1v-1h1v1h4v-1h1v1h1v-1h1v1h3v-1h2v1h11v-1h1v1h4v-1h1v2h1v-1h31v-1h1v1h9v-1h1v2h2v-2h1v1h1v1h1v-1h2v-1h1v1h7v-1h1v1h5v1h1v-1h1v-1h1v1h5v-1h1v1h1v-1h1v1h6v-1h1v1h8v-1h2v1h4v-1h1v1h1v-1h1v1h11v-2h2v2h3v1h1v-2h2v2h1v-1h2v-1h1v1h15v-1h1v1h3v-1h1v1h33v-1h2v1h2v-1h1v1h1v1h2v-1h10v-1h2v1h3v-1h3v1h3v-1h1v1h1v-1h1v1h11v-1h1v1h1v-1h1v1h12v-1h1v1h8v1h1v-1h9v-1h1v1h6v1h1v-1h10v-1h1v1h8v1h1v-2h1v1h12v-1h1v1h3v-1h1v1h4v-1h1v1h1v-1h2v1h1v-1h2v1h6v1h1v-1h1v-1h1v1h5v1h1v-1h9v-1h1v1h13v-1h2v1h1v-1h2v1h15v-1h1v1h1v-1h1v1h1v1h1v-1h10v1h1v-1h2v-1h1v1h1v-1h1v1h12v-1h2v1h4v-1h1v1h2v-1h1v1h8v-1h1v1h3v-1h2v2h1v-1h11v-1h1v1h2v1h1v-1h7v-1h1v1h5v-1h2v1h5v-1h2v1h5v1h1v-2h1v2h1v-1h2v-1h2v1h1v-1h1v1h2v-1h3v1h1v1h1v-2h3v1h2v-1h1v1h20v-1h1v1h3v-1h1v1h3v-1h2v1h1v-1h1v1h10v-1h1v2h1v-1h2v-1h1v2h1v-1h1v-1h1v1h18v-1h1v1h1v-1h1v1h4v1h1v-1h8v-1h1v1h2v-2h1V693h-3v1h-1v-1h-1v-1h-1v1h-6v1h-1v-1h-4v-1h-1v1h-4v1h-2v-1h-8v1h-2v-1h-4v1h-1v-1h-6v-1h-1v1h-2v1h-1v-1h-5v1h-1v-1h-6v1h-2v-1h-14v1h-1v-1h-5v1h-2v-1h-6v1h-1v-1h-8v1h-1v-1h-1v1h-1v-1h-6v1h-1v-1h-16v-1h-1v2h-1v-1h-4v1h-1v-1h-7v-1h-1v1h-4v1h-1v-1h-6v1h-2v-1h-4v-1h-1v1h-7v-1h-1v2h-1v-1h-1v1h-1v-1h-2v-1h-1v1h-2v-1h-1v1h-5v-1h-1v1h-7v-1h-1v1h-7v-1h-1v1h-1v1h-1v-1h-7v-1h-1v2h-1v-1h-2v1h-1v-1h-13v-1h-1v1h-12v1h-1v-1h-4v-1h-1v2h-1v-1h-2v-1h-1v1h-1v-1h-1v2h-1v-1h-2v1h-1v-1h-4v-1h-1v1h-10v-1h-1v1h-1v-1h-1v1h-7v-1h-1v2h-1v-1h-1v1h-1v-1h-4v-1h-1v1h-5v1h-1v-1h-10v-1h-1v1h-15v1h-2v-1h-11v-1h-1v1h-7v1h-2v-1h-4v-1h-1v1h-3v1h-1v-1h-11v-1h-1v1h-9v-1h-1v1h-4v-1h-3v1h-1v-1h-1v2h-1v-1h-3v1h-1v-1h-4v-1h-1v2h-1v-1h-1v1h-1v-1h-10v-1h-1v1h-2v1h-1v-1h-4v1h-1v-1h-6v-1h-1v1h-1v1h-2v-1h-2v-1h-1v1h-1v1h-1v-1h-1v1h-1v-1h-14v1h-1v-1h-18v1h-1v-2h-1v2h-1v-1h-12v1h-1v-1h-1v1h-1v-1h-2v-1h-2v2h-1v-1h-6v-1h-1v1h-6v1h-1v-1h-1v1h-1v-1h-6v1h-1v-1h-3v-1h-1v1h-2v-1h-1v2h-2v-1h-8v1h-2v-1h-1v-1h-1v1h-6v1h-1v-1h-2v-1h-1v2h-1v-1h-1v1h-1v-1h-1v-1h-1v1h-3v-1h-1v2h-1v-1h-4v-1h-2v1h-14v-1h-1v1h-2v1h-1v-1h-1v-1h-1v1h-2v-1h-1v1h-8v-1h-1v1h-2v-1h-1v2h-1v-1h-5v-1h-1v1h-11v1h-1v-1h-9v1h-2v-1h-11v-1h-1v1h-4v1h-2v-1h-5v1h-1v-1h-1v1h-1v-1h-1v1h-1v-1h-2v1h-2v-2h-1v1h-2v1h-1v-1h-10v-1h-1v1h-3v1h-1v-1h-1v1h-1v-1h-2v-1h-1v1h-8v-1h-1v1h-7v1h-1v-1h-7v1h-2v-1h-4v1h-3v-1h-2v-1h-1v2h-1v-2h-1v1h-3v-1h-1v1h-9v1h-1v-1h-10v1h-1v-1h-2v-1h-1v1h-6v-1h-1v1h-2v-1h-1v1h-7v1h-1v-1h-4v1h-4v-1h-4v1h-1v-1h-1v3h-1v-3h-1v-1h-1v1h-1v1h-1v-1h-1v-1h-1v1h-2v-1h-1v1h-8v1h-2v-1h-4v1h-2v-2h-1v1h-5v1h-1v-1h-12v1h-3v-1h-2v1h-1v-2h-1v1h-2v1h-2v-1h-12v-1h-2v1h-3v-1h-1v1h-21v-1h-1v1h-6v-1h-1v1h-6v-1h-1v1h-2v2h-1v-1h-1v-1h-1v1h-1v-1h-1v1h-1v-1h-1v-1h-1v1h-1v1h-1v-1h-14v1h-1v-1h-5v1h-1v-1h-4v-1h-1v1h-2v1h-1v-1h-4v1h-1v-1h-1v1h-1v-1h-6v-1h-1v2h-1v-1h-5v1h-2v-1h-1v-1h-1v1h-1v-1h-1v1h-8v1h-1v-1h-1v1h-1v-1h-3v1h-1v-1h-1v-1h-1v1h-1v1h-1v-1h-4v1h-1v-1h-5v1h-2v-2h-1v2h-1v-1h-2v-1h-3v1h-3v1h-2v-1h-9v1h-1v-1h-4v-1h-1v1h-6v1h-1v-1h-2v-1h-1v1h-1v1h-1v-1h-9v1h-1v-2h-1v1h-1v1h-1v-2h-1v1h-8v-1h-1v1h-6v1h-1v-1h-2v1h-1v-1h-4v-1h-1v1h-2v1h-1v-1h-1v1h-1v-1h-5v1h-2v-1h-23v1h-1v-1h-7v-1h-1v1h-4v-1h-1v1h-3v-1h-2v1h-6v-1h-1v1h-2z"/>
<path d="M88 719h6v-1h1v1h3v-1h4v1h2v-1h3v1h1v1h1v-1h2v1h1v-1h2v-1h1v1h11v-1h1v1h6v-1h2v1h2v-1h1v1h4v-1h1v1h29v-1h1v1h10v-1h1v1h5v-1h1v1h2v-1h1v1h6v-1h1v1h3v-1h1v1h6v1h2v-1h2v-1h2v1h4v-1h1v1h3v-1h1v1h2v-1h2v1h5v-1h1v1h5v-2h1v2h3v-1h2v1h15v1h1v-1h2v-1h2v1h1v1h1v-1h4v-1h2v1h13v1h1v-1h23v1h1v-1h12v-1h1v1h10v-1h1v1h6v-1h1v1h2v-1h1v1h11v1h1v-1h20v-1h1v1h17v-1h1v1h9v-1h1v1h1v-1h1v1h9v-1h2v1h1v-1h1v1h1v-1h1v1h6v-2h1v2h4v-1h1v1h1v-1h1v1h2v-1h1v1h5v-1h1v1h16v1h1v-1h3v-1h4v1h1v1h1v-1h14v-1h1v1h9v-1h1v1h12v1h1v-1h5v1h1v-1h1v-1h1v1h2v-1h1v1h1v-1h2v1h4v-1h1v1h2v1h1v-1h8v-2h1v2h4v-1h1v1h1v-1h1v1h4v-1h1v1h1v1h2v-2h1v1h3v-1h1v1h6v-1h2v1h9v-1h2v1h4v1h1v-2h1v1h1v1h1v-1h3v-1h2v2h1v-2h1v1h4v-1h1v1h2v-1h1v1h8v1h1v-1h16v-1h1v1h7v-1h2v1h1v-1h1v1h5v-1h1v1h1v-1h1v1h3v-1h1v1h4v-1h1v1h6v1h1v-1h7v1h1v-1h5v1h1v-1h1v-1h1v1h2v-1h1v1h6v-1h1v1h4v1h1v-1h4v-1h1v1h6v1h1v-1h5v-1h1v1h2v-1h1v1h6v-1h1v1h17v-1h1v1h3v-1h2v2h1v-1h6v-1h1v1h3v-1h1v2h1v-1h7v-1h1v1h20v-1h4v1h20v-1h2v1h6v-1h2v1h2v-1h2v1h3v1h1v-1h2v-1h1v1h16v-1h1v1h13v-2h1v2h1v-1h2v1h5v1h1v-1h2v-1h1v1h1v-1h1v1h8v-1h1v1h1v-1h1v1h8v-1h2v1h7v-1h1v1h5v-1h1v1h5v-1h3v1h4v-1h2v1h2v1h1v-1h6v1h1v-1h14v-2h1v2h9v-1h1v1h6v1h1v-2h1v1h6v-1h1v1h4v-1h1v1h12v1h1v-1h2v-1h2v1h6v-1h1v1h16v1h1v-2h1v1h33v-2h1v2h7v1h1v-2h1v1h1v-1h1v1h8v-1h1v1h2v-1h1v1h6v-1h1v1h2v1h1v-2h1v1h9v1h1v-1h1v-1h1v1h1v-1h1v1h1v-1h3v1h5v-1h2v1h19v-1h1v1h4v-1h2v1h4v-1h1v1h13v-1h2v1h2v-1h1v2h1v-1h3v-1h1v1h1v-1h2v1h7v-1h1v1h12v1h1v-1h1v-2h1v2h16V723h-9v1h-1v-1h-5v-1h-1v2h-3v-1h-11v-1h-1v1h-7v2h-1v-2h-6v1h-1v-1h-3v-1h-1v1h-1v1h-1v-1h-2v-1h-1v1h-1v-1h-1v1h-15v1h-2v-1h-10v1h-2v-1h-5v1h-1v-1h-9v1h-1v-1h-6v2h-1v-2h-6v1h-1v-1h-11v1h-1v-1h-27v-1h-1v2h-1v-1h-1v1h-1v-1h-4v1h-1v-1h-3v-1h-1v1h-3v-1h-2v1h-5v-1h-1v1h-15v1h-2v-1h-11v1h-1v-1h-1v1h-3v-1h-8v1h-1v-1h-5v1h-1v-1h-2v1h-1v-1h-5v1h-1v-2h-1v1h-4v-1h-1v2h-1v-1h-9v-1h-1v1h-11v-1h-1v1h-2v-1h-1v1h-1v-1h-1v1h-11v1h-1v-1h-5v1h-1v-1h-7v-1h-1v2h-3v-1h-6v1h-1v-1h-1v-1h-1v2h-3v-1h-1v-1h-1v1h-1v-1h-2v1h-15v-1h-1v1h-6v1h-2v-1h-3v1h-2v-1h-1v1h-1v-1h-3v-1h-1v1h-12v1h-1v-1h-21v-1h-1v1h-10v1h-1v-1h-2v1h-2v-1h-13v-1h-1v1h-1v2h-1v-2h-10v-1h-1v1h-3v-1h-1v1h-15v-1h-1v1h-3v1h-2v-1h-4v-1h-1v2h-1v-2h-1v1h-4v1h-1v-1h-8v-1h-1v1h-8v1h-1v-1h-1v1h-3v-1h-10v1h-1v-1h-4v1h-2v-1h-4v1h-1v-1h-15v1h-1v-1h-2v1h-1v-1h-8v1h-1v-2h-1v1h-3v-1h-2v1h-32v1h-1v-1h-8v-1h-1v1h-19v1h-1v-1h-6v-1h-1v1h-11v-1h-1v1h-2v-1h-1v1h-2v-1h-1v1h-1v1h-1v-1h-2v1h-1v-1h-13v1h-1v-1h-4v1h-1v-1h-9v-1h-2v1h-5v1h-1v-1h-13v-1h-2v1h-3v-1h-1v1h-5v1h-3v-1h-3v1h-1v-1h-7v-1h-1v1h-2v1h-2v-1h-1v-1h-2v1h-1v1h-1v-1h-7v-1h-1v1h-18v-1h-1v1h-3v-1h-2v1h-2v1h-1v-1h-8v-1h-1v1h-23v1h-1v-2h-1v2h-2v-2h-1v1h-10v-1h-1v1h-4v-1h-1v1h-3v-1h-1v1h-1v1h-1v-1h-8v2h-1v-2h-7v1h-2v-1h-4v-1h-1v2h-1v-1h-10v1h-2v-1h-1v1h-2v-1h-3v1h-1v-1h-3v-1h-1v1h-3v1h-1v-1h-7v-1h-1v1h-1v1h-1v-1h-2v-1h-1v1h-3v-1h-1v1h-2v2h-1v-2h-3v1h-1v-1h-5v1h-3v-1h-4v-1h-1v1h-1v-1h-1v1h-2v1h-1v-1h-1v1h-1v-1h-5v1h-1v-1h-8v1h-1v-1h-6v-1h-2v1h-4v1h-1v-1h-3v1h-1v-2h-1v1h-1v1h-2v-1h-8v1h-2v-1h-4v1h-2v-1h-1v1h-1v-2h-1v1h-4v-1h-1v1h-1v-1h-1v1h-1v-1h-2v1h-3v1h-1v-1h-1v1h-1v-1h-4v-1h-1v1h-10v1h-1v-1h-2v1h-1v-1h-3v-1h-1v1h-15v1h-2v-1h-5v1h-1v-1h-5v1h-1v-1h-3v1h-1v-1h-1v-1h-1v1h-4v-1h-1v1h-16v1h-2v-1h-1v-1h-1v3h-1v-1h-2v-1h-1v1h-3v-1h-16v1h-1v-1h-7v2h-1v-2h-9v-1h-1v1h-4v1h-1v-1h-3v2h-1v-2h-8v-1h-1v1h-3z"/>
<path d="M88 749h3v-1h1v1h2v1h2v-1h3v-1h3v1h17v-1h1v1h1v1h1v-2h1v1h9v-1h1v1h1v1h1v-1h1v-1h1v1h1v-1h1v1h25v1h1v-1h1v-1h1v1h11v-1h1v1h4v-1h1v1h3v-1h3v1h1v-1h1v1h1v-1h1v1h3v-1h1v1h5v1h1v-1h9v-1h2v1h2v-1h2v1h3v-1h2v2h1v-3h1v2h11v-1h1v1h3v-1h4v1h3v-1h1v1h1v1h1v-1h9v-1h1v1h3v-1h5v1h5v-1h1v1h2v-1h2v1h1v-1h1v1h2v-1h1v1h6v-1h1v1h1v-2h1v2h2v-1h1v1h4v1h1v-1h1v-1h2v1h1v-1h1v1h1v-1h2v1h1v-1h2v1h9v-1h1v-1h1v2h1v1h1v-1h1v-1h1v1h10v-1h1v1h11v-1h2v1h5v-1h1v1h1v-1h1v1h2v-1h1v1h1v-1h1v1h3v-1h1v1h13v-1h1v1h1v-1h1v1h7v-1h1v1h7v-1h1v1h1v-1h2v1h2v-1h1v1h11v1h1v-1h3v-1h1v1h14v-1h2v1h11v-1h1v1h10v-1h1v1h3v-1h1v1h1v-2h1v1h1v1h2v-1h1v1h8v-1h2v1h5v-1h2v1h1v-1h1v1h10v1h1v-2h1v1h1v-1h1v1h11v-1h1v1h4v-1h1v1h1v-1h1v1h29v-1h1v1h19v-1h1v1h9v-1h1v1h5v-2h1v3h1v-1h1v1h1v-1h1v1h1v-1h5v1h1v-1h8v-1h1v1h16v-1h1v1h2v-1h1v1h6v-1h1v1h1v1h1v-1h16v-1h2v1h1v-1h2v1h3v-1h2v1h3v-1h1v1h10v-1h1v1h19v-1h1v1h4v-1h1v1h4v-1h1v1h6v-1h4v1h2v-2h1v2h2v-1h1v1h5v-2h1v2h4v-1h1v1h1v-1h2v1h3v-1h2v1h4v-1h2v1h32v-1h1v1h6v-1h1v1h10v-1h2v1h1v-1h2v1h2v-1h1v1h3v1h1v-1h1v-1h1v1h5v-1h1v1h2v-1h6v1h1v1h1v-1h8v-1h1v1h6v-1h1v1h8v-1h2v1h1v-1h2v2h1v-2h1v1h1v-1h1v1h2v-1h1v1h5v-1h1v1h2v-1h1v1h2v1h1v-1h4v1h1v-1h7v-2h1v2h2v-1h1v1h12v-1h1v2h1v-1h2v-1h1v-1h1v2h10v-1h1v1h1v-1h1v1h2v-1h1v1h2v-1h1v1h1v-1h1v1h3v-1h1v1h2v-1h1v1h1v-1h2v1h1v-1h7v1h6v1h1v-1h1v-1h1v1h3v-1h1v1h4v-1h1v1h3v1h1v-1h1v-1h1v1h1v-1h1v1h2v-1h1v1h15v-1h1v1h2v-1h2v1h3v-1h1v1h3v-1h2v1h12v-1h1v1h2v1h1v-2h1v1h18v1h1v-1h1v-1h5v1h2v-1h2v1h4v1h1v-1h3v-1h1v1h2v-1h1v1h13v-2h1v2h3v-1h1v1h5v1h1v-1h5v-1h1v1h4v-1h1v1h2v-1h1v1h6v-1h1v1h3v-1h1v1h1v-1h1v1h6v-1h1v1h9v-1h1v1h5v-1h1v1h11v-1h1v2h1v-1h2v-1h1v2h1v-2h2v1h2v-1h1v1h4v1h1v-1h3v-1h1v1h11v-1h2v1h7v-1h1v1h1v-1h1v1h4v-1h1v1h4v-1h1v2h1v-1h3v-1h1v1h2v-1h1V753h-1v1h-1v-1h-3v1h-5v-1h-7v1h-1v-1h-5v1h-1v-1h-1v1h-2v-1h-4v-1h-1v1h-2v1h-1v-1h-2v1h-3v-1h-1v-1h-1v2h-1v-1h-3v-1h-1v2h-1v-1h-7v1h-1v-1h-4v1h-1v-1h-1v1h-1v-1h-13v1h-1v-1h-2v1h-1v-1h-5v1h-2v-1h-1v-1h-2v1h-1v1h-2v-1h-2v-1h-1v1h-1v1h-1v-1h-2v1h-2v-1h-1v-1h-1v1h-18v-1h-1v1h-17v-1h-1v1h-33v1h-1v-1h-2v1h-1v-1h-2v1h-1v-1h-3v-1h-1v1h-3v-1h-1v1h-5v1h-1v-1h-3v1h-2v-1h-4v1h-1v-1h-4v-1h-1v1h-3v1h-1v-1h-1v-1h-1v2h-1v-1h-1v1h-1v-1h-1v-1h-1v1h-5v1h-1v-1h-3v1h-2v-1h-1v1h-1v-1h-9v1h-1v-1h-2v1h-1v-1h-1v-1h-1v1h-5v1h-1v-1h-1v-1h-1v2h-1v-1h-2v1h-1v-2h-1v1h-8v1h-1v-1h-3v1h-1v-1h-1v1h-1v-1h-1v1h-3v-1h-1v1h-2v-1h-1v1h-1v-1h-13v-1h-1v1h-4v1h-1v-1h-8v1h-1v-2h-1v1h-4v-1h-1v1h-3v1h-1v-1h-4v2h-1v-2h-1v1h-2v-1h-8v2h-1v-2h-2v1h-1v-1h-3v-1h-1v2h-1v-1h-1v1h-3v-1h-2v1h-1v-1h-1v-1h-1v1h-2v1h-1v-1h-1v1h-1v-1h-4v1h-1v-1h-2v1h-1v-1h-8v1h-3v-1h-5v-1h-2v1h-1v1h-1v-1h-1v1h-2v-1h-6v-1h-1v1h-2v-1h-1v1h-11v-1h-1v1h-3v1h-3v-1h-3v-1h-1v1h-13v1h-1v-1h-8v1h-2v-2h-1v1h-1v1h-1v-1h-1v1h-1v-1h-12v-1h-1v1h-3v1h-1v-1h-4v-1h-1v1h-6v1h-1v-1h-4v-1h-1v1h-1v-1h-1v1h-5v-1h-1v1h-8v-1h-1v1h-4v-1h-1v2h-2v-1h-6v1h-1v-1h-4v-1h-1v1h-7v-1h-1v1h-1v1h-1v-1h-1v1h-1v-1h-8v1h-1v-1h-4v1h-1v-1h-8v-1h-1v1h-2v-1h-1v1h-6v1h-1v-1h-1v1h-1v-1h-11v1h-1v-1h-1v1h-1v-1h-1v-1h-1v1h-4v-1h-2v1h-9v-1h-1v1h-2v-1h-1v1h-1v-1h-1v1h-3v-1h-1v1h-3v1h-1v-1h-2v-1h-1v1h-1v-1h-1v1h-7v1h-2v-1h-1v-1h-1v1h-3v1h-1v-1h-3v-1h-1v2h-1v-1h-1v-1h-1v2h-1v-1h-6v1h-1v-1h-2v1h-1v-1h-3v-1h-1v1h-8v1h-1v-1h-1v-1h-1v1h-1v1h-1v-2h-1v1h-1v1h-1v-1h-7v1h-1v-1h-3v1h-1v-1h-7v1h-1v-1h-1v-1h-1v1h-13v-1h-1v1h-4v1h-1v-1h-4v-1h-1v1h-8v1h-4v-1h-9v-1h-1v2h-1v-1h-9v3h-1v-3h-2v1h-2v-1h-1v1h-2v-1h-1v-1h-1v2h-1v-1h-1v1h-4v-1h-2v-1h-1v1h-1v1h-1v-1h-3v1h-1v-1h-8v-1h-1v1h-1v-1h-1v1h-1v1h-1v-1h-1v2h-1v-2h-5v1h-3v-1h-3v-1h-1v1h-2v1h-1v-1h-2v-1h-1v2h-1v-1h-2v-1h-1v1h-6v1h-1v-1h-9v-1h-2v1h-3v1h-2v-2h-1v1h-3v-1h-1v1h-3v1h-2v-2h-1v1h-12v1h-1v-1h-3v1h-2v-1h-7v1h-1v-1h-20v1h-1v-1h-2v-1h-1v1h-2v1h-1v1h-1v-2h-1v1h-4v-1h-1v1h-7v-1h-1v1h-1v-1h-9v1h-2v-1h-7v1h-3v-1h-3v2h-1v-2h-1v-1h-1v1h-4v1h-1v-1h-4v1h-1v-1h-4v1h-1v-1h-7v-1h-1v1h-1v1h-1v-2h-1v1h-1v-1h-1v1h-1v1h-2v-1h-6v1h-1v-1h-3v-1h-1v1h-4v1h-2v-1h-8v2h-1v-2h-3v-1h-1v1h-2v-1h-1v2h-1v-1h-8v1h-2v-1h-4v1h-1v-1h-2v1h-1v-1h-5v-1h-2v1h-2v-1h-1v2h-2v-1h-3v1h-1v-1h-1v1h-1v-1h-2v-1h-1v1h-9v1h-2v-1h-7v-1h-1v2h-1v-1h-2v1h-1v-1h-8v1h-1v-1h-14v1h-2v-1h-3v2h-1v-2h-6v1h-1v-1h-4v1h-1v-1h-1v1h-1v-1h-2v1h-1v-1h-1v1h-2v-1h-1v-1h-2v1h-1z"/>
<path d="M88 779h2v1h1v-1h2v-1h2v1h3v-1h6v1h2v-1h1v1h1v-1h1v1h10v1h1v-1h1v-2h3v2h3v-1h1v1h7v-1h1v1h2v-2h1v2h1v-1h5v-2h2v2h1v-2h2v3h1v-1h3v1h1v-1h1v1h2v-1h5v1h3v-1h1v1h5v-1h1v1h2v-1h1v1h1v-1h4v1h2v1h1v-2h3v1h1v-1h1v1h4v-1h1v1h6v1h1v-1h1v1h1v-2h2v1h2v1h1v-1h3v-1h1v1h5v1h1v-1h1v1h1v-2h2v1h9v-1h1v1h2v-1h1v1h3v-1h1v1h1v-1h1v1h2v-1h1v1h2v-1h2v1h2v-1h2v1h3v-1h2v1h2v-1h1v1h2v1h1v-1h3v-1h1v1h2v-1h1v1h2v-1h2v1h5v-1h2v1h3v-1h2v1h1v-1h2v1h1v-1h2v1h1v-1h1v1h8v-1h1v1h6v-1h2v1h1v-1h1v1h2v-1h1v2h1v-2h1v1h1v-1h2v1h4v-1h2v1h3v-1h4v1h5v-1h3v1h2v-1h3v1h2v-1h3v1h5v-1h1v1h2v-1h1v1h4v-1h1v1h2v-1h1v2h1v-1h5v-2h1v2h1v-1h3v1h2v-1h1v1h1v-1h1v1h6v-1h1v1h8v-1h1v1h1v-1h2v1h4v-1h2v1h15v-2h1v1h4v1h1v-2h1v2h5v-1h1v1h3v-1h1v1h4v-1h1v1h4v-1h1v1h3v-1h1v1h3v-1h1v1h3v-1h1v1h1v-1h1v1h1v-1h1v1h1v1h1v-1h2v-1h3v1h18v-1h3v-1h1v1h3v1h2v-1h2v1h5v1h1v-1h3v-1h1v1h6v-1h1v1h3v-1h1v1h1v-1h2v-1h1v2h3v-1h1v1h5v-1h2v1h3v1h1v-1h5v-1h2v1h2v-1h2v1h6v-1h1v1h5v-1h2v1h2v-1h1v1h3v-1h4v1h5v-1h1v1h4v1h1v-1h3v-1h1v1h2v-1h1v1h2v-1h1v1h1v-1h1v1h3v-1h2v1h1v-1h1v1h2v1h1v-1h5v-1h1v1h3v-1h1v1h1v1h1v-2h1v1h1v-1h1v1h6v-1h1v1h4v-1h2v1h1v-1h2v1h3v-1h1v1h6v-1h1v1h1v-1h1v1h2v-1h2v1h2v-1h1v1h1v-1h2v1h2v-1h3v1h1v-1h1v1h8v-1h2v1h6v-2h1v1h3v1h4v-1h1v1h9v-1h1v1h1v1h1v-2h2v1h6v-1h1v1h6v-1h1v1h1v1h1v-1h2v-1h1v1h1v1h1v-1h4v-1h1v2h1v-3h1v2h10v-1h1v1h3v-1h1v1h1v-1h3v1h3v-1h1v1h1v-2h1v2h1v-1h1v1h3v-1h1v1h5v-1h1v1h2v-1h1v1h5v-1h1v2h1v-1h1v-1h2v1h3v-1h1v1h4v-1h1v1h1v1h1v-1h7v-1h5v1h1v1h1v-1h4v-1h2v1h7v-1h2v1h6v-1h1v1h3v-1h1v1h1v-1h1v1h2v-1h2v1h2v-1h3v1h4v-1h1v1h1v-1h1v1h14v-1h1v1h1v-1h2v1h2v-1h3v1h1v-1h1v1h5v-1h1v1h6v-1h1v1h9v-1h2v1h1v-1h2v1h1v-1h1v1h2v-1h1v1h1v1h1v-2h2v1h5v-1h1v1h3v-1h1v1h1v-1h1v1h3v1h1v-1h3v-1h1v1h1v1h1v-1h14v-1h4v1h4v-1h1v1h11v-1h1v1h1v-1h1v1h1v-1h3v1h4v-1h1v1h3v-1h1v1h1v-1h3v1h1v-1h1v1h29v-1h4v2h1v-1h2v-1h4v2h1v-2h1v1h4v-1h1v2h1v-1h4v-1h2v1h16v-2h1v1h3v1h1v-1h1v1h5v-1h2v1h5v-1h4v1h1v-1h1v1h12v-1h2v1h1v1h1v-1h3v1h1v-2h2v1h1v-1h3v1h1v-1h1v1h11v-1h2v1h6v-1h2v1h4v-1h3v1h3v-1h1v1h1v-1h1v1h1v-1h1v1h6v-1h1v2h1v-1h1v-1h2v1h1v-1h1v1h1v-1h2v1h2v-1h1v1h5v1h1v-2h1v1h2v-1h1v1h13v-1h1v1h1v1h1v-1h4v-1h1v1h2v-1h1v1h3v-1h1V783h-1v-1h-1v2h-1v-1h-4v1h-1v-1h-3v1h-1v-1h-1v1h-1v-1h-5v1h-1v-1h-4v1h-1v-1h-4v1h-1v-1h-2v1h-2v-1h-5v2h-2v-2h-2v-1h-1v1h-1v1h-1v-1h-2v-1h-1v1h-2v1h-3v-1h-3v1h-1v-1h-5v1h-1v-1h-9v-1h-1v1h-10v1h-3v-1h-7v1h-1v-1h-2v1h-1v-2h-1v1h-2v-1h-1v2h-2v-1h-1v1h-1v-1h-7v1h-1v-2h-1v1h-3v1h-2v-1h-1v1h-4v-1h-3v1h-1v-1h-1v1h-1v-1h-4v1h-1v-1h-4v1h-3v-1h-6v1h-1v-1h-2v2h-1v-1h-1v-1h-1v1h-1v-1h-4v1h-1v-1h-1v2h-1v-1h-1v-1h-1v1h-1v-1h-1v-1h-1v2h-1v-1h-2v1h-3v-1h-8v1h-1v-1h-5v1h-1v-1h-1v1h-1v-1h-10v2h-1v-2h-2v1h-1v-1h-3v-1h-1v2h-1v-1h-1v1h-1v-1h-4v1h-2v-2h-1v1h-4v1h-3v-1h-11v1h-1v-1h-1v1h-1v-1h-2v-1h-1v1h-2v-1h-1v2h-1v-1h-6v-1h-1v1h-1v-1h-1v1h-9v1h-1v-1h-6v-1h-1v1h-1v1h-1v-1h-7v1h-1v-2h-1v1h-3v1h-1v-1h-4v1h-1v-1h-2v1h-1v-1h-8v1h-2v-1h-4v1h-1v-1h-7v1h-1v-1h-1v1h-1v-1h-1v1h-2v-1h-2v1h-1v-1h-4v1h-1v-2h-1v2h-3v-1h-7v-1h-1v2h-1v-1h-2v-1h-1v2h-1v-1h-2v-1h-1v1h-2v1h-1v-2h-1v1h-1v1h-1v-1h-1v1h-1v-1h-1v1h-3v-1h-1v-1h-1v1h-5v-1h-1v1h-6v1h-1v-1h-3v2h-2v-2h-2v1h-1v-1h-1v1h-1v-1h-10v-1h-1v3h-1v-2h-1v1h-2v-1h-1v1h-1v-1h-18v-1h-1v1h-10v1h-1v-1h-2v-1h-1v2h-1v-1h-1v1h-1v-1h-2v1h-1v-1h-4v1h-1v-1h-1v1h-2v-1h-6v1h-1v-1h-1v-1h-2v2h-3v-1h-7v1h-1v-1h-4v2h-2v-2h-5v1h-1v-1h-1v1h-1v-1h-1v1h-1v-2h-1v1h-2v-1h-1v2h-1v-1h-1v1h-1v-1h-1v1h-1v-1h-9v1h-1v-1h-4v2h-1v-2h-3v1h-2v-1h-4v1h-1v-1h-1v-1h-1v1h-4v1h-1v-1h-2v1h-2v-1h-1v-1h-1v1h-2v1h-1v-1h-7v1h-1v-1h-2v-1h-1v1h-2v-1h-1v1h-1v-1h-1v1h-8v1h-1v-2h-1v1h-4v-1h-1v1h-9v-1h-1v1h-4v2h-1v-1h-2v-1h-3v1h-2v-1h-8v1h-1v-2h-1v1h-1v1h-2v-1h-1v2h-2v-3h-1v1h-2v1h-3v-1h-2v1h-1v-1h-4v1h-1v-1h-4v1h-1v-1h-4v1h-1v-1h-1v1h-3v-1h-17v1h-1v-1h-4v1h-1v-1h-2v1h-1v-1h-7v1h-1v-1h-2v1h-1v-1h-7v-1h-1v1h-3v-1h-2v3h-1v-2h-4v1h-1v-1h-3v1h-1v-1h-2v1h-1v1h-2v-2h-4v-1h-1v1h-3v1h-1v-1h-1v1h-1v-1h-5v1h-1v-1h-1v1h-1v-1h-3v1h-1v-1h-1v1h-1v-1h-2v1h-1v-1h-4v1h-2v-1h-1v1h-1v-1h-7v1h-1v-1h-4v1h-1v1h-3v-2h-2v1h-1v-1h-12v1h-2v-1h-7v-1h-2v2h-3v-1h-3v1h-2v-1h-2v1h-2v-1h-2v1h-2v-1h-3v1h-2v-1h-1v-1h-1v1h-7v1h-1v-1h-7v1h-1v-1h-9v-1h-2v1h-2v-1h-1v1h-8v1h-1v-2h-1v1h-3v1h-1v-1h-2v1h-1v-1h-1v-1h-1v2h-2v-1h-1v1h-1v-1h-1v-1h-1v1h-2v-1h-1v1h-1v1h-2v-1h-5v-1h-1v1h-2v1h-1v-1h-3v-1h-1v1h-7v1h-1v-1h-3v-1h-1v1h-3v1h-1v-1h-3v1h-1v-1h-1v2h-1v-2h-3v1h-2v-1h-2v1h-3v-1h-7v1h-1v-1h-2v1h-1v-1h-3v-1h-1v1h-7v2h-1v-2h-4v1h-1v-1h-2v1h-1v-1h-3v1h-1v-1h-2v1h-1v-1h-3v1h-2v-1h-3v1h-1v-1h-6v1h-1v-1h-6v-1h-2v1h-10v1h-1v-1h-1v1h-1v-1h-1v1h-1v-1h-1v-1h-1v2h-3v-1h-2v1h-1v-1h-1v-1h-1v1h-1v1h-1v-2h-1v1h-1v1h-2v-1h-2v1h-1v-1h-3v1h-1v-1h-3v-1h-1v1h-1v1h-1v-1h-3v1h-1v-1h-6v-1h-1v1h-1v-1h-1v2h-1v-1h-1v1h-2v-1h-1v1h-3v-1h-1v-1h-1v1h-3v1h-2v-1h-3v-1h-1v1h-5v1h-1v-1h-2v2h-2v-2h-1v1h-1v2h-1v-2h-2v-1h-3v3h-1v-3h-1v1h-1v-1h-2v1h-3v-1h-2v1h-1v-2h-1v1h-1v1h-2v-1h-8v1h-1v-1h-3v1h-1v-1h-1v1h-1v-1h-5v-1h-1v1h-6v1h-1v-1h-2v1h-1v-1h-2v1h-1v-1h-2v1h-4v-1h-1v1h-1v-1h-3z"/>
<path d="M88 810h4v-1h1v1h2v-1h2v1h1v1h1v-1h1v-1h1v1h4v-1h1v1h4v-1h1v1h1v-2h1v1h2v-1h1v1h1v1h1v-1h3v1h1v-1h1v2h1v-1h2v-1h4v1h1v-1h4v1h2v-1h1v1h9v-2h1v2h3v-1h1v1h2v-1h3v1h3v1h1v-1h1v-1h2v1h5v-1h1v1h4v-1h7v1h3v-1h2v1h7v-1h2v1h4v-1h3v2h1v-1h5v1h1v-1h3v-1h1v1h3v-1h1v1h1v-1h1v2h1v-1h12v-1h2v1h8v-1h1v1h6v-1h1v1h1v-1h1v1h1v-1h1v1h1v1h1v-1h2v-1h1v1h1v-1h1v1h2v-1h5v1h1v-1h1v1h1v-1h1v1h9v-1h1v1h3v1h1v-2h1v1h3v-2h1v2h1v1h1v-2h1v1h5v-1h1v1h6v-1h1v-1h1v2h2v-1h1v1h1v-1h3v1h1v-1h1v1h4v-1h1v1h4v1h1v-1h1v1h1v-1h14v-1h4v1h8v-1h1v1h1v-1h2v1h6v-1h1v1h4v-1h2v1h1v-1h4v1h1v-1h2v2h1v-1h1v-1h1v1h2v-1h2v1h7v-1h1v1h7v-1h1v1h3v-1h2v1h11v-1h4v1h4v-1h1v1h2v-1h2v1h2v1h1v-1h2v-1h1v2h1v-2h1v2h1v-1h1v-1h1v1h2v-1h2v1h4v-1h1v1h4v-1h1v1h2v-1h3v1h1v1h1v-1h1v-1h3v1h8v-1h1v1h2v-1h2v1h3v-1h1v1h1v-1h1v1h2v-1h3v1h4v-1h3v1h2v-1h1v1h12v-1h2v1h2v-1h2v2h1v-1h2v-1h1v1h2v-1h2v1h2v1h1v-1h3v-1h1v1h7v-1h2v1h1v1h1v-1h4v-1h1v1h1v-1h2v1h1v-1h2v1h2v-1h4v1h3v-1h3v1h5v-1h1v1h2v-1h1v1h1v-1h2v1h9v-1h1v1h5v-1h5v1h2v-1h2v1h4v-1h4v1h1v-1h3v1h2v1h1v-1h1v-1h2v1h3v1h1v-1h1v-1h1v1h7v-1h1v1h1v-1h1v1h11v-1h1v1h1v-1h1v1h4v1h1v-1h5v1h1v-1h2v-1h1v1h2v-1h1v2h1v-1h1v-1h2v1h1v-1h3v1h1v-1h1v1h2v-1h1v1h3v-1h1v1h6v-1h2v1h1v-1h1v1h1v-1h1v1h3v1h1v-1h2v-1h1v1h1v-1h2v1h1v-1h2v1h2v-2h1v2h7v-1h3v1h3v-1h2v1h8v-1h2v1h2v-1h1v1h2v-1h1v1h1v1h1v-1h4v-1h1v1h6v-1h5v1h3v-1h1v1h2v-2h1v2h3v-1h3v1h9v-1h1v1h4v-1h1v1h7v-2h3v2h4v-1h1v1h2v-1h1v-1h1v2h4v-1h2v1h1v-1h3v1h3v-1h1v1h5v-1h2v1h1v-1h4v1h1v-1h1v1h2v-1h2v1h3v-1h1v1h1v-1h4v1h5v-1h1v1h2v-1h1v1h2v-1h2v1h3v-1h2v1h1v-1h2v1h1v-1h2v1h1v-1h1v1h1v-1h1v1h3v-1h2v1h1v-1h1v1h3v-1h3v1h4v-1h1v1h1v-1h1v1h6v-1h2v1h1v-1h2v-1h1v2h2v-1h1v1h4v-1h2v1h1v-1h2v1h4v1h1v-1h5v-1h2v1h1v-1h1v1h2v-1h3v1h1v1h1v-1h2v-1h1v1h2v-1h2v1h2v-1h2v1h2v-1h1v1h4v-1h2v1h4v-1h2v1h5v-1h2v1h4v-1h1v1h4v-1h1v1h1v-1h3v1h2v-1h1v-1h1v2h7v-1h1v1h3v-1h1v1h4v-1h1v1h1v1h1v-1h2v-1h3v1h3v-1h1v1h5v-1h1v1h2v-1h1v-1h1v1h1v1h1v-1h1v1h5v-2h1v2h1v-1h1v1h4v-1h3v1h7v-1h4v1h2v1h1v-2h1v1h6v1h1v-2h1v1h1v-1h3v1h2v-1h1v1h8v-1h2v1h6v1h1v-1h1v-1h1v1h9v-1h1v1h15v-1h1v2h1v-1h1v-1h2v1h3v-2h1v2h5v-1h1v1h1v-1h2v1h2v-1h2v1h5v-1h2v1h5v-1h1v1h2v-1h1v1h2v-1h1v1h1v-1h1v1h15v-1h1v1h1v-1h3v1h2v-1h2v1h1v-1h1v1h3v-1h2v2h1v-1h1v-1h1v1h1v-1h1v1h1v-1h3v1h3v1h1V814h-3v-1h-1v1h-3v-1h-1v1h-2v-1h-2v1h-1v2h-1v-2h-4v-1h-1v1h-3v1h-1v-1h-2v1h-1v-2h-2v1h-4v1h-1v-1h-3v1h-1v-2h-1v2h-1v-1h-2v1h-1v-1h-3v-1h-1v2h-1v-1h-1v-1h-1v1h-1v1h-2v-2h-1v2h-1v-1h-1v-1h-1v1h-4v1h-4v-1h-2v1h-2v-1h-2v-1h-1v1h-2v1h-1v-1h-6v1h-1v-1h-2v-1h-1v1h-2v1h-2v-1h-4v1h-3v-1h-4v1h-1v-1h-3v1h-1v-1h-3v1h-2v-1h-2v1h-1v-1h-1v1h-1v-1h-14v1h-1v-1h-2v1h-1v-1h-1v-1h-1v1h-1v1h-1v-1h-4v1h-1v-1h-3v1h-1v-1h-2v1h-1v-1h-9v1h-1v-1h-3v1h-1v-2h-1v2h-1v-1h-8v-1h-1v1h-1v1h-1v-1h-3v-1h-1v1h-7v1h-1v-1h-2v1h-1v-1h-2v-1h-2v1h-1v-1h-1v1h-11v1h-1v-1h-1v-1h-1v1h-3v1h-2v-1h-1v-1h-2v1h-10v1h-1v-1h-2v1h-1v-1h-4v1h-1v-1h-1v-1h-1v1h-1v1h-2v-1h-1v-1h-2v1h-10v2h-3v-2h-5v1h-1v-1h-7v1h-3v-1h-6v1h-1v-1h-3v1h-1v-1h-1v1h-1v-1h-1v1h-1v-1h-1v1h-1v-1h-6v-1h-1v2h-4v-1h-3v1h-1v-1h-2v1h-2v-1h-3v-1h-1v1h-4v1h-2v-1h-4v1h-3v-1h-10v1h-1v1h-3v-1h-2v-1h-1v2h-2v-1h-2v1h-1v-2h-4v1h-1v-1h-3v1h-2v-1h-1v1h-1v-1h-1v1h-3v-1h-2v1h-1v-1h-1v1h-1v-1h-2v1h-1v-1h-6v1h-1v-1h-2v1h-1v-1h-1v1h-2v-2h-1v2h-1v-1h-8v1h-2v-1h-2v1h-2v-1h-1v1h-2v-1h-1v1h-1v-1h-6v-1h-2v1h-3v-1h-1v1h-2v1h-1v-1h-1v-1h-1v1h-2v-1h-1v2h-2v-1h-3v1h-1v-1h-2v1h-1v-1h-3v1h-1v-1h-2v1h-1v-1h-14v1h-2v-1h-1v2h-1v-2h-1v-1h-1v1h-3v1h-1v-1h-1v1h-1v-1h-4v1h-2v-1h-6v-1h-1v2h-1v-1h-2v1h-1v-1h-1v1h-1v-1h-16v1h-1v-1h-5v1h-1v-1h-2v1h-1v-1h-3v1h-1v-1h-10v1h-2v1h-1v-2h-4v1h-1v-1h-2v1h-1v-1h-1v-1h-1v1h-2v1h-1v-1h-5v1h-1v-1h-3v1h-2v-1h-7v1h-1v-1h-18v1h-1v-1h-4v1h-2v-1h-6v1h-1v-1h-1v-1h-1v1h-2v1h-1v-1h-1v1h-2v-1h-3v1h-1v-2h-1v1h-2v1h-1v-1h-2v-1h-1v1h-4v1h-2v-1h-2v1h-3v-1h-2v-1h-1v1h-1v-1h-1v1h-4v1h-4v-1h-7v1h-1v-1h-1v-1h-1v2h-1v-1h-4v1h-2v-1h-2v1h-2v-1h-3v2h-1v-2h-2v1h-1v-1h-1v1h-1v-1h-7v-1h-1v1h-1v-1h-1v1h-2v1h-1v-1h-1v1h-1v-1h-3v1h-1v-1h-1v1h-2v-1h-3v-1h-1v1h-10v1h-2v-1h-1v1h-1v-1h-2v1h-1v-1h-1v1h-1v-1h-1v-1h-1v1h-8v2h-2v-2h-6v1h-2v-1h-1v-1h-1v1h-4v1h-1v-1h-8v1h-1v-1h-5v-1h-1v1h-5v1h-1v-2h-1v1h-1v1h-1v-1h-3v1h-1v-1h-8v1h-1v-2h-1v1h-5v-1h-1v1h-1v1h-1v-1h-1v1h-4v-1h-3v1h-1v-1h-1v1h-1v-1h-4v1h-4v-1h-8v1h-3v-1h-7v1h-1v-2h-1v1h-1v1h-1v-1h-2v-1h-1v1h-3v1h-1v-1h-5v-1h-1v1h-5v-1h-1v1h-1v1h-1v-1h-1v1h-2v-1h-2v1h-1v-1h-1v1h-2v-1h-3v1h-1v-1h-9v1h-2v-1h-9v1h-2v-1h-5v1h-1v-1h-1v1h-1v-1h-5v1h-1v-1h-1v1h-2v-1h-3v-1h-1v1h-2v1h-3v-1h-2v1h-1v-1h-1v1h-2v-1h-1v1h-4v-1h-1v1h-1v-1h-6v1h-1v-1h-1v1h-1v-1h-3v-1h-1v2h-1v-1h-1v1h-2v-1h-3v2h-1v-2h-2v1h-2v-1h-1v1h-1v-1h-2v1h-1v-1h-6v1h-2v-1h-2v1h-1v-1h-5v1h-1v-1h-3v1h-1v-1h-3v-1h-1v1h-1v1h-1v-1h-4v1h-1v-1h-2v1h-1v-1h-2v1h-1v1h-1v-1h-1v-1h-4v1h-3v-1h-3v1h-1v-1h-1v1h-2v-1h-1v1h-2v-1h-3v1h-1v-1h-1v1h-1v-1h-5v1h-2v-1h-6v1h-1v-1h-1v1h-1v-1h-1v1h-1v-1h-3v1h-1v-1h-2v1h-1v-1h-6v-1h-1v2h-2v-1h-2v-1h-1v1h-3v1h-1v-1h-2v1h-1v-1h-2v-1h-1v1h-2v1h-1v-1h-4v1h-1v-1h-5v1h-1v-1h-11v1h-2v-1h-1v1h-1v-1h-6v-1h-1v1h-2v1h-3v-1h-1v1h-1v-1h-1v1h-3v-1h-1v1h-1v-1h-7v3h-2v-3h-1v1h-1v-1h-2v1h-1z"/>
<path d="M88 840h1v-1h2v1h4v-1h4v-1h2v2h2v1h1v-1h9v-1h1v1h2v-1h1v1h3v-1h2v1h3v-1h2v1h2v1h1v-2h2v1h3v-1h1v1h1v-2h1v2h1v-1h1v1h5v-1h2v1h1v-1h1v1h3v-1h2v1h3v-1h3v1h4v-1h1v1h2v1h1v-1h2v1h1v-2h4v1h2v-1h1v2h1v-1h2v-1h2v1h11v-1h1v2h2v-1h6v-1h3v1h2v1h1v-1h1v-1h1v1h4v-3h1v2h1v1h2v1h1v-1h6v-1h5v1h5v-1h1v1h4v-1h3v1h4v-2h2v1h3v1h2v-1h1v1h2v-2h2v2h2v-1h1v1h2v-1h1v1h2v-1h1v1h7v1h1v-2h1v1h6v-1h1v1h6v-1h1v1h3v-1h1v1h3v-1h1v1h7v-1h1v1h1v1h1v-1h3v1h1v-1h1v-1h1v1h4v-1h2v1h1v-1h1v1h1v-1h1v1h4v-1h1v1h1v-1h1v1h2v1h1v-2h1v1h6v1h1v-1h5v-1h2v1h6v-1h4v1h1v-1h1v1h2v-1h1v1h1v-2h1v2h2v-1h3v1h1v1h1v-1h4v-1h1v2h1v-1h8v-1h1v1h2v-1h1v1h1v-2h1v2h3v-2h3v1h2v2h1v-2h3v1h5v-1h2v1h3v-1h1v2h1v-1h9v-1h1v1h15v-1h1v1h3v-1h1v1h2v-1h1v1h1v1h1v-1h1v-1h5v1h2v-1h1v1h6v-1h1v1h11v-1h2v1h4v-1h1v1h3v1h1v-1h1v-1h2v1h5v1h1v-1h1v-1h1v1h2v1h1v-2h1v1h1v-1h1v1h1v-1h1v1h1v-1h2v1h13v-1h5v1h1v-1h2v1h8v-1h1v1h4v1h1v-2h1v1h1v-1h2v1h1v-2h2v1h1v1h9v-1h1v1h1v-1h2v1h11v-1h2v1h2v-1h2v1h6v-1h1v1h2v-1h1v1h1v1h1v-3h1v2h5v-1h1v1h1v-1h2v1h1v-1h1v1h1v1h1v-1h2v-1h1v1h5v-1h1v-1h1v2h1v-1h1v-1h1v2h4v-1h3v1h1v-1h5v1h3v-1h1v1h9v1h1v-1h1v-1h2v1h6v-1h1v-1h1v3h1v-1h3v-1h1v1h1v-1h3v2h1v-2h1v2h1v-1h8v-1h3v1h1v-1h2v1h1v-1h1v1h4v-1h1v2h1v-1h1v-1h1v1h2v-1h1v1h1v-1h1v1h1v-1h1v1h3v-1h3v1h4v-1h3v1h15v-1h2v1h1v-1h2v1h4v-1h1v1h1v-1h2v1h1v1h1v-1h4v-1h2v1h1v-1h1v1h6v-1h2v1h1v-2h1v2h1v-2h3v1h4v1h3v-1h1v1h1v-1h1v1h4v-1h1v1h1v-1h1v1h2v-1h2v1h3v-1h1v1h2v-1h1v1h5v1h1v-1h2v1h1v-1h2v-1h2v1h1v-1h3v1h1v-1h2v1h1v-1h1v2h1v-1h4v1h1v-2h1v1h1v1h1v-1h3v-1h1v1h4v-1h1v1h3v-1h1v1h5v-1h1v1h1v-1h1v1h1v-1h2v-1h1v2h10v-1h1v1h3v1h1v-1h1v-1h2v1h4v-2h1v1h1v1h2v-1h1v1h1v-1h1v-1h1v2h2v-4h1v3h1v-1h2v1h1v1h3v-1h1v1h1v-1h1v1h3v-1h2v2h1v-1h2v-1h1v1h1v-1h3v1h1v1h1v-3h1v2h4v-1h1v1h3v-1h4v1h1v-1h2v1h1v-1h7v1h7v1h1v-1h3v-1h2v1h2v-1h3v1h4v-1h1v2h1v-2h1v1h1v-1h2v1h3v-1h1v1h3v-1h1v1h10v-1h1v1h3v-1h1v1h15v-1h1v1h2v-1h1v1h1v-1h1v1h7v-1h3v1h3v1h1v-1h3v-1h2v-1h1v2h1v-1h1v1h8v-1h1v1h2v-1h1v1h5v-1h2v1h5v-1h1v1h2v-2h1v1h1v1h4v-1h1v-1h2v2h2v-1h1v1h3v1h1v-2h3v1h2v-1h1v1h5v-1h1v1h4v-1h1v1h7v-1h1v1h1v1h1v-2h1v1h7v-1h1v1h1v1h1v-2h2v1h2v1h1v-2h1v1h6v-1h1v2h1v-1h10v-1h2v1h1v-1h1v1h2v-1h1v1h4v-1h1v1h4v-1h1v1h1v-1h1v1h3v-1h1v1h1v-1h1v1h6v-1h1v1h2v-1h1v1h2v-1h1v2h1v-2h1v1h2v-1h2v1h1v-1h1v-1h1v2h1v-1h5v1h3v-2h1v2h2v-1h2v-2h1v4h1v-2h5v1h1v-1h3v1h1v-1h1v1h2V846h-1v-1h-2v1h-2v-1h-1v1h-2v-1h-1v1h-1v-1h-2v1h-1v-1h-1v1h-2v-1h-1v1h-1v-1h-1v2h-1v-1h-1v-1h-6v1h-1v1h-1v-2h-5v1h-2v-1h-1v-1h-1v2h-2v-1h-7v-1h-1v1h-19v1h-1v-1h-2v1h-1v-2h-1v1h-3v1h-2v-2h-1v1h-2v-1h-1v1h-11v1h-1v-1h-7v1h-1v-1h-4v1h-5v-1h-5v-1h-1v1h-6v-1h-1v1h-8v1h-1v-2h-2v1h-15v-1h-1v1h-9v1h-2v-1h-1v1h-1v-1h-3v1h-1v-2h-1v1h-12v1h-2v-1h-9v1h-1v-1h-1v-1h-1v1h-1v1h-1v-1h-2v-1h-1v1h-1v1h-3v-1h-3v1h-1v-1h-3v-1h-1v2h-2v-1h-3v-1h-1v2h-1v-1h-1v-1h-1v1h-1v1h-1v-1h-8v1h-1v-1h-1v1h-1v-1h-8v-1h-1v1h-1v1h-1v-2h-1v2h-1v-1h-4v-1h-1v1h-1v1h-1v-1h-1v-1h-1v1h-30v-1h-1v1h-3v1h-1v-1h-10v1h-1v-1h-6v1h-2v-1h-7v1h-1v-1h-2v1h-3v-1h-1v1h-1v-1h-1v2h-1v-2h-1v1h-1v-1h-6v-1h-1v1h-9v-1h-1v2h-1v-1h-5v-1h-1v1h-8v1h-1v-1h-1v1h-3v-1h-6v-1h-1v1h-3v1h-2v-1h-1v1h-1v-1h-5v1h-2v-1h-7v-1h-2v2h-1v-1h-1v-1h-1v1h-1v3h-1v-3h-1v1h-1v-1h-11v1h-1v-1h-1v1h-2v-1h-6v-1h-1v1h-1v1h-2v-1h-2v-1h-1v1h-1v1h-1v-1h-3v1h-1v-1h-3v1h-2v-1h-1v2h-3v-2h-1v1h-1v-1h-3v-1h-1v1h-1v1h-1v-1h-5v1h-1v1h-1v-2h-11v-1h-1v1h-9v-1h-2v1h-3v1h-2v-1h-2v-1h-1v1h-1v-1h-1v1h-7v1h-3v-1h-2v1h-1v-1h-3v-1h-1v1h-6v1h-1v-1h-12v1h-1v-1h-1v-1h-1v1h-7v-1h-1v1h-3v-1h-1v2h-1v-1h-18v1h-1v-1h-1v1h-2v-1h-4v1h-2v-1h-4v1h-1v-1h-4v1h-1v-1h-1v1h-1v-1h-3v1h-2v-1h-1v1h-1v-1h-13v-1h-1v1h-4v1h-1v-1h-4v-1h-1v1h-11v-1h-1v2h-1v-1h-1v-1h-1v1h-1v-1h-1v1h-7v1h-1v-1h-1v1h-1v-2h-1v1h-2v1h-1v-2h-1v1h-7v1h-1v-2h-1v1h-6v1h-1v-1h-4v2h-1v-2h-2v-1h-1v1h-7v-1h-1v1h-1v1h-1v-1h-2v1h-1v-1h-11v-1h-1v1h-4v-1h-2v1h-5v1h-1v-2h-1v1h-4v1h-1v-1h-9v1h-1v-1h-10v1h-1v-1h-1v1h-1v-1h-2v1h-1v-1h-3v1h-2v-1h-2v-1h-1v1h-6v-1h-1v2h-2v-1h-1v1h-2v-1h-5v-1h-2v1h-9v-1h-1v1h-3v1h-2v-1h-10v-1h-1v1h-3v-1h-1v1h-4v1h-1v-1h-6v1h-2v-1h-3v1h-1v1h-2v-1h-1v-1h-10v1h-1v-1h-1v1h-1v-1h-1v1h-1v-1h-2v-1h-1v1h-1v1h-1v-1h-1v-1h-1v1h-10v1h-4v-1h-1v1h-2v-1h-5v-1h-1v2h-2v-1h-3v-1h-2v1h-8v1h-1v-1h-1v-1h-1v1h-4v1h-1v-1h-6v-1h-1v1h-7v1h-1v-1h-2v1h-1v-1h-2v1h-3v-1h-16v1h-3v-1h-7v-1h-1v1h-3v-1h-1v1h-2v1h-1v-1h-1v-1h-1v1h-9v1h-1v-1h-11v-1h-1v1h-2v1h-2v-1h-12v-1h-1v1h-2v1h-1v-1h-9v-1h-1v3h-2v-2h-1v1h-3v-1h-3v1h-2v-1h-6v1h-1v-1h-4v-1h-1v1h-3v-1h-1v1h-2v-1h-1v2h-1v-1h-1v1h-1v-1h-4v1h-1v-1h-3v1h-2v-1h-1v-1h-1v1h-2v-1h-1v1h-2v-1h-1v1h-23v-1h-1v1h-1v1h-2v-1h-1v1h-1v-1h-1v-1h-1v1h-1v1h-1v-1h-15v-1h-1v1h-1v1h-1v-1h-6v1h-1v-1h-12v1h-4v-1h-3z"/>
<path d="M88 870h2v1h1v-1h2v-1h1v1h1v-2h2v1h2v1h2v-1h3v1h1v1h1v-1h1v-1h2v1h1v-1h4v-1h6v2h2v-1h1v-1h1v2h3v-1h3v2h1v-2h2v1h1v-1h4v1h2v-1h1v1h1v-1h2v1h3v1h1v-1h1v-1h2v1h3v-1h3v1h1v-1h1v1h4v-1h3v1h1v-1h4v1h2v-1h1v1h2v-1h2v1h1v-2h2v2h1v-1h1v1h8v-1h2v1h2v-1h1v1h2v-1h2v1h2v-1h1v1h5v-1h3v1h1v-2h1v2h3v-1h1v1h1v-1h1v1h7v-1h1v1h1v-1h2v1h2v-1h3v-1h1v1h1v1h1v-2h3v1h1v-1h2v1h5v1h2v-1h3v1h1v-1h1v1h1v1h2v-2h2v1h1v-1h1v2h1v-2h2v1h1v-1h1v2h1v-1h10v-1h1v1h1v1h1v-1h4v-1h1v1h5v-1h1v2h1v-1h3v-1h1v1h4v-1h1v1h1v-1h2v1h3v-1h1v1h2v-1h3v1h1v1h1v-1h9v-1h1v1h3v-1h3v1h1v-1h1v1h3v-1h1v1h2v-1h1v1h2v-1h1v1h1v1h1v-2h1v1h2v1h1v-1h1v-1h1v1h3v1h1v-1h1v-1h1v1h1v-1h1v1h2v-1h1v2h1v-1h1v-1h1v1h2v-1h2v1h2v-1h2v1h2v-1h1v1h2v-1h2v1h3v1h1v-1h1v-1h1v1h7v-1h1v1h2v-1h2v1h1v-1h2v1h3v-1h1v1h3v-1h2v1h2v-1h1v1h4v-1h1v1h6v-1h1v2h1v-3h1v2h3v-1h1v1h2v1h1v-1h2v-1h2v1h1v-1h1v1h1v1h1v-1h3v1h1v-2h1v1h2v1h1v-1h5v1h1v-1h1v-1h1v1h3v-1h1v1h1v-1h1v2h1v-1h9v1h1v-1h1v-1h1v1h1v-1h1v1h2v-1h1v1h6v-2h1v2h6v-1h1v1h2v1h1v-1h5v-1h1v1h1v1h1v-2h1v1h1v-1h2v1h7v-1h1v1h1v-1h4v1h2v-1h5v1h3v1h1v-1h5v1h1v-2h1v2h1v-2h2v2h1v-1h4v-1h1v1h3v-1h1v1h1v-1h1v1h1v-1h2v1h1v-1h7v1h4v1h1v-2h2v1h1v-1h1v1h3v-1h2v1h5v-1h2v1h9v-1h1v1h2v-1h1v2h1v-1h11v-1h1v1h2v1h1v-1h1v1h1v-1h1v-1h2v1h5v-1h1v1h1v-1h1v1h2v-2h1v1h1v1h1v1h1v-2h2v1h4v-1h3v-1h1v1h1v1h1v-3h2v2h1v1h3v-1h1v1h1v-1h4v1h2v1h1v-1h1v-1h1v1h1v-1h1v1h2v-1h1v1h14v-1h1v1h6v-1h1v1h3v1h1v-1h7v-1h1v1h1v-1h1v1h4v-1h3v1h4v-1h1v1h5v-3h1v3h2v-1h1v1h1v-1h2v1h1v-1h2v2h1v-1h1v-1h1v1h1v1h1v-1h1v-1h1v1h2v-2h2v2h3v-1h1v1h6v-1h2v-1h2v2h1v1h1v-1h2v-1h4v1h1v-2h1v2h1v-1h2v1h1v-1h1v1h3v1h1v-1h4v-2h1v1h1v1h5v1h1v-1h3v-1h4v1h2v-1h1v1h1v-1h1v1h2v-1h1v1h2v-1h1v1h2v-1h5v-1h2v1h1v1h1v-1h1v1h1v-1h1v1h1v-1h2v1h2v-2h2v1h1v1h1v-1h1v1h4v-2h1v1h1v1h1v1h1v-2h1v2h1v-1h1v-1h1v1h2v-1h1v1h3v-1h3v1h3v-1h1v2h1v-2h1v1h10v-1h1v1h3v-1h1v1h2v-1h1v1h5v-1h2v1h6v-1h1v1h1v-1h1v1h1v-1h1v1h2v1h1v-1h2v-1h1v1h2v-1h2v1h1v-1h3v1h2v-1h1v1h1v-1h1v1h6v-1h1v1h1v-1h1v1h1v-1h1v1h2v1h1v-2h1v1h1v-1h1v-1h1v1h2v1h5v-1h1v1h1v-1h1v1h1v-1h4v1h1v-1h1v1h2v-1h1v1h1v-1h1v-2h1v1h5v1h1v1h2v-1h5v1h2v-1h1v1h2v-1h2v1h3v-1h1v1h5v1h1v-1h2v-1h3v1h2v-1h1v1h2v-1h1v1h3v-1h1v1h8v-1h1v1h7v-1h2v1h3v-1h1v1h4v-1h3v1h2v-1h3v1h1v-1h3v-1h1v1h2v-1h1v1h5v1h3v1h1v-2h3v1h1v-1h1v1h1v-1h1v1h2v-1h1v1h4v-1h4v1h6v-1h1v1h1v-1h1v1h2v1h1V875h-1v-1h-1v1h-5v2h-2v-2h-3v1h-1v-1h-3v-1h-1v1h-2v1h-2v-1h-4v-1h-1v1h-6v1h-2v3h-1v-3h-1v1h-2v-3h-1v1h-1v2h-1v-2h-1v1h-1v-1h-1v1h-2v-1h-3v1h-2v-2h-1v1h-5v1h-1v-2h-1v1h-10v-1h-1v1h-11v1h-2v-1h-3v2h-2v-1h-1v-1h-2v1h-1v-1h-1v1h-1v-1h-2v1h-2v-1h-3v1h-1v-1h-14v-1h-1v2h-4v1h-1v-3h-1v1h-1v-1h-1v1h-1v2h-1v-3h-1v2h-3v-1h-4v-1h-1v1h-3v1h-2v-1h-4v1h-1v-1h-4v-1h-1v2h-1v-1h-2v1h-1v-1h-1v1h-1v-1h-1v-1h-1v1h-2v1h-1v-2h-2v1h-1v-1h-1v2h-1v-1h-1v1h-2v-1h-13v1h-3v1h-1v-1h-1v-2h-1v2h-1v-1h-2v1h-1v-1h-10v1h-1v-1h-10v1h-1v-1h-3v1h-1v-1h-3v1h-1v-1h-2v1h-2v-1h-13v1h-1v-1h-1v1h-1v-1h-2v2h-2v-3h-1v1h-3v1h-1v-1h-4v1h-1v-1h-3v1h-3v-1h-1v1h-3v-1h-8v1h-1v-1h-1v-1h-1v1h-1v1h-1v-1h-1v-1h-1v1h-12v1h-1v-1h-3v1h-1v-2h-1v1h-5v1h-2v-1h-1v-1h-1v1h-1v-1h-1v2h-1v-1h-2v-1h-1v1h-2v-1h-1v2h-1v-1h-14v1h-4v-2h-1v2h-1v-1h-18v-1h-1v2h-1v-1h-2v1h-5v-1h-3v1h-2v-2h-1v1h-1v1h-1v-1h-2v2h-1v-2h-1v1h-1v-1h-2v1h-1v-1h-3v1h-2v-1h-2v1h-1v-1h-4v1h-1v-1h-2v1h-1v-1h-6v-1h-1v1h-1v1h-1v-1h-3v1h-3v-1h-1v1h-1v-1h-1v-1h-1v1h-1v1h-1v-1h-3v1h-1v-1h-7v1h-1v-1h-1v2h-1v-1h-1v1h-1v-1h-2v-1h-8v1h-1v-1h-7v-1h-1v1h-1v-1h-1v1h-5v-1h-1v2h-1v-1h-1v-1h-1v1h-5v1h-1v-1h-1v1h-1v-1h-1v-1h-1v1h-2v-1h-1v1h-2v-1h-1v1h-3v-1h-1v1h-4v2h-1v-2h-1v1h-2v-1h-2v1h-2v-1h-4v1h-1v-1h-1v1h-1v-1h-2v1h-1v-1h-6v1h-1v-1h-3v1h-1v-1h-11v1h-2v-1h-1v1h-1v-1h-1v-1h-1v1h-3v1h-1v-1h-1v1h-1v-1h-4v1h-1v-1h-6v1h-1v-1h-1v-1h-1v1h-1v1h-1v-1h-8v-1h-2v1h-14v-1h-1v2h-2v-1h-4v1h-1v-1h-5v1h-2v-1h-5v1h-1v-1h-1v1h-1v-1h-2v1h-1v-2h-2v1h-3v-1h-1v1h-5v-1h-1v2h-2v2h-1v-3h-3v1h-1v-1h-1v1h-2v-1h-8v1h-1v-1h-8v1h-1v-1h-5v-1h-1v3h-1v-1h-2v-1h-1v1h-4v-1h-5v-1h-1v1h-5v1h-3v-1h-1v-1h-1v1h-7v1h-2v-1h-2v1h-2v-1h-1v-1h-1v2h-1v-1h-2v1h-1v-1h-1v1h-2v-1h-2v-1h-1v1h-4v-1h-1v1h-2v1h-1v-1h-4v-1h-1v2h-4v-1h-1v1h-1v-1h-3v1h-2v-1h-9v1h-1v-1h-1v1h-1v-1h-2v1h-1v-1h-1v1h-2v-1h-2v2h-1v-2h-5v1h-1v-1h-4v1h-1v-1h-2v1h-2v-1h-6v1h-2v-2h-2v2h-6v-1h-3v-1h-1v1h-1v-1h-1v2h-1v-1h-4v-1h-1v3h-1v-3h-1v1h-7v1h-2v-1h-1v1h-1v-1h-1v1h-1v-1h-1v1h-1v-1h-7v1h-1v-1h-1v1h-1v-1h-1v1h-1v-1h-3v1h-1v-1h-2v1h-1v-1h-4v1h-1v-1h-4v1h-1v-1h-1v1h-3v2h-1v-3h-1v3h-1v-2h-1v-1h-3v1h-5v-1h-8v1h-1v-1h-5v-1h-1v1h-1v-1h-1v1h-6v-1h-1v1h-3v1h-1v-1h-2v1h-1v-1h-1v-1h-1v2h-2v-1h-1v-1h-1v1h-2v-1h-1v1h-3v1h-1v-1h-2v1h-2v-1h-2v1h-1v-1h-1v-1h-1v2h-1v-1h-2v1h-1v-1h-2v-1h-2v1h-2v1h-2v-1h-5v1h-1v-1h-2v-1h-2v1h-1v1h-4v-1h-2v1h-1v-1h-1v-1h-1v1h-4v1h-1v-2h-2v2h-1v-1h-6v1h-1v-1h-1v1h-5v1h-1v-2h-2v1h-2v1h-2v-1h-3v-2h-1v1h-2v1h-1v-1h-5v-1h-1v1h-1v1h-2v-2h-1v1h-3v-1h-1v1h-5v1h-1v-1h-1v1h-1v-1h-1z"/>
</g>
<g font-size="13px" text-anchor="middle" fill="#000">
<text x="163.5" y="138">02</text>
<text x="163.5" y="920">02</text>
<text x="238.5" y="138">04</text>
<text x="238.5" y="920">04</text>
<text x="313.5" y="138">06</text>
<text x="313.5" y="920">06</text>
<text x="388.5" y="138">08</text>
<text x="388.5" y="920">08</text>
<text x="463.5" y="138">10</text>
<text x="463.5" y="920">10</text>
<text x="538.5" y="138">12</text>
<text x="538.5" y="920">12</text>
<text x="613.5" y="138">14</text>
<text x="613.5" y="920">14</text>
<text x="687.5" y="138">16</text>
<text x="687.5" y="920">16</text>
<text x="762.5" y="138">18</text>
<text x="762.5" y="920">18</text>
<text x="837.5" y="138">20</text>
<text x="837.5" y="920">20</text>
<text x="912.5" y="138">22</text>
<text x="912.5" y="920">22</text>
<text x="987.5" y="138">24</text>
<text x="987.5" y="920">24</text>
<text x="1062.5" y="138">26</text>
<text x="1062.5" y="920">26</text>
<text x="1137.5" y="138">28</text>
<text x="1137.5" y="920">28</text>
<text x="1234.5" y="180">0:30</text>
<text x="1234.5" y="211">1:00</text>
<text x="1234.5" y="241">1:30</text>
<text x="1234.5" y="271">2:00</text>
<text x="1234.5" y="302">2:30</text>
<text x="1234.5" y="332">3:00</text>
<text x="1234.5" y="362">3:30</text>
<text x="1234.5" y="393">4:00</text>
<text x="1234.5" y="423">4:30</text>
<text x="1234.5" y="453">5:00</text>
<text x="1234.5" y="484">5:30</text>
<text x="1234.5" y="514">6:00</text>
<text x="1234.5" y="544">6:30</text>
<text x="1234.5" y="575">7:00</text>
<text x="1234.5" y="605">7:30</text>
<text x="1234.5" y="635">8:00</text>
<text x="1234.5" y="666">8:30</text>
<text x="1234.5" y="696">9:00</text>
<text x="1234.5" y="726">9:30</text>
<text x="1234.5" y="756">10:00</text>
<text x="1234.5" y="787">10:30</text>
<text x="1234.5" y="817">11:00</text>
<text x="1234.5" y="847">11:30</text>
<text x="1234.5" y="878">12:00</text>
</g>
<text x="650.5" y="102" font-size="21.5px" text-anchor="middle">Séismographe QCQ (CGC/GSC)</text>
<text x="650.8" y="961" font-size="18.15px" text-anchor="middle">Minutes écoulées</text>
<text x="1215.9" y="152" font-size="18.5px" text-rendering="geometricPrecision" fill="#ff0000">UTC</text>
<g font-size="16px"><text x="88" y="81">Département de géologie et de génie géologique</text><text x="88" y="100">Faculté des sciences et de génie</text><text x="88" y="119">Université Laval</text></g>
<g>
<path d="M1111.6 74.4h31.8v32.4q0 3.6 -3.6 3.9l-9.4 0.4l-3.0 4.0l-3.0 -4.0l-9.4 -0.4q-3.6 -0.3 -3.6 -3.9z" fill="#e21b26" stroke="#4e1512" stroke-width="0.9"/>
<path d="M1124.5 74.9h5.8v14.9h12.7v6.0h-12.7v15.4l-2.9 3.0l-2.9 -3.0v-15.4h-12.5v-6.0h12.5z" fill="#ffd100"/>
<path d="M1125.6 112.6l1.8 2.4l1.8 -2.4z" fill="#3a1a10"/>
<g fill="#1c8ee0"><ellipse cx="1127.4" cy="82.5" rx="2.3" ry="1.9"/><ellipse cx="1118.1" cy="92.9" rx="2.3" ry="1.9"/><ellipse cx="1127.4" cy="92.9" rx="2.3" ry="1.9"/><ellipse cx="1136.7" cy="92.9" rx="2.3" ry="1.9"/><ellipse cx="1127.4" cy="103.3" rx="2.3" ry="1.9"/></g>
<g fill="#e6ebea">
<ellipse cx="1115.2" cy="78.8" rx="1.9" ry="2.3"/><ellipse cx="1121.1" cy="78.8" rx="1.9" ry="2.3"/><ellipse cx="1133.8" cy="78.8" rx="1.9" ry="2.3"/><ellipse cx="1139.5" cy="78.8" rx="1.9" ry="2.3"/><ellipse cx="1115.2" cy="85.6" rx="1.9" ry="2.3"/><ellipse cx="1121.1" cy="85.6" rx="1.9" ry="2.3"/><ellipse cx="1133.8" cy="85.6" rx="1.9" ry="2.3"/><ellipse cx="1139.5" cy="85.6" rx="1.9" ry="2.3"/><ellipse cx="1115.2" cy="99.6" rx="1.9" ry="2.3"/><ellipse cx="1121.1" cy="99.6" rx="1.9" ry="2.3"/><ellipse cx="1133.8" cy="99.6" rx="1.9" ry="2.3"/><ellipse cx="1139.5" cy="99.6" rx="1.9" ry="2.3"/><ellipse cx="1115.2" cy="106.5" rx="1.9" ry="2.3"/><ellipse cx="1121.1" cy="106.5" rx="1.9" ry="2.3"/><ellipse cx="1133.8" cy="106.5" rx="1.9" ry="2.3"/><ellipse cx="1139.5" cy="106.5" rx="1.9" ry="2.3"/>
</g>
<text text-rendering="geometricPrecision" transform="translate(1149.6 86.2) scale(1 0.955)" font-size="10px" fill="#1a1a1a" stroke="#1a1a1a" stroke-width="0.15" textLength="62.2" lengthAdjust="spacingAndGlyphs">UNIVERSITÉ</text>
<text text-rendering="geometricPrecision" transform="translate(1148.6 105.8) scale(1 0.985)" font-size="23px" fill="#1a1a1a" textLength="63.8" lengthAdjust="spacingAndGlyphs">LAVAL</text>
</g>

</svg>
</div>
</body>
</html>
